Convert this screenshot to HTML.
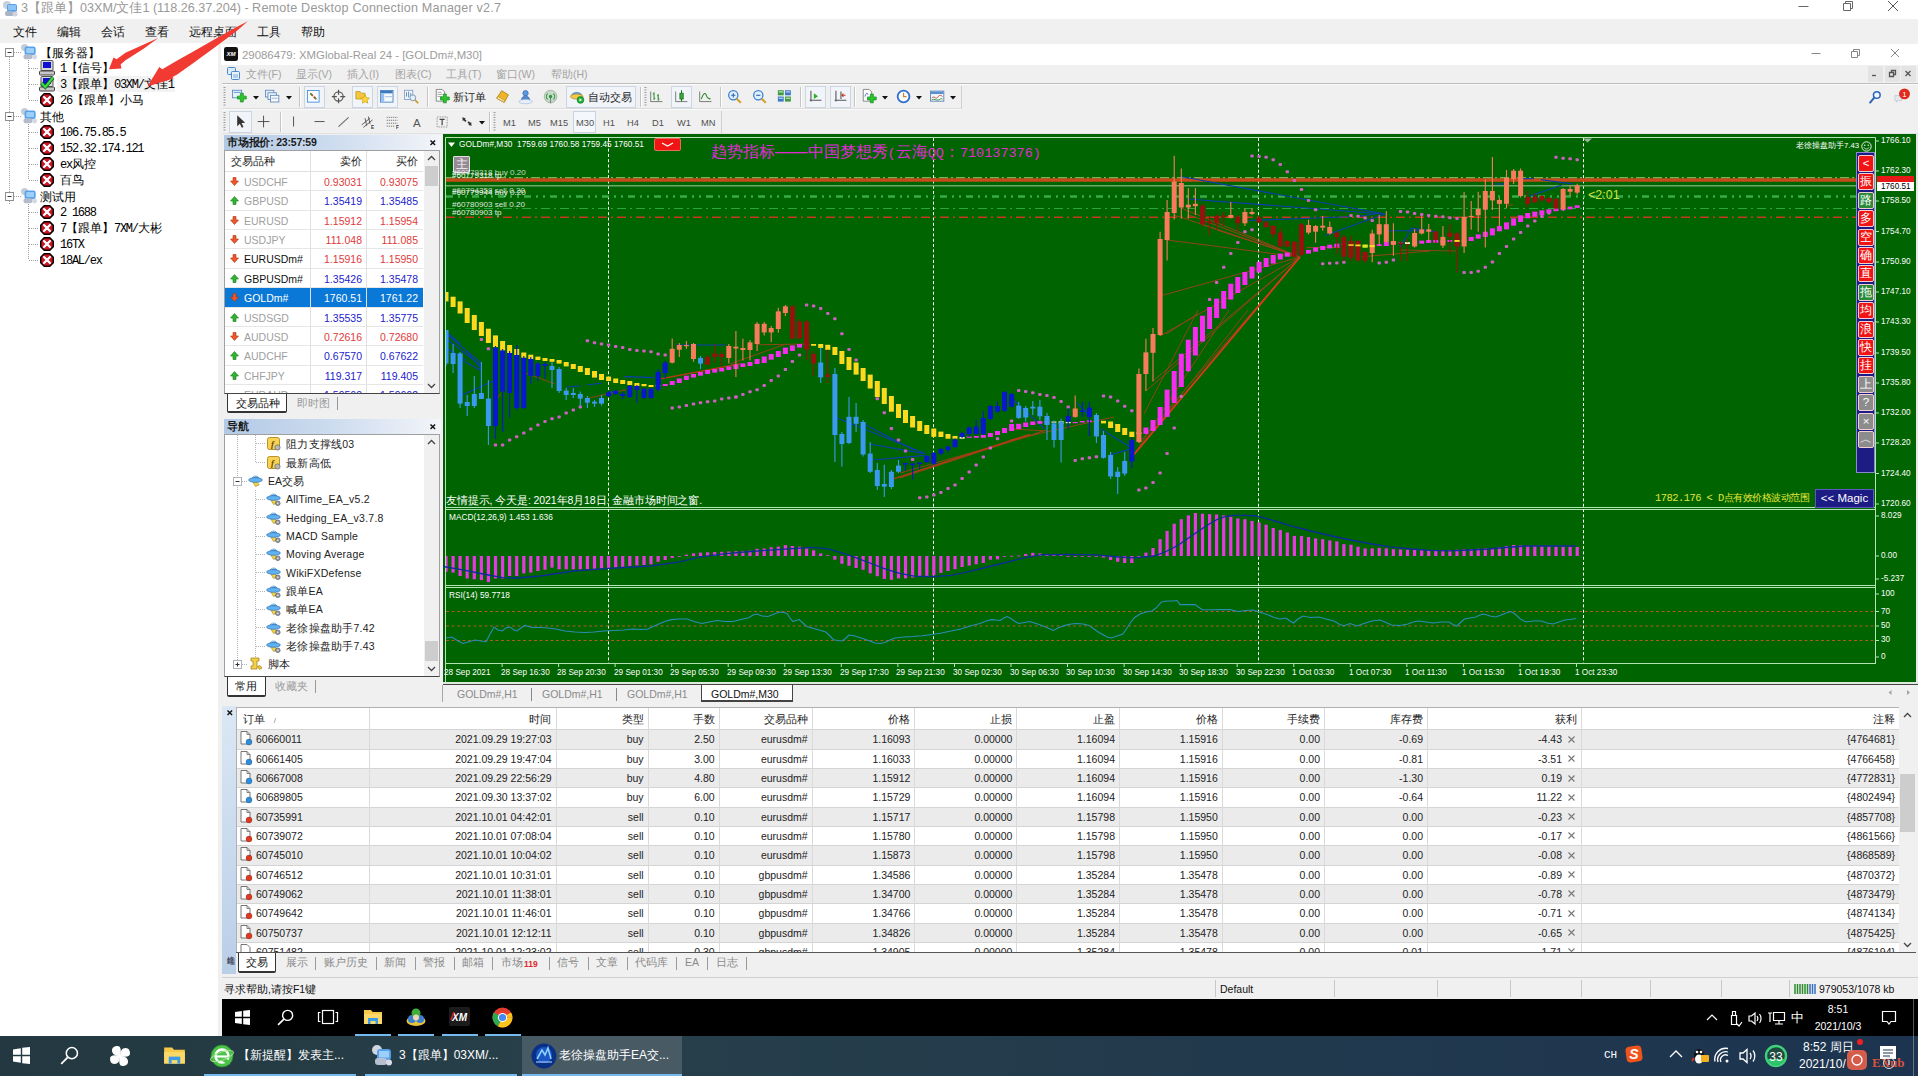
<!DOCTYPE html>
<html><head><meta charset="utf-8"><title>RDCMan - MT4</title><style>
*{box-sizing:border-box;margin:0;padding:0}
html,body{width:1918px;height:1076px;overflow:hidden;background:#fff}
body{font-family:"Liberation Sans",sans-serif;position:relative}
div{position:absolute}
svg{position:absolute;overflow:visible}
.m{font-family:"Liberation Mono",monospace}
</style></head>
<body>
<div style="left:0px;top:0px;width:1918px;height:19px;background:#ffffff;"></div>
<svg style="left:1px;top:0px" width="18" height="18" viewBox="0 0 18 18"><circle cx="6" cy="5" r="4" fill="#c8d0dc"/><rect x="6" y="4" width="10" height="8" rx="2" fill="#5aa0e8"/><rect x="7" y="5" width="8" height="5" fill="#8cc4f8"/><rect x="4" y="11" width="9" height="5" rx="2" fill="#a8b4c8"/><circle cx="14" cy="14" r="2.5" fill="#d0d4e0"/></svg>
<div style="left:21px;top:0px;font-size:12.6px;color:#999;white-space:nowrap;line-height:17px;height:17px;">3【跟单】03XM/文佳1 (118.26.37.204) - <span style="letter-spacing:0.2px">Remote Desktop Connection Manager v2.7</span></div>
<svg style="left:1790px;top:0" width="128" height="19"><path d="M8.5 6.5h10" stroke="#666" stroke-width="1" fill="none"/><path d="M53.5 3.5h7v7h-7z M55.5 3.5v-2h7v7h-2" stroke="#666" stroke-width="1" fill="none"/><path d="M98 1l10 10M108 1l-10 10" stroke="#555" stroke-width="1" fill="none"/></svg>
<div style="left:0px;top:19px;width:1918px;height:25px;background:#f0f0f0;"></div>
<div style="left:13px;top:24px;font-size:12px;color:#111;white-space:nowrap;line-height:16px;height:16px;">文件</div>
<div style="left:57px;top:24px;font-size:12px;color:#111;white-space:nowrap;line-height:16px;height:16px;">编辑</div>
<div style="left:101px;top:24px;font-size:12px;color:#111;white-space:nowrap;line-height:16px;height:16px;">会话</div>
<div style="left:145px;top:24px;font-size:12px;color:#111;white-space:nowrap;line-height:16px;height:16px;">查看</div>
<div style="left:189px;top:24px;font-size:12px;color:#111;white-space:nowrap;line-height:16px;height:16px;">远程桌面</div>
<div style="left:257px;top:24px;font-size:12px;color:#111;white-space:nowrap;line-height:16px;height:16px;">工具</div>
<div style="left:301px;top:24px;font-size:12px;color:#111;white-space:nowrap;line-height:16px;height:16px;">帮助</div>
<div style="left:0px;top:43px;width:218px;height:993px;background:#ffffff;"></div>
<div style="left:218px;top:43px;width:4px;height:993px;background:#f0f0f0;"></div>
<div style="left:221px;top:44px;width:1697px;height:21px;background:#ffffff;"></div>
<svg style="left:224px;top:47px" width="14" height="14" viewBox="0 0 15 15"><rect width="15" height="15" rx="2.5" fill="#111"/><text x="7.5" y="10" font-size="6.5" font-weight="bold" font-style="italic" text-anchor="middle" fill="#fff" font-family="Liberation Sans">XM</text></svg>
<div style="left:242px;top:47px;font-size:11.4px;color:#9c9c9c;white-space:nowrap;line-height:16px;height:16px;">29086479: XMGlobal-Real 24 - [GOLDm#,M30]</div>
<svg style="left:1800px;top:43px" width="118" height="22"><path d="M11.5 10.5h9" stroke="#888" fill="none"/><path d="M51.5 8.5h6v6h-6z M53.5 8.5v-2h6v6h-2" stroke="#888" fill="none"/><path d="M91 6l8 8M99 6l-8 8" stroke="#888" fill="none"/></svg>
<div style="left:222px;top:65px;width:1696px;height:19px;background:#f0f0f0;"></div>
<svg style="left:226px;top:66px" width="15" height="15" viewBox="0 0 15 15"><rect x="1.5" y="1.5" width="8" height="7" rx="1" fill="#dcebf8" stroke="#4a88c8"/><rect x="5.5" y="5.5" width="8" height="8" rx="1" fill="#eaf3fb" stroke="#4a88c8"/><path d="M7 9h5M7 11h5" stroke="#7aa6d8"/></svg>
<div style="left:246px;top:67px;font-size:10.5px;color:#a4a4a4;white-space:nowrap;line-height:14px;height:14px;">文件(F)</div>
<div style="left:296px;top:67px;font-size:10.5px;color:#a4a4a4;white-space:nowrap;line-height:14px;height:14px;">显示(V)</div>
<div style="left:347px;top:67px;font-size:10.5px;color:#a4a4a4;white-space:nowrap;line-height:14px;height:14px;">插入(I)</div>
<div style="left:395px;top:67px;font-size:10.5px;color:#a4a4a4;white-space:nowrap;line-height:14px;height:14px;">图表(C)</div>
<div style="left:446px;top:67px;font-size:10.5px;color:#a4a4a4;white-space:nowrap;line-height:14px;height:14px;">工具(T)</div>
<div style="left:496px;top:67px;font-size:10.5px;color:#a4a4a4;white-space:nowrap;line-height:14px;height:14px;">窗口(W)</div>
<div style="left:551px;top:67px;font-size:10.5px;color:#a4a4a4;white-space:nowrap;line-height:14px;height:14px;">帮助(H)</div>
<svg style="left:1868px;top:66px" width="16" height="16"><rect width="15" height="16" fill="#e4e4e4"/><path d="M4 9.5h4" stroke="#555" stroke-width="1.3" fill="none"/></svg>
<svg style="left:1885px;top:66px" width="16" height="16"><rect width="15" height="16" fill="#e4e4e4"/><path d="M4.5 6.5h4v4h-4zM6.5 6.5v-2h4v4h-2" stroke="#555" stroke-width="1.3" fill="none"/></svg>
<svg style="left:1901px;top:66px" width="16" height="16"><rect width="15" height="16" fill="#e4e4e4"/><path d="M4.5 5l5 5M9.5 5l-5 5" stroke="#555" stroke-width="1.3" fill="none"/></svg>
<div style="left:222px;top:83px;width:1696px;height:1px;background:#bdbdbd;"></div>
<div style="left:222px;top:84px;width:1696px;height:1px;background:#fbfbfb;"></div>
<div style="left:222px;top:85px;width:1696px;height:48px;background:#f0f0f0;"></div>
<div style="left:222px;top:108px;width:740px;height:1px;background:#dcdcdc;"></div>
<div style="left:222px;top:109px;width:740px;height:1px;background:#fafafa;"></div>
<div style="left:961px;top:86px;width:1px;height:23px;background:#d0d0d0;"></div>
<div style="left:721px;top:111px;width:1px;height:22px;background:#d0d0d0;"></div>
<div style="left:222px;top:133px;width:1696px;height:1px;background:#e2e2e2;"></div>
<svg style="left:223px;top:87px" width="3" height="20"><path d="M1.5 0v20" stroke="#9a9a9a" stroke-width="2" stroke-dasharray="1,1.5"/></svg>
<svg style="left:232.4px;top:89.4px" width="15.1" height="15.1" viewBox="0 0 18 18"><rect x="0.5" y="1.5" width="11" height="9" fill="#e8f2fb" stroke="#4d86c6"/><path d="M2 4h8" stroke="#4d86c6"/><path d="M6.5 8.5h3.5v-3.5h3.5v3.5h3.5v3.5h-3.5v3.5h-3.5v-3.5h-3.5z" fill="#2cc62c" stroke="#11861a" stroke-width="0.8"/></svg>
<svg style="left:253px;top:96px" width="7" height="4"><path d="M0 0h6l-3 3.5z" fill="#111"/></svg>
<svg style="left:265.4px;top:89.4px" width="15.1" height="15.1" viewBox="0 0 18 18"><rect x="0.5" y="1.5" width="10" height="8" fill="#e8f2fb" stroke="#5a86b8"/><rect x="3.5" y="4.5" width="10" height="8" fill="#f0f6fc" stroke="#5a86b8"/><rect x="6.5" y="7.5" width="10" height="8" fill="#f6fafd" stroke="#5a86b8"/><path d="M8 11h7" stroke="#88a8cc"/></svg>
<svg style="left:286px;top:96px" width="7" height="4"><path d="M0 0h6l-3 3.5z" fill="#111"/></svg>
<div style="left:299px;top:87px;width:1px;height:20px;background:#c4c4c4;"></div>
<div style="left:300px;top:87px;width:1px;height:20px;background:#ffffff;"></div>
<div style="left:304px;top:86px;width:21px;height:22px;background:#f1f5fa;border:1px solid #ccd6e2;"></div>
<svg style="left:307.3px;top:90.3px" width="13.4" height="13.4" viewBox="0 0 16 16"><rect x="0.5" y="0.5" width="14" height="14" fill="#f7fbff" stroke="#3f8ad8"/><path d="M4 4l3 3M8 8l3 3" stroke="#e03a1a" stroke-width="2"/><path d="M5 7l-1.5-3.5L7 5z" fill="#27a827"/><path d="M10 8l1.5 3.5L8 10z" fill="#27a827"/></svg>
<svg style="left:331.4px;top:89.4px" width="15.1" height="15.1" viewBox="0 0 18 18"><circle cx="9" cy="9" r="5.5" fill="none" stroke="#555" stroke-width="1.4"/><path d="M9 1v6M9 11v6M1 9h6M11 9h6" stroke="#555" stroke-width="1.4"/></svg>
<div style="left:352px;top:86px;width:21px;height:22px;background:#f1f5fa;border:1px solid #ccd6e2;"></div>
<svg style="left:355.4px;top:89.4px" width="15.1" height="15.1" viewBox="0 0 18 18"><path d="M1 3h5l1.5 2H12v7H1z" fill="#f3c63e" stroke="#b88d14" stroke-width="0.8"/><path d="M12 7l1.6 3.3 3.6.5-2.6 2.5.6 3.6-3.2-1.7-3.2 1.7.6-3.6-2.6-2.5 3.6-.5z" fill="#ffd83a" stroke="#c89b12" stroke-width="0.8"/></svg>
<div style="left:377px;top:86px;width:21px;height:22px;background:#f1f5fa;border:1px solid #ccd6e2;"></div>
<svg style="left:380.4px;top:90.3px" width="14.3" height="13.4" viewBox="0 0 17 16"><rect x="0.5" y="0.5" width="15" height="14" fill="#f4f9fe" stroke="#3e78be"/><rect x="1" y="1" width="14" height="3" fill="#3e78be"/><rect x="1" y="4" width="4" height="10" fill="#9cc0ea"/><path d="M6 8h9" stroke="#9ab4d4"/></svg>
<svg style="left:404.4px;top:89.4px" width="15.1" height="15.1" viewBox="0 0 18 18"><rect x="0.5" y="1.5" width="10" height="11" fill="#eef5fb" stroke="#7c9cc4"/><path d="M3 4v5M5.5 3v7M8 5v3" stroke="#5078a8"/><circle cx="10.5" cy="10.5" r="3.5" fill="#dff0fa" stroke="#6c8cb4"/><path d="M13 13l4 4" stroke="#c89a24" stroke-width="2"/></svg>
<div style="left:427px;top:87px;width:1px;height:20px;background:#c4c4c4;"></div>
<div style="left:428px;top:87px;width:1px;height:20px;background:#ffffff;"></div>
<svg style="left:435.4px;top:89.4px" width="15.1" height="15.1" viewBox="0 0 18 18"><path d="M1.5 0.5h7l3 3v11h-10z" fill="#fdfdfd" stroke="#777"/><path d="M3 4h5M3 6.5h6M3 9h6" stroke="#999"/><path d="M6.5 9.5h3.5v-3.5h3.5v3.5h3.5v3.5h-3.5v3.5h-3.5v-3.5h-3.5z" fill="#2cc62c" stroke="#11861a" stroke-width="0.8"/></svg>
<div style="left:453px;top:90px;font-size:10.5px;color:#222;white-space:nowrap;line-height:14px;height:14px;">新订单</div>
<svg style="left:495.4px;top:89.4px" width="15.1" height="15.1" viewBox="0 0 18 18"><path d="M2 11l6-9 8 5-5 9z" fill="#f0b428" stroke="#a87808" stroke-width="0.9"/><path d="M2 11l9 5 1-2-8-5z" fill="#fbe9a8" stroke="#a87808" stroke-width="0.7"/></svg>
<svg style="left:518.4px;top:89.4px" width="15.1" height="15.1" viewBox="0 0 18 18"><circle cx="9" cy="5" r="3.2" fill="#5a9ae0" stroke="#2f62a8" stroke-width="0.8"/><path d="M4 14c0-4 2-5.5 5-5.5s5 1.500 5 5.500z" fill="#4e88cf" stroke="#2f62a8" stroke-width="0.8"/><ellipse cx="9" cy="15" rx="8" ry="2.6" fill="#e6eef8" stroke="#a8bcd8" stroke-width="0.8"/></svg>
<svg style="left:543.4px;top:89.4px" width="15.1" height="15.1" viewBox="0 0 18 18"><circle cx="9" cy="9" r="7.5" fill="#c9d9c9" stroke="#8fa48f" stroke-width="0.8"/><circle cx="9" cy="9" r="2" fill="#2a9a3a"/><path d="M5.500 5.500a5 5 0 0 0 0 7M12.500 5.500a5 5 0 0 1 0 7" stroke="#2a9a3a" stroke-width="1.3" fill="none"/><path d="M9 9v8" stroke="#577"/></svg>
<div style="left:566px;top:86px;width:70px;height:22px;background:#f1f5fa;border:1px solid #ccd6e2;"></div>
<svg style="left:570.4px;top:89.4px" width="15.1" height="15.1" viewBox="0 0 18 18"><path d="M2 8c0-5 12-5 12 0z" fill="#66aee8" stroke="#2b66b0" stroke-width="0.8"/><ellipse cx="8" cy="9" rx="7.5" ry="3" fill="#f2c84a" stroke="#a88418" stroke-width="0.8"/><circle cx="12.5" cy="13" r="4" fill="#21b035" stroke="#0d7a1c" stroke-width="0.8"/><path d="M11.300 11l3 2-3 2z" fill="#fff"/></svg>
<div style="left:588px;top:90px;font-size:10.5px;color:#222;white-space:nowrap;line-height:14px;height:14px;">自动交易</div>
<div style="left:640px;top:87px;width:1px;height:20px;background:#c4c4c4;"></div>
<div style="left:641px;top:87px;width:1px;height:20px;background:#ffffff;"></div>
<svg style="left:644px;top:87px" width="3" height="20"><path d="M1.5 0v20" stroke="#9a9a9a" stroke-width="2" stroke-dasharray="1,1.5"/></svg>
<svg style="left:649.4px;top:89.4px" width="15.1" height="15.1" viewBox="0 0 18 18"><path d="M2 3v12h14" stroke="#666" fill="none"/><path d="M6 4v9M4.5 6h1.500M6 11h1.500M11 6v8M9.500 8h1.500M11 12h1.500" stroke="#2c8c2c" stroke-width="1.2" fill="none"/></svg>
<div style="left:671px;top:86px;width:21px;height:22px;background:#f1f5fa;border:1px solid #ccd6e2;"></div>
<svg style="left:674.4px;top:89.4px" width="15.1" height="15.1" viewBox="0 0 18 18"><path d="M2 3v12h14" stroke="#666" fill="none"/><rect x="7" y="5" width="4" height="7" fill="#3aa83a" stroke="#176a17" stroke-width="0.8"/><path d="M9 1.500v3.500M9 12v2.500" stroke="#176a17" stroke-width="1.2"/></svg>
<svg style="left:698.4px;top:89.4px" width="15.1" height="15.1" viewBox="0 0 18 18"><path d="M2 3v12h14" stroke="#666" fill="none"/><path d="M4 12c3-8 5-8 6-4s3 3 5 4" stroke="#2c8c2c" stroke-width="1.300" fill="none"/></svg>
<div style="left:720px;top:87px;width:1px;height:20px;background:#c4c4c4;"></div>
<div style="left:721px;top:87px;width:1px;height:20px;background:#ffffff;"></div>
<svg style="left:727.4px;top:89.4px" width="15.1" height="15.1" viewBox="0 0 18 18"><circle cx="7.500" cy="7.500" r="5.500" fill="#dff0ff" stroke="#3d7ecb" stroke-width="1.500"/><path d="M5 7.500h5M7.500 5v5" stroke="#2d62a8" stroke-width="1.300"/><path d="M11.500 11.500l5 5" stroke="#d3a02a" stroke-width="2.500"/></svg>
<svg style="left:752.4px;top:89.4px" width="15.1" height="15.1" viewBox="0 0 18 18"><circle cx="7.500" cy="7.500" r="5.500" fill="#dff0ff" stroke="#3d7ecb" stroke-width="1.500"/><path d="M5 7.500h5" stroke="#2d62a8" stroke-width="1.300"/><path d="M11.500 11.500l5 5" stroke="#d3a02a" stroke-width="2.500"/></svg>
<svg style="left:777.4px;top:89.4px" width="15.1" height="15.1" viewBox="0 0 18 18"><rect x="1" y="1.500" width="7" height="6" fill="#3c9a3c"/><rect x="9.500" y="1.500" width="7" height="6" fill="#3c78c8"/><rect x="1" y="9" width="7" height="6" fill="#3c78c8"/><rect x="9.500" y="9" width="7" height="6" fill="#3c9a3c"/><path d="M2 3.500h5M10.500 3.500h5M2 11h5M10.500 11h5" stroke="#fff" stroke-width="1"/></svg>
<div style="left:800px;top:87px;width:1px;height:20px;background:#c4c4c4;"></div>
<div style="left:801px;top:87px;width:1px;height:20px;background:#ffffff;"></div>
<div style="left:805px;top:86px;width:21px;height:22px;background:#f1f5fa;border:1px solid #ccd6e2;"></div>
<svg style="left:808.4px;top:89.4px" width="15.1" height="15.1" viewBox="0 0 18 18"><path d="M3.500 2v13M2 13.500h14" stroke="#555" stroke-width="1.300" fill="none"/><path d="M7 5l5 3.500-5 3.500z" fill="#2cb02c"/></svg>
<div style="left:830px;top:86px;width:21px;height:22px;background:#f1f5fa;border:1px solid #ccd6e2;"></div>
<svg style="left:833.4px;top:89.4px" width="15.1" height="15.1" viewBox="0 0 18 18"><path d="M3.500 2v13M2 13.500h14M9.500 3v9" stroke="#555" stroke-width="1.300" fill="none"/><path d="M15 7.500h-4M12.500 5.500l-2 2 2 2" stroke="#c03a2a" stroke-width="1.200" fill="none"/></svg>
<div style="left:854px;top:87px;width:1px;height:20px;background:#c4c4c4;"></div>
<div style="left:855px;top:87px;width:1px;height:20px;background:#ffffff;"></div>
<svg style="left:862.4px;top:89.4px" width="15.1" height="15.1" viewBox="0 0 18 18"><path d="M1.500 0.500h7l3 3v11h-10z" fill="#fdfdfd" stroke="#777"/><path d="M3.500 9c1.500-5 3-5 3.500-2" stroke="#3a6ab0" fill="none"/><path d="M6.500 9.500h3.500v-3.500h3.500v3.500h3.500v3.500h-3.500v3.500h-3.500v-3.500h-3.500z" fill="#2cc62c" stroke="#11861a" stroke-width="0.8"/></svg>
<svg style="left:882px;top:96px" width="7" height="4"><path d="M0 0h6l-3 3.5z" fill="#111"/></svg>
<svg style="left:896.4px;top:89.4px" width="15.1" height="15.1" viewBox="0 0 18 18"><circle cx="9" cy="9" r="7" fill="#fdfdfd" stroke="#2f6fd0" stroke-width="2.200"/><path d="M9 4.500v4.500h3.500" stroke="#c88a1a" stroke-width="1.400" fill="none"/></svg>
<svg style="left:916px;top:96px" width="7" height="4"><path d="M0 0h6l-3 3.5z" fill="#111"/></svg>
<svg style="left:930.4px;top:89.4px" width="15.1" height="15.1" viewBox="0 0 18 18"><rect x="0.500" y="2.500" width="16" height="12" fill="#f2f7fc" stroke="#4d7fb8"/><rect x="1" y="3" width="15" height="3" fill="#5a8ed0"/><path d="M2 11c3-4 5 2 7-1s4-3 6-1" stroke="#c0392b" fill="none"/><path d="M2 13c3-2 5 1 8 0s3-2 5-1" stroke="#2c8c2c" fill="none"/></svg>
<svg style="left:950px;top:96px" width="7" height="4"><path d="M0 0h6l-3 3.5z" fill="#111"/></svg>
<svg style="left:1868.3px;top:90.3px" width="13.4" height="13.4" viewBox="0 0 16 16"><circle cx="10.500" cy="6" r="4" fill="#eef6ff" stroke="#2c64b8" stroke-width="1.800"/><path d="M7.500 9l-5 6" stroke="#2c64b8" stroke-width="2.400" stroke-linecap="round"/></svg>
<svg style="left:1893.6px;top:88.4px" width="16.8" height="15.1" viewBox="0 0 20 18"><path d="M1 9h8v6H5l-2 2v-2H1z" fill="#e4e8ee" stroke="#b8c0cc" stroke-width="0.800"/><circle cx="12.500" cy="7" r="6.500" fill="#e02a1c"/><text x="12.500" y="10.500" font-size="9.500" text-anchor="middle" fill="#fff" font-family="Liberation Sans">1</text></svg>
<svg style="left:223px;top:112px" width="3" height="20"><path d="M1.5 0v20" stroke="#9a9a9a" stroke-width="2" stroke-dasharray="1,1.5"/></svg>
<div style="left:229px;top:111px;width:23px;height:22px;background:#f1f5fa;border:1px solid #ccd6e2;"></div>
<svg style="left:233.4px;top:114.4px" width="15.1" height="15.1" viewBox="0 0 18 18"><path d="M5 1.500v13l3.200-3 2.300 5 2-1-2.300-4.800 4.300-.200z" fill="#333"/></svg>
<svg style="left:256.4px;top:114.4px" width="15.1" height="15.1" viewBox="0 0 18 18"><path d="M9 2v14M2 9h14" stroke="#444" stroke-width="1.100"/></svg>
<div style="left:280px;top:112px;width:1px;height:20px;background:#c4c4c4;"></div>
<div style="left:281px;top:112px;width:1px;height:20px;background:#ffffff;"></div>
<svg style="left:286.4px;top:114.4px" width="15.1" height="15.1" viewBox="0 0 18 18"><path d="M9 3v12" stroke="#555" stroke-width="1.200"/></svg>
<svg style="left:312.4px;top:114.4px" width="15.1" height="15.1" viewBox="0 0 18 18"><path d="M3 9h12" stroke="#555" stroke-width="1.200"/></svg>
<svg style="left:336.4px;top:114.4px" width="15.1" height="15.1" viewBox="0 0 18 18"><path d="M3 15l12-11" stroke="#666" stroke-width="1.200"/></svg>
<svg style="left:360.4px;top:114.4px" width="15.1" height="15.1" viewBox="0 0 18 18"><path d="M2 13l10-8M4 16l11-9M6 5l2 9M10 3l2 9" stroke="#555" stroke-width="1.100"/><text x="13" y="17.500" font-size="5.500" fill="#333" font-family="Liberation Sans" font-weight="bold">E</text></svg>
<svg style="left:385.4px;top:114.4px" width="15.1" height="15.1" viewBox="0 0 18 18"><path d="M2 4h13M2 7.500h13M2 11h13M2 14.500h9" stroke="#666" stroke-width="1" stroke-dasharray="1.500,1"/><text x="13" y="17.500" font-size="5.500" fill="#333" font-family="Liberation Sans" font-weight="bold">F</text></svg>
<div style="left:413px;top:116px;font-size:11.5px;color:#555;white-space:nowrap;line-height:14px;height:14px;">A</div>
<svg style="left:435.4px;top:114.4px" width="15.1" height="15.1" viewBox="0 0 18 18"><rect x="2.500" y="3.500" width="12" height="12" fill="none" stroke="#777" stroke-dasharray="1.500,1.500"/><path d="M5.500 6.500h6M8.500 6.500v7" stroke="#444" stroke-width="1.400"/></svg>
<svg style="left:459.4px;top:114.4px" width="15.1" height="15.1" viewBox="0 0 18 18"><path d="M4 4l4 1-1 1 2 2-1.500 1.500-2-2-1 1z" fill="#333"/><path d="M15 14l-4-1 1-1-2-2 1.500-1.500 2 2 1-1z" fill="#333"/></svg>
<svg style="left:479px;top:121px" width="7" height="4"><path d="M0 0h6l-3 3.5z" fill="#111"/></svg>
<div style="left:489px;top:112px;width:1px;height:20px;background:#c4c4c4;"></div>
<div style="left:490px;top:112px;width:1px;height:20px;background:#ffffff;"></div>
<svg style="left:493px;top:112px" width="3" height="20"><path d="M1.5 0v20" stroke="#9a9a9a" stroke-width="2" stroke-dasharray="1,1.5"/></svg>
<div style="left:503px;top:117px;font-size:9.3px;color:#505050;white-space:nowrap;line-height:12px;height:12px;">M1</div>
<div style="left:528px;top:117px;font-size:9.3px;color:#505050;white-space:nowrap;line-height:12px;height:12px;">M5</div>
<div style="left:550px;top:117px;font-size:9.3px;color:#505050;white-space:nowrap;line-height:12px;height:12px;">M15</div>
<div style="left:573px;top:111px;width:23px;height:22px;background:#f4f7fb;border:1px solid #c9d3df;"></div>
<div style="left:576px;top:117px;font-size:9.3px;color:#505050;white-space:nowrap;line-height:12px;height:12px;">M30</div>
<div style="left:603px;top:117px;font-size:9.3px;color:#505050;white-space:nowrap;line-height:12px;height:12px;">H1</div>
<div style="left:627px;top:117px;font-size:9.3px;color:#505050;white-space:nowrap;line-height:12px;height:12px;">H4</div>
<div style="left:652px;top:117px;font-size:9.3px;color:#505050;white-space:nowrap;line-height:12px;height:12px;">D1</div>
<div style="left:677px;top:117px;font-size:9.3px;color:#505050;white-space:nowrap;line-height:12px;height:12px;">W1</div>
<div style="left:701px;top:117px;font-size:9.3px;color:#505050;white-space:nowrap;line-height:12px;height:12px;">MN</div>
<div style="left:442px;top:134px;width:1476px;height:548px;background:#006400;"></div>
<div style="left:442px;top:134px;width:3px;height:548px;background:#0a580a;"></div>
<div style="left:442px;top:682px;width:1476px;height:2px;background:#dfeadf;"></div>
<div style="left:1916px;top:134px;width:2px;height:550px;background:#e8e8e8;"></div>
<svg style="left:0;top:0" width="1918" height="1076" viewBox="0 0 1918 1076"><defs><clipPath id="cm"><rect x="446" y="139" width="1429" height="368"/></clipPath><clipPath id="cs"><rect x="446" y="510" width="1429" height="153"/></clipPath></defs><g stroke="#b4e4b4" stroke-width="1" fill="none"><path d="M445.5 682V137.5H1875.5V664"/><path d="M445 507.500H1876M445 509.500H1876M445 585.500H1876M445 587.500H1876M445 663.500H1876"/></g><g stroke="#ffffff" stroke-width="1" stroke-dasharray="3,2.300"><path d="M608.5 138V663"/><path d="M933.5 138V663"/><path d="M1258.5 138V663"/><path d="M1583.5 138V663"/></g><g clip-path="url(#cm)"><path d="M446 180H1875" stroke="#c84a18" stroke-width="3.600"/><path d="M446 177.700H1875" stroke="#9cc070" stroke-width="1" stroke-dasharray="9,3,2,3"/><path d="M446 185.700H1875" stroke="#6aa86a" stroke-width="1.400"/><path d="M446 196.500H1875" stroke="#38ac4a" stroke-width="2.300" stroke-dasharray="7,5,2,5,2,5"/><path d="M446 208.500H1875" stroke="#2aa840" stroke-width="1.200" stroke-dasharray="9,4,2,4"/><path d="M446 217.200H1875" stroke="#c8381a" stroke-width="1.500" stroke-dasharray="9,4,2,4"/><g stroke="#a8401c" stroke-width="1" fill="none" opacity="0.85"><path d="M525.5 373L555 384"/><path d="M585 399L626 389.7"/><path d="M661 378.5L740 363.6"/><path d="M730 364L786 344"/><path d="M758 344.8L804 344"/><path d="M893.6 478.7L1030 434"/><path d="M900 478L1046 430"/><path d="M900 473L1038 433.8"/><path d="M1010 440L1114 417"/><path d="M1010 429L1045 430.8"/><path d="M1306.6 247.5L1340 247.5"/><path d="M1362 256.7L1430 251"/><path d="M1400 250L1456 251"/><path d="M1506 205.6L1513 204.7"/><path d="M496 400.8L501 393"/><path d="M1139 443L1300 257"/><path d="M1146 391L1300 257"/><path d="M1153 381L1300 257"/><path d="M1160 336L1300 257"/><path d="M1160 296L1300 257"/><path d="M1167 240L1300 257"/><path d="M1174 215L1300 257"/><path d="M1181 208L1300 257"/><path d="M1189 215L1300 257"/><path d="M1203 225L1300 257"/><path d="M1217 230L1300 257"/><path d="M1133.6 455L1248 310"/><path d="M1133.6 455L1229 310"/><path d="M1144 414L1198 310"/><path d="M1166 334L1198 313.7"/></g><path d="M1133.600 455L1300 257" stroke="#d83a18" stroke-width="1.800"/><path d="M661 379L740 364M893.600 479L1030 434.500" stroke="#b83a14" stroke-width="1.200"/><g stroke="#0c3cb4" stroke-width="1.100" fill="none"><path d="M446.5 332L460.4 344"/><path d="M446.5 334L480 361.8"/><path d="M448 340L480 365"/><path d="M466 350.6L480 367"/><path d="M462 360L480 370"/><path d="M480 361L480 371"/><path d="M462 395L495.8 380"/><path d="M446 348L466 360"/><path d="M607 393.4L616.6 390.6"/><path d="M566 387L581 386"/><path d="M587 385L602 383"/><path d="M624 376.6L654 377.6"/><path d="M676 345L726 345"/><path d="M837 418L925 453.6"/><path d="M860 422L914 450"/><path d="M869.4 444L925 453.6"/><path d="M873 460L925 455.4"/><path d="M1010 397L1045 429"/><path d="M1077 403L1088 414"/><path d="M1101 429L1131 447.5"/><path d="M1110 455L1129 449.4"/><path d="M1182 176.8L1384.6 214"/><path d="M1187.6 199L1384.6 214"/><path d="M1384.6 214L1325 235.4"/><path d="M1356.8 216.8L1381 213"/><path d="M1249 220.5L1349 216.8"/><path d="M1386.5 230.7L1420 230.7"/><path d="M1400 248.4L1411 228"/><path d="M1411 228L1435 231.6"/><path d="M1494.8 184L1504 184"/><path d="M1522.7 178.7L1533.8 178.7"/><path d="M1530 196L1561.7 185"/><path d="M1541 179.6L1572.9 184"/></g><g fill="#cf5fc4"><rect x="479.7" y="338.0" width="3.400" height="3" rx="1"/><rect x="486.7" y="347.3" width="3.400" height="3" rx="1"/><rect x="493.8" y="443.5" width="3.400" height="3" rx="1"/><rect x="500.9" y="443.5" width="3.400" height="3" rx="1"/><rect x="507.9" y="438.5" width="3.400" height="3" rx="1"/><rect x="515.0" y="435.2" width="3.400" height="3" rx="1"/><rect x="522.1" y="431.5" width="3.400" height="3" rx="1"/><rect x="529.1" y="427.5" width="3.400" height="3" rx="1"/><rect x="536.2" y="423.5" width="3.400" height="3" rx="1"/><rect x="543.3" y="420.1" width="3.400" height="3" rx="1"/><rect x="550.3" y="417.2" width="3.400" height="3" rx="1"/><rect x="557.4" y="415.5" width="3.400" height="3" rx="1"/><rect x="564.5" y="411.5" width="3.400" height="3" rx="1"/><rect x="571.6" y="408.5" width="3.400" height="3" rx="1"/><rect x="578.6" y="405.5" width="3.400" height="3" rx="1"/><rect x="585.7" y="339.3" width="3.400" height="3" rx="1"/><rect x="592.8" y="341.3" width="3.400" height="3" rx="1"/><rect x="599.8" y="342.5" width="3.400" height="3" rx="1"/><rect x="606.9" y="343.5" width="3.400" height="3" rx="1"/><rect x="614.0" y="344.9" width="3.400" height="3" rx="1"/><rect x="621.0" y="346.0" width="3.400" height="3" rx="1"/><rect x="628.1" y="348.0" width="3.400" height="3" rx="1"/><rect x="635.2" y="349.1" width="3.400" height="3" rx="1"/><rect x="642.3" y="349.5" width="3.400" height="3" rx="1"/><rect x="649.3" y="350.2" width="3.400" height="3" rx="1"/><rect x="656.4" y="352.5" width="3.400" height="3" rx="1"/><rect x="663.5" y="353.5" width="3.400" height="3" rx="1"/><rect x="670.5" y="406.5" width="3.400" height="3" rx="1"/><rect x="677.6" y="405.5" width="3.400" height="3" rx="1"/><rect x="684.7" y="404.0" width="3.400" height="3" rx="1"/><rect x="691.8" y="402.5" width="3.400" height="3" rx="1"/><rect x="698.8" y="401.2" width="3.400" height="3" rx="1"/><rect x="705.9" y="400.2" width="3.400" height="3" rx="1"/><rect x="713.0" y="399.5" width="3.400" height="3" rx="1"/><rect x="720.0" y="397.5" width="3.400" height="3" rx="1"/><rect x="727.1" y="396.5" width="3.400" height="3" rx="1"/><rect x="734.2" y="395.5" width="3.400" height="3" rx="1"/><rect x="734.2" y="395.5" width="3.400" height="3" rx="1"/><rect x="741.2" y="393.0" width="3.400" height="3" rx="1"/><rect x="748.3" y="390.2" width="3.400" height="3" rx="1"/><rect x="755.4" y="388.3" width="3.400" height="3" rx="1"/><rect x="762.5" y="383.9" width="3.400" height="3" rx="1"/><rect x="769.5" y="379.0" width="3.400" height="3" rx="1"/><rect x="776.6" y="374.4" width="3.400" height="3" rx="1"/><rect x="783.7" y="368.1" width="3.400" height="3" rx="1"/><rect x="790.7" y="360.1" width="3.400" height="3" rx="1"/><rect x="797.8" y="353.5" width="3.400" height="3" rx="1"/><rect x="804.9" y="303.5" width="3.400" height="3" rx="1"/><rect x="811.9" y="304.5" width="3.400" height="3" rx="1"/><rect x="819.0" y="307.1" width="3.400" height="3" rx="1"/><rect x="826.1" y="312.1" width="3.400" height="3" rx="1"/><rect x="833.1" y="317.3" width="3.400" height="3" rx="1"/><rect x="840.2" y="332.2" width="3.400" height="3" rx="1"/><rect x="847.3" y="348.0" width="3.400" height="3" rx="1"/><rect x="854.4" y="358.5" width="3.400" height="3" rx="1"/><rect x="861.4" y="370.5" width="3.400" height="3" rx="1"/><rect x="868.5" y="383.5" width="3.400" height="3" rx="1"/><rect x="875.6" y="397.2" width="3.400" height="3" rx="1"/><rect x="882.6" y="411.2" width="3.400" height="3" rx="1"/><rect x="889.7" y="427.0" width="3.400" height="3" rx="1"/><rect x="896.8" y="438.5" width="3.400" height="3" rx="1"/><rect x="903.8" y="449.5" width="3.400" height="3" rx="1"/><rect x="910.9" y="458.0" width="3.400" height="3" rx="1"/><rect x="918.0" y="496.2" width="3.400" height="3" rx="1"/><rect x="925.1" y="495.5" width="3.400" height="3" rx="1"/><rect x="932.1" y="493.5" width="3.400" height="3" rx="1"/><rect x="939.2" y="491.0" width="3.400" height="3" rx="1"/><rect x="946.3" y="487.0" width="3.400" height="3" rx="1"/><rect x="953.3" y="483.5" width="3.400" height="3" rx="1"/><rect x="960.4" y="477.1" width="3.400" height="3" rx="1"/><rect x="967.5" y="470.5" width="3.400" height="3" rx="1"/><rect x="974.5" y="463.5" width="3.400" height="3" rx="1"/><rect x="981.6" y="455.5" width="3.400" height="3" rx="1"/><rect x="988.7" y="446.5" width="3.400" height="3" rx="1"/><rect x="995.8" y="437.2" width="3.400" height="3" rx="1"/><rect x="1002.8" y="428.5" width="3.400" height="3" rx="1"/><rect x="1009.9" y="419.5" width="3.400" height="3" rx="1"/><rect x="1017.0" y="389.0" width="3.400" height="3" rx="1"/><rect x="1024.0" y="389.9" width="3.400" height="3" rx="1"/><rect x="1031.1" y="391.2" width="3.400" height="3" rx="1"/><rect x="1038.2" y="393.1" width="3.400" height="3" rx="1"/><rect x="1045.2" y="394.0" width="3.400" height="3" rx="1"/><rect x="1052.3" y="395.9" width="3.400" height="3" rx="1"/><rect x="1059.4" y="400.1" width="3.400" height="3" rx="1"/><rect x="1066.5" y="405.5" width="3.400" height="3" rx="1"/><rect x="1073.5" y="459.1" width="3.400" height="3" rx="1"/><rect x="1080.6" y="457.2" width="3.400" height="3" rx="1"/><rect x="1087.7" y="456.3" width="3.400" height="3" rx="1"/><rect x="1094.7" y="455.3" width="3.400" height="3" rx="1"/><rect x="1101.8" y="394.4" width="3.400" height="3" rx="1"/><rect x="1108.9" y="395.5" width="3.400" height="3" rx="1"/><rect x="1116.0" y="399.5" width="3.400" height="3" rx="1"/><rect x="1123.0" y="404.8" width="3.400" height="3" rx="1"/><rect x="1130.1" y="409.2" width="3.400" height="3" rx="1"/><rect x="1137.2" y="488.5" width="3.400" height="3" rx="1"/><rect x="1144.2" y="486.5" width="3.400" height="3" rx="1"/><rect x="1151.3" y="481.0" width="3.400" height="3" rx="1"/><rect x="1158.4" y="471.5" width="3.400" height="3" rx="1"/><rect x="1165.4" y="452.0" width="3.400" height="3" rx="1"/><rect x="1172.5" y="426.5" width="3.400" height="3" rx="1"/><rect x="1179.6" y="394.9" width="3.400" height="3" rx="1"/><rect x="1186.6" y="368.5" width="3.400" height="3" rx="1"/><rect x="1193.7" y="343.5" width="3.400" height="3" rx="1"/><rect x="1200.8" y="320.5" width="3.400" height="3" rx="1"/><rect x="1207.9" y="298.0" width="3.400" height="3" rx="1"/><rect x="1214.9" y="280.9" width="3.400" height="3" rx="1"/><rect x="1222.0" y="265.8" width="3.400" height="3" rx="1"/><rect x="1229.1" y="251.9" width="3.400" height="3" rx="1"/><rect x="1236.1" y="240.9" width="3.400" height="3" rx="1"/><rect x="1243.2" y="230.2" width="3.400" height="3" rx="1"/><rect x="1250.3" y="228.3" width="3.400" height="3" rx="1"/><rect x="1250.3" y="154.5" width="3.400" height="3" rx="1"/><rect x="1257.4" y="154.9" width="3.400" height="3" rx="1"/><rect x="1264.4" y="155.8" width="3.400" height="3" rx="1"/><rect x="1271.5" y="158.2" width="3.400" height="3" rx="1"/><rect x="1278.6" y="162.9" width="3.400" height="3" rx="1"/><rect x="1285.6" y="170.3" width="3.400" height="3" rx="1"/><rect x="1292.7" y="179.0" width="3.400" height="3" rx="1"/><rect x="1299.8" y="188.0" width="3.400" height="3" rx="1"/><rect x="1306.8" y="198.9" width="3.400" height="3" rx="1"/><rect x="1313.9" y="208.2" width="3.400" height="3" rx="1"/><rect x="1321.0" y="262.3" width="3.400" height="3" rx="1"/><rect x="1328.0" y="261.8" width="3.400" height="3" rx="1"/><rect x="1335.1" y="261.4" width="3.400" height="3" rx="1"/><rect x="1342.2" y="260.8" width="3.400" height="3" rx="1"/><rect x="1349.3" y="214.0" width="3.400" height="3" rx="1"/><rect x="1356.3" y="214.7" width="3.400" height="3" rx="1"/><rect x="1363.4" y="216.5" width="3.400" height="3" rx="1"/><rect x="1370.5" y="219.0" width="3.400" height="3" rx="1"/><rect x="1377.5" y="261.4" width="3.400" height="3" rx="1"/><rect x="1384.6" y="260.8" width="3.400" height="3" rx="1"/><rect x="1391.7" y="258.5" width="3.400" height="3" rx="1"/><rect x="1398.8" y="210.1" width="3.400" height="3" rx="1"/><rect x="1405.8" y="210.5" width="3.400" height="3" rx="1"/><rect x="1412.9" y="212.1" width="3.400" height="3" rx="1"/><rect x="1420.0" y="213.1" width="3.400" height="3" rx="1"/><rect x="1427.0" y="214.0" width="3.400" height="3" rx="1"/><rect x="1434.1" y="214.7" width="3.400" height="3" rx="1"/><rect x="1441.2" y="215.3" width="3.400" height="3" rx="1"/><rect x="1448.2" y="216.2" width="3.400" height="3" rx="1"/><rect x="1455.3" y="217.1" width="3.400" height="3" rx="1"/><rect x="1462.4" y="271.0" width="3.400" height="3" rx="1"/><rect x="1469.5" y="271.0" width="3.400" height="3" rx="1"/><rect x="1476.5" y="269.7" width="3.400" height="3" rx="1"/><rect x="1483.6" y="265.8" width="3.400" height="3" rx="1"/><rect x="1490.7" y="260.5" width="3.400" height="3" rx="1"/><rect x="1497.7" y="252.1" width="3.400" height="3" rx="1"/><rect x="1504.8" y="245.0" width="3.400" height="3" rx="1"/><rect x="1511.9" y="237.5" width="3.400" height="3" rx="1"/><rect x="1518.9" y="231.1" width="3.400" height="3" rx="1"/><rect x="1526.0" y="224.5" width="3.400" height="3" rx="1"/><rect x="1533.1" y="219.4" width="3.400" height="3" rx="1"/><rect x="1540.2" y="215.0" width="3.400" height="3" rx="1"/><rect x="1547.2" y="211.5" width="3.400" height="3" rx="1"/><rect x="1554.3" y="155.8" width="3.400" height="3" rx="1"/><rect x="1561.4" y="156.7" width="3.400" height="3" rx="1"/><rect x="1568.4" y="157.3" width="3.400" height="3" rx="1"/><rect x="1575.5" y="158.2" width="3.400" height="3" rx="1"/></g><rect x="443.5" y="292.0" width="5" height="9.4" fill="#ffd91e"/><rect x="450.6" y="296.7" width="5" height="10.3" fill="#ffd91e"/><rect x="457.6" y="301.4" width="5" height="12.1" fill="#ffd91e"/><rect x="464.7" y="308.0" width="5" height="15.0" fill="#ffd91e"/><rect x="471.8" y="315.0" width="5" height="15.0" fill="#ffd91e"/><rect x="478.9" y="322.0" width="5" height="14.0" fill="#ffd91e"/><rect x="485.9" y="328.7" width="5" height="14.3" fill="#ffd91e"/><rect x="493.0" y="335.4" width="5" height="11.6" fill="#ffd91e"/><rect x="500.1" y="341.0" width="5" height="9.6" fill="#ffd91e"/><rect x="507.1" y="345.0" width="5" height="8.4" fill="#ffd91e"/><rect x="514.2" y="349.0" width="5" height="6.0" fill="#ffd91e"/><rect x="521.3" y="352.5" width="5" height="5.2" fill="#ffd91e"/><rect x="528.3" y="354.7" width="5" height="4.3" fill="#ffd91e"/><rect x="535.4" y="356.6" width="5" height="3.4" fill="#ffd91e"/><rect x="542.5" y="358.0" width="5" height="3.0" fill="#ffd91e"/><rect x="549.5" y="359.0" width="5" height="2.8" fill="#ffd91e"/><rect x="556.6" y="360.0" width="5" height="3.6" fill="#ffd91e"/><rect x="563.7" y="362.0" width="5" height="4.4" fill="#ffd91e"/><rect x="570.8" y="364.0" width="5" height="5.0" fill="#ffd91e"/><rect x="577.8" y="366.0" width="5" height="6.0" fill="#ffd91e"/><rect x="584.9" y="368.0" width="5" height="7.0" fill="#ffd91e"/><rect x="592.0" y="371.0" width="5" height="6.6" fill="#ffd91e"/><rect x="599.0" y="374.0" width="5" height="6.0" fill="#ffd91e"/><rect x="606.1" y="376.6" width="5" height="4.4" fill="#ffd91e"/><rect x="613.2" y="378.5" width="5" height="4.5" fill="#ffd91e"/><rect x="620.2" y="380.0" width="5" height="4.0" fill="#ffd91e"/><rect x="627.3" y="381.0" width="5" height="4.0" fill="#ffd91e"/><rect x="634.4" y="383.0" width="5" height="3.0" fill="#ffd91e"/><rect x="641.5" y="384.0" width="5" height="2.2" fill="#ffd91e"/><rect x="648.5" y="385.0" width="5" height="2.0" fill="#ffd91e"/><rect x="655.6" y="385.0" width="5" height="1.3" fill="#f6f0c0"/><rect x="662.7" y="384.0" width="5" height="2.0" fill="#f62cf0"/><rect x="669.7" y="381.0" width="5" height="4.0" fill="#f62cf0"/><rect x="676.8" y="378.5" width="5" height="4.5" fill="#f62cf0"/><rect x="683.9" y="375.7" width="5" height="4.3" fill="#f62cf0"/><rect x="691.0" y="374.0" width="5" height="3.6" fill="#f62cf0"/><rect x="698.0" y="372.0" width="5" height="3.7" fill="#f62cf0"/><rect x="705.1" y="370.0" width="5" height="4.0" fill="#f62cf0"/><rect x="712.2" y="369.0" width="5" height="3.6" fill="#f62cf0"/><rect x="719.2" y="368.0" width="5" height="3.5" fill="#f62cf0"/><rect x="726.3" y="366.4" width="5" height="3.6" fill="#f62cf0"/><rect x="733.4" y="364.3" width="5" height="4.7" fill="#f62cf0"/><rect x="740.4" y="363.4" width="5" height="3.6" fill="#f62cf0"/><rect x="747.5" y="362.0" width="5" height="4.0" fill="#f62cf0"/><rect x="754.6" y="359.0" width="5" height="5.0" fill="#f62cf0"/><rect x="761.7" y="356.5" width="5" height="6.5" fill="#f62cf0"/><rect x="768.7" y="354.0" width="5" height="5.7" fill="#f62cf0"/><rect x="775.8" y="351.0" width="5" height="6.0" fill="#f62cf0"/><rect x="782.9" y="347.6" width="5" height="6.4" fill="#f62cf0"/><rect x="789.9" y="345.4" width="5" height="5.6" fill="#f62cf0"/><rect x="797.0" y="344.0" width="5" height="3.6" fill="#f62cf0"/><rect x="804.1" y="343.0" width="5" height="3.0" fill="#f62cf0"/><rect x="811.1" y="344.0" width="5" height="1.8" fill="#ffd91e"/><rect x="818.2" y="344.0" width="5" height="4.0" fill="#ffd91e"/><rect x="825.3" y="344.8" width="5" height="5.1" fill="#ffd91e"/><rect x="832.4" y="347.0" width="5" height="8.0" fill="#ffd91e"/><rect x="839.4" y="351.0" width="5" height="13.0" fill="#ffd91e"/><rect x="846.5" y="357.0" width="5" height="13.0" fill="#ffd91e"/><rect x="853.6" y="362.5" width="5" height="12.1" fill="#ffd91e"/><rect x="860.6" y="368.0" width="5" height="13.0" fill="#ffd91e"/><rect x="867.7" y="374.6" width="5" height="13.9" fill="#ffd91e"/><rect x="874.8" y="381.0" width="5" height="16.0" fill="#ffd91e"/><rect x="881.8" y="388.0" width="5" height="16.0" fill="#ffd91e"/><rect x="888.9" y="396.0" width="5" height="15.7" fill="#ffd91e"/><rect x="896.0" y="404.0" width="5" height="14.0" fill="#ffd91e"/><rect x="903.0" y="410.0" width="5" height="13.0" fill="#ffd91e"/><rect x="910.1" y="416.0" width="5" height="11.5" fill="#ffd91e"/><rect x="917.2" y="421.0" width="5" height="10.0" fill="#ffd91e"/><rect x="924.3" y="425.0" width="5" height="9.0" fill="#ffd91e"/><rect x="931.3" y="428.5" width="5" height="8.3" fill="#ffd91e"/><rect x="938.4" y="431.6" width="5" height="5.4" fill="#ffd91e"/><rect x="945.5" y="434.0" width="5" height="4.7" fill="#ffd91e"/><rect x="952.5" y="436.0" width="5" height="2.7" fill="#ffd91e"/><rect x="959.6" y="437.0" width="5" height="1.7" fill="#f6f0c0"/><rect x="966.7" y="436.5" width="5" height="1.3" fill="#f62cf0"/><rect x="973.8" y="436.0" width="5" height="1.8" fill="#f62cf0"/><rect x="980.8" y="435.0" width="5" height="2.8" fill="#f62cf0"/><rect x="987.9" y="433.0" width="5" height="4.0" fill="#f62cf0"/><rect x="995.0" y="431.0" width="5" height="4.0" fill="#f62cf0"/><rect x="1002.0" y="428.0" width="5" height="5.0" fill="#f62cf0"/><rect x="1009.1" y="424.0" width="5" height="7.0" fill="#f62cf0"/><rect x="1016.2" y="423.8" width="5" height="5.2" fill="#f62cf0"/><rect x="1023.2" y="422.5" width="5" height="4.5" fill="#f62cf0"/><rect x="1030.3" y="421.5" width="5" height="3.5" fill="#f62cf0"/><rect x="1037.4" y="421.0" width="5" height="2.8" fill="#f62cf0"/><rect x="1044.5" y="420.6" width="5" height="2.8" fill="#f62cf0"/><rect x="1051.5" y="421.5" width="5" height="1.2" fill="#f6f0c0"/><rect x="1058.6" y="421.0" width="5" height="2.8" fill="#ffd91e"/><rect x="1065.7" y="422.0" width="5" height="1.2" fill="#f6f0c0"/><rect x="1072.7" y="422.0" width="5" height="1.2" fill="#f62cf0"/><rect x="1079.8" y="421.0" width="5" height="1.5" fill="#f62cf0"/><rect x="1086.9" y="420.4" width="5" height="1.5" fill="#f62cf0"/><rect x="1093.9" y="420.6" width="5" height="1.2" fill="#f6f0c0"/><rect x="1101.0" y="420.8" width="5" height="2.6" fill="#ffd91e"/><rect x="1108.1" y="421.5" width="5" height="6.5" fill="#ffd91e"/><rect x="1115.2" y="424.0" width="5" height="8.0" fill="#ffd91e"/><rect x="1122.2" y="428.0" width="5" height="7.0" fill="#ffd91e"/><rect x="1129.3" y="431.7" width="5" height="5.3" fill="#ffd91e"/><rect x="1136.4" y="432.5" width="5" height="1.5" fill="#f6f0c0"/><rect x="1143.4" y="427.5" width="5" height="6.5" fill="#f62cf0"/><rect x="1150.5" y="420.0" width="5" height="11.0" fill="#f62cf0"/><rect x="1157.6" y="407.0" width="5" height="18.0" fill="#f62cf0"/><rect x="1164.6" y="389.6" width="5" height="27.3" fill="#f62cf0"/><rect x="1171.7" y="371.0" width="5" height="32.0" fill="#f62cf0"/><rect x="1178.8" y="353.7" width="5" height="33.3" fill="#f62cf0"/><rect x="1185.8" y="339.7" width="5" height="31.3" fill="#f62cf0"/><rect x="1192.9" y="327.0" width="5" height="28.5" fill="#f62cf0"/><rect x="1200.0" y="315.7" width="5" height="25.9" fill="#f62cf0"/><rect x="1207.1" y="307.0" width="5" height="22.0" fill="#f62cf0"/><rect x="1214.1" y="298.6" width="5" height="19.4" fill="#f62cf0"/><rect x="1221.2" y="291.0" width="5" height="17.8" fill="#f62cf0"/><rect x="1228.3" y="283.7" width="5" height="15.8" fill="#f62cf0"/><rect x="1235.3" y="277.0" width="5" height="16.0" fill="#f62cf0"/><rect x="1242.4" y="272.0" width="5" height="13.0" fill="#f62cf0"/><rect x="1249.5" y="266.6" width="5" height="11.9" fill="#f62cf0"/><rect x="1256.6" y="261.8" width="5" height="10.7" fill="#f62cf0"/><rect x="1263.6" y="258.0" width="5" height="9.0" fill="#f62cf0"/><rect x="1270.7" y="255.0" width="5" height="8.6" fill="#f62cf0"/><rect x="1277.8" y="253.6" width="5" height="5.9" fill="#f62cf0"/><rect x="1284.8" y="252.5" width="5" height="4.2" fill="#f62cf0"/><rect x="1291.9" y="252.0" width="5" height="3.0" fill="#f62cf0"/><rect x="1299.0" y="251.0" width="5" height="3.0" fill="#f62cf0"/><rect x="1306.0" y="249.9" width="5" height="3.7" fill="#f62cf0"/><rect x="1313.1" y="247.5" width="5" height="4.2" fill="#f62cf0"/><rect x="1320.2" y="246.0" width="5" height="4.0" fill="#f62cf0"/><rect x="1327.2" y="244.7" width="5" height="3.7" fill="#f62cf0"/><rect x="1334.3" y="243.7" width="5" height="3.8" fill="#f62cf0"/><rect x="1341.4" y="243.0" width="5" height="2.6" fill="#f62cf0"/><rect x="1348.5" y="244.3" width="5" height="1.5" fill="#ffd91e"/><rect x="1355.5" y="244.5" width="5" height="1.8" fill="#ffd91e"/><rect x="1362.6" y="244.7" width="5" height="2.8" fill="#d8e820"/><rect x="1369.7" y="245.0" width="5" height="2.2" fill="#ffd91e"/><rect x="1376.7" y="244.2" width="5" height="1.8" fill="#f62cf0"/><rect x="1383.8" y="241.9" width="5" height="4.1" fill="#f62cf0"/><rect x="1390.9" y="241.0" width="5" height="3.7" fill="#f62cf0"/><rect x="1398.0" y="242.6" width="5" height="1.4" fill="#f62cf0"/><rect x="1405.0" y="242.4" width="5" height="1.6" fill="#f6f0c0"/><rect x="1412.1" y="242.2" width="5" height="1.3" fill="#f6f0c0"/><rect x="1419.2" y="240.6" width="5" height="3.1" fill="#f62cf0"/><rect x="1426.2" y="240.0" width="5" height="3.0" fill="#f62cf0"/><rect x="1433.3" y="240.0" width="5" height="2.8" fill="#f62cf0"/><rect x="1440.4" y="240.0" width="5" height="2.8" fill="#f62cf0"/><rect x="1447.4" y="240.0" width="5" height="1.9" fill="#f62cf0"/><rect x="1454.5" y="240.0" width="5" height="1.9" fill="#ffd91e"/><rect x="1461.6" y="239.5" width="5" height="2.9" fill="#f62cf0"/><rect x="1468.7" y="236.9" width="5" height="4.1" fill="#f62cf0"/><rect x="1475.7" y="234.4" width="5" height="4.3" fill="#f62cf0"/><rect x="1482.8" y="231.7" width="5" height="5.2" fill="#f62cf0"/><rect x="1489.9" y="228.3" width="5" height="7.1" fill="#f62cf0"/><rect x="1496.9" y="226.0" width="5" height="5.3" fill="#f62cf0"/><rect x="1504.0" y="222.4" width="5" height="7.0" fill="#f62cf0"/><rect x="1511.1" y="218.3" width="5" height="7.4" fill="#f62cf0"/><rect x="1518.1" y="215.3" width="5" height="6.7" fill="#f62cf0"/><rect x="1525.2" y="213.0" width="5" height="5.3" fill="#f62cf0"/><rect x="1532.3" y="211.6" width="5" height="5.2" fill="#f62cf0"/><rect x="1539.4" y="210.3" width="5" height="5.0" fill="#f62cf0"/><rect x="1546.4" y="209.3" width="5" height="3.7" fill="#f62cf0"/><rect x="1553.5" y="208.4" width="5" height="2.8" fill="#f62cf0"/><rect x="1560.6" y="207.9" width="5" height="2.4" fill="#f62cf0"/><rect x="1567.6" y="206.6" width="5" height="2.7" fill="#f62cf0"/><rect x="1574.7" y="205.3" width="5" height="2.6" fill="#f62cf0"/><path d="M446.0 330.0V366.0" stroke="#3a9af0" stroke-width="1.100"/><rect x="443.5" y="330.0" width="5" height="33.6" fill="#3a9af0"/><path d="M453.1 344.0V373.0" stroke="#3a9af0" stroke-width="1.100"/><rect x="450.6" y="353.0" width="5" height="11.0" fill="#3a9af0"/><path d="M460.1 352.0V408.0" stroke="#3a9af0" stroke-width="1.100"/><rect x="457.6" y="353.4" width="5" height="50.2" fill="#3a9af0"/><path d="M467.2 395.0V416.0" stroke="#3a9af0" stroke-width="1.100"/><rect x="464.7" y="402.0" width="5" height="4.0" fill="#3a9af0"/><path d="M474.3 376.0V408.0" stroke="#3a9af0" stroke-width="1.100"/><rect x="471.8" y="394.0" width="5" height="12.0" fill="#3a9af0"/><path d="M481.4 362.0V399.0" stroke="#3a9af0" stroke-width="1.100"/><rect x="478.9" y="393.0" width="5" height="6.0" fill="#3a9af0"/><path d="M488.4 380.0V445.0" stroke="#3a9af0" stroke-width="1.100"/><rect x="485.9" y="398.6" width="5" height="27.4" fill="#3a9af0"/><path d="M495.5 346.0V439.0" stroke="#0818cc" stroke-width="1.100"/><rect x="493.0" y="348.0" width="5" height="78.0" fill="#0818cc"/><path d="M502.6 349.0V432.0" stroke="#0818cc" stroke-width="1.100"/><rect x="500.1" y="350.6" width="5" height="40.9" fill="#0818cc"/><path d="M509.6 351.0V417.5" stroke="#0818cc" stroke-width="1.100"/><rect x="507.1" y="353.0" width="5" height="40.0" fill="#0818cc"/><path d="M516.7 345.0V410.0" stroke="#0818cc" stroke-width="1.100"/><rect x="514.2" y="355.0" width="5" height="53.0" fill="#0818cc"/><path d="M523.8 356.0V409.0" stroke="#0818cc" stroke-width="1.100"/><rect x="521.3" y="358.0" width="5" height="50.0" fill="#0818cc"/><path d="M530.8 357.0V384.0" stroke="#0818cc" stroke-width="1.100"/><rect x="528.3" y="359.0" width="5" height="17.0" fill="#0818cc"/><path d="M537.9 362.0V381.0" stroke="#0818cc" stroke-width="1.100"/><rect x="535.4" y="363.6" width="5" height="12.4" fill="#0818cc"/><path d="M545.0 362.0V378.5" stroke="#0818cc" stroke-width="1.100"/><rect x="542.5" y="364.0" width="5" height="2.0" fill="#0818cc"/><path d="M552.0 362.0V388.0" stroke="#3a9af0" stroke-width="1.100"/><rect x="549.5" y="366.0" width="5" height="4.0" fill="#3a9af0"/><path d="M559.1 367.0V393.0" stroke="#3a9af0" stroke-width="1.100"/><rect x="556.6" y="369.0" width="5" height="22.0" fill="#3a9af0"/><path d="M566.2 388.0V400.0" stroke="#3a9af0" stroke-width="1.100"/><rect x="563.7" y="390.6" width="5" height="4.4" fill="#3a9af0"/><path d="M573.3 388.0V398.0" stroke="#3a9af0" stroke-width="1.100"/><rect x="570.8" y="393.0" width="5" height="2.0" fill="#3a9af0"/><path d="M580.3 391.5V406.0" stroke="#3a9af0" stroke-width="1.100"/><rect x="577.8" y="394.0" width="5" height="4.6" fill="#3a9af0"/><path d="M587.4 396.0V408.0" stroke="#3a9af0" stroke-width="1.100"/><rect x="584.9" y="398.0" width="5" height="4.7" fill="#3a9af0"/><path d="M594.5 400.0V407.0" stroke="#3a9af0" stroke-width="1.100"/><rect x="592.0" y="401.7" width="5" height="1.9" fill="#3a9af0"/><path d="M601.5 395.0V405.5" stroke="#3a9af0" stroke-width="1.100"/><rect x="599.0" y="398.0" width="5" height="5.6" fill="#3a9af0"/><path d="M608.6 391.0V397.0" stroke="#0818cc" stroke-width="1.100"/><rect x="606.1" y="392.5" width="5" height="3.5" fill="#0818cc"/><path d="M615.7 390.0V395.0" stroke="#0818cc" stroke-width="1.100"/><rect x="613.2" y="391.0" width="5" height="3.0" fill="#0818cc"/><path d="M622.8 392.0V399.0" stroke="#0818cc" stroke-width="1.100"/><rect x="620.2" y="393.8" width="5" height="2.2" fill="#0818cc"/><path d="M629.8 385.0V398.0" stroke="#0818cc" stroke-width="1.100"/><rect x="627.3" y="386.0" width="5" height="11.0" fill="#0818cc"/><path d="M636.9 385.0V402.7" stroke="#0818cc" stroke-width="1.100"/><rect x="634.4" y="386.0" width="5" height="3.7" fill="#0818cc"/><path d="M644.0 388.0V399.0" stroke="#0818cc" stroke-width="1.100"/><rect x="641.5" y="388.7" width="5" height="9.3" fill="#0818cc"/><path d="M651.0 388.0V399.0" stroke="#0818cc" stroke-width="1.100"/><rect x="648.5" y="388.7" width="5" height="9.3" fill="#0818cc"/><path d="M658.1 369.0V391.5" stroke="#0818cc" stroke-width="1.100"/><rect x="655.6" y="372.0" width="5" height="17.7" fill="#0818cc"/><path d="M665.2 361.0V378.5" stroke="#0818cc" stroke-width="1.100"/><rect x="662.7" y="362.7" width="5" height="10.3" fill="#0818cc"/><path d="M672.2 338.5V363.6" stroke="#f87c5c" stroke-width="1.100"/><rect x="669.7" y="348.8" width="5" height="13.9" fill="#f87c5c"/><path d="M679.3 343.0V357.0" stroke="#f87c5c" stroke-width="1.100"/><rect x="676.8" y="345.0" width="5" height="4.7" fill="#f87c5c"/><path d="M686.4 341.0V349.0" stroke="#f87c5c" stroke-width="1.100"/><rect x="683.9" y="345.0" width="5" height="1.2" fill="#f87c5c"/><path d="M693.5 343.0V361.8" stroke="#f87c5c" stroke-width="1.100"/><rect x="691.0" y="344.0" width="5" height="15.0" fill="#f87c5c"/><path d="M700.5 356.0V369.0" stroke="#3a9af0" stroke-width="1.100"/><rect x="698.0" y="358.0" width="5" height="5.6" fill="#3a9af0"/><path d="M707.6 355.0V365.5" stroke="#96120e" stroke-width="1.100"/><rect x="705.1" y="357.0" width="5" height="7.6" fill="#96120e"/><path d="M714.7 344.0V362.7" stroke="#96120e" stroke-width="1.100"/><rect x="712.2" y="353.4" width="5" height="3.6" fill="#96120e"/><path d="M721.7 351.5V367.0" stroke="#96120e" stroke-width="1.100"/><rect x="719.2" y="354.0" width="5" height="3.0" fill="#96120e"/><path d="M728.8 344.0V363.6" stroke="#f87c5c" stroke-width="1.100"/><rect x="726.3" y="346.0" width="5" height="12.0" fill="#f87c5c"/><path d="M735.9 331.0V377.0" stroke="#f87c5c" stroke-width="1.100"/><rect x="733.4" y="346.7" width="5" height="1.8" fill="#f87c5c"/><path d="M742.9 338.7V360.6" stroke="#f87c5c" stroke-width="1.100"/><rect x="740.4" y="348.0" width="5" height="2.0" fill="#f87c5c"/><path d="M750.0 340.0V360.6" stroke="#f87c5c" stroke-width="1.100"/><rect x="747.5" y="342.4" width="5" height="7.6" fill="#f87c5c"/><path d="M757.1 322.0V351.0" stroke="#f87c5c" stroke-width="1.100"/><rect x="754.6" y="323.8" width="5" height="20.2" fill="#f87c5c"/><path d="M764.2 322.0V335.5" stroke="#f87c5c" stroke-width="1.100"/><rect x="761.7" y="323.8" width="5" height="8.6" fill="#f87c5c"/><path d="M771.2 326.0V342.0" stroke="#f87c5c" stroke-width="1.100"/><rect x="768.7" y="328.0" width="5" height="4.4" fill="#f87c5c"/><path d="M778.3 307.7V332.8" stroke="#f87c5c" stroke-width="1.100"/><rect x="775.8" y="311.4" width="5" height="17.6" fill="#f87c5c"/><path d="M785.4 305.0V316.0" stroke="#f87c5c" stroke-width="1.100"/><rect x="782.9" y="306.4" width="5" height="6.6" fill="#f87c5c"/><path d="M792.4 305.0V339.5" stroke="#96120e" stroke-width="1.100"/><rect x="789.9" y="306.4" width="5" height="32.3" fill="#96120e"/><path d="M799.5 319.0V339.5" stroke="#96120e" stroke-width="1.100"/><rect x="797.0" y="321.6" width="5" height="16.7" fill="#96120e"/><path d="M806.6 320.0V359.7" stroke="#96120e" stroke-width="1.100"/><rect x="804.1" y="321.6" width="5" height="27.9" fill="#96120e"/><path d="M813.6 351.0V376.0" stroke="#96120e" stroke-width="1.100"/><rect x="811.1" y="354.0" width="5" height="9.4" fill="#96120e"/><path d="M820.7 347.6V383.0" stroke="#3a9af0" stroke-width="1.100"/><rect x="818.2" y="362.5" width="5" height="14.9" fill="#3a9af0"/><path d="M827.8 349.5V383.0" stroke="#96120e" stroke-width="1.100"/><rect x="825.3" y="374.6" width="5" height="2.4" fill="#96120e"/><path d="M834.9 368.0V462.0" stroke="#3a9af0" stroke-width="1.100"/><rect x="832.4" y="374.0" width="5" height="61.0" fill="#3a9af0"/><path d="M841.9 432.0V466.6" stroke="#3a9af0" stroke-width="1.100"/><rect x="839.4" y="434.0" width="5" height="10.0" fill="#3a9af0"/><path d="M849.0 397.0V444.0" stroke="#3a9af0" stroke-width="1.100"/><rect x="846.5" y="416.8" width="5" height="26.2" fill="#3a9af0"/><path d="M856.1 403.0V432.0" stroke="#3a9af0" stroke-width="1.100"/><rect x="853.6" y="416.8" width="5" height="7.0" fill="#3a9af0"/><path d="M863.1 420.0V456.5" stroke="#3a9af0" stroke-width="1.100"/><rect x="860.6" y="422.0" width="5" height="32.5" fill="#3a9af0"/><path d="M870.2 442.0V473.0" stroke="#3a9af0" stroke-width="1.100"/><rect x="867.7" y="453.6" width="5" height="18.2" fill="#3a9af0"/><path d="M877.3 463.0V490.0" stroke="#3a9af0" stroke-width="1.100"/><rect x="874.8" y="470.0" width="5" height="16.0" fill="#3a9af0"/><path d="M884.3 464.7V497.0" stroke="#3a9af0" stroke-width="1.100"/><rect x="881.8" y="484.0" width="5" height="2.6" fill="#3a9af0"/><path d="M891.4 470.0V489.0" stroke="#3a9af0" stroke-width="1.100"/><rect x="888.9" y="471.8" width="5" height="15.2" fill="#3a9af0"/><path d="M898.5 460.0V473.0" stroke="#3a9af0" stroke-width="1.100"/><rect x="896.0" y="465.6" width="5" height="6.2" fill="#3a9af0"/><path d="M905.5 463.0V471.0" stroke="#0818cc" stroke-width="1.100"/><rect x="903.0" y="463.0" width="5" height="1.5" fill="#0818cc"/><path d="M912.6 463.5V479.6" stroke="#0818cc" stroke-width="1.100"/><rect x="910.1" y="463.5" width="5" height="1.5" fill="#0818cc"/><path d="M919.7 462.5V469.0" stroke="#0818cc" stroke-width="1.100"/><rect x="917.2" y="462.5" width="5" height="1.5" fill="#0818cc"/><path d="M926.8 455.0V463.0" stroke="#0818cc" stroke-width="1.100"/><rect x="924.3" y="456.0" width="5" height="6.0" fill="#0818cc"/><path d="M933.8 452.0V465.0" stroke="#0818cc" stroke-width="1.100"/><rect x="931.3" y="453.0" width="5" height="10.8" fill="#0818cc"/><path d="M940.9 448.0V455.0" stroke="#0818cc" stroke-width="1.100"/><rect x="938.4" y="449.0" width="5" height="4.6" fill="#0818cc"/><path d="M948.0 445.5V452.6" stroke="#0818cc" stroke-width="1.100"/><rect x="945.5" y="446.5" width="5" height="3.5" fill="#0818cc"/><path d="M955.0 438.5V448.0" stroke="#0818cc" stroke-width="1.100"/><rect x="952.5" y="439.6" width="5" height="7.4" fill="#0818cc"/><path d="M962.1 432.0V438.0" stroke="#0818cc" stroke-width="1.100"/><rect x="959.6" y="433.0" width="5" height="3.8" fill="#0818cc"/><path d="M969.2 426.5V437.0" stroke="#0818cc" stroke-width="1.100"/><rect x="966.7" y="427.5" width="5" height="6.5" fill="#0818cc"/><path d="M976.2 420.0V435.0" stroke="#0818cc" stroke-width="1.100"/><rect x="973.8" y="426.6" width="5" height="7.4" fill="#0818cc"/><path d="M983.3 411.0V435.0" stroke="#0818cc" stroke-width="1.100"/><rect x="980.8" y="418.0" width="5" height="16.0" fill="#0818cc"/><path d="M990.4 405.0V420.0" stroke="#0818cc" stroke-width="1.100"/><rect x="987.9" y="406.0" width="5" height="13.0" fill="#0818cc"/><path d="M997.5 401.5V412.7" stroke="#0818cc" stroke-width="1.100"/><rect x="995.0" y="406.0" width="5" height="5.7" fill="#0818cc"/><path d="M1004.5 391.0V412.0" stroke="#0818cc" stroke-width="1.100"/><rect x="1002.0" y="391.9" width="5" height="18.9" fill="#0818cc"/><path d="M1011.6 393.0V407.5" stroke="#0818cc" stroke-width="1.100"/><rect x="1009.1" y="394.0" width="5" height="12.7" fill="#0818cc"/><path d="M1018.7 402.0V419.0" stroke="#3a9af0" stroke-width="1.100"/><rect x="1016.2" y="405.6" width="5" height="12.3" fill="#3a9af0"/><path d="M1025.7 406.0V421.5" stroke="#3a9af0" stroke-width="1.100"/><rect x="1023.2" y="408.0" width="5" height="9.5" fill="#3a9af0"/><path d="M1032.8 401.0V415.0" stroke="#3a9af0" stroke-width="1.100"/><rect x="1030.3" y="406.7" width="5" height="1.8" fill="#3a9af0"/><path d="M1039.9 400.0V420.6" stroke="#3a9af0" stroke-width="1.100"/><rect x="1037.4" y="406.7" width="5" height="9.6" fill="#3a9af0"/><path d="M1047.0 413.0V440.0" stroke="#3a9af0" stroke-width="1.100"/><rect x="1044.5" y="416.0" width="5" height="9.0" fill="#3a9af0"/><path d="M1054.0 420.6V447.5" stroke="#3a9af0" stroke-width="1.100"/><rect x="1051.5" y="423.4" width="5" height="16.6" fill="#3a9af0"/><path d="M1061.1 418.7V462.4" stroke="#3a9af0" stroke-width="1.100"/><rect x="1058.6" y="421.5" width="5" height="18.5" fill="#3a9af0"/><path d="M1068.2 408.5V429.0" stroke="#0818cc" stroke-width="1.100"/><rect x="1065.7" y="416.0" width="5" height="5.5" fill="#0818cc"/><path d="M1075.2 395.5V417.8" stroke="#f87c5c" stroke-width="1.100"/><rect x="1072.7" y="408.5" width="5" height="8.4" fill="#f87c5c"/><path d="M1082.3 402.0V416.9" stroke="#0818cc" stroke-width="1.100"/><rect x="1079.8" y="410.5" width="5" height="1.5" fill="#0818cc"/><path d="M1089.4 402.0V436.0" stroke="#0818cc" stroke-width="1.100"/><rect x="1086.9" y="407.6" width="5" height="9.3" fill="#0818cc"/><path d="M1096.4 413.0V443.0" stroke="#3a9af0" stroke-width="1.100"/><rect x="1093.9" y="415.0" width="5" height="21.4" fill="#3a9af0"/><path d="M1103.5 431.0V458.7" stroke="#3a9af0" stroke-width="1.100"/><rect x="1101.0" y="435.0" width="5" height="22.8" fill="#3a9af0"/><path d="M1110.6 452.0V479.0" stroke="#3a9af0" stroke-width="1.100"/><rect x="1108.1" y="455.0" width="5" height="21.4" fill="#3a9af0"/><path d="M1117.7 467.0V494.0" stroke="#3a9af0" stroke-width="1.100"/><rect x="1115.2" y="471.7" width="5" height="5.3" fill="#3a9af0"/><path d="M1124.7 452.0V476.0" stroke="#3a9af0" stroke-width="1.100"/><rect x="1122.2" y="461.0" width="5" height="12.6" fill="#3a9af0"/><path d="M1131.8 438.0V468.0" stroke="#0818cc" stroke-width="1.100"/><rect x="1129.3" y="440.0" width="5" height="21.5" fill="#0818cc"/><path d="M1138.9 368.5V443.0" stroke="#f87c5c" stroke-width="1.100"/><rect x="1136.4" y="374.0" width="5" height="68.0" fill="#f87c5c"/><path d="M1145.9 338.8V391.0" stroke="#f87c5c" stroke-width="1.100"/><rect x="1143.4" y="352.4" width="5" height="21.6" fill="#f87c5c"/><path d="M1153.0 328.0V381.6" stroke="#f87c5c" stroke-width="1.100"/><rect x="1150.5" y="334.0" width="5" height="18.8" fill="#f87c5c"/><path d="M1160.1 231.7V336.0" stroke="#f87c5c" stroke-width="1.100"/><rect x="1157.6" y="239.0" width="5" height="96.0" fill="#f87c5c"/><path d="M1167.1 200.0V260.5" stroke="#f87c5c" stroke-width="1.100"/><rect x="1164.6" y="212.0" width="5" height="28.0" fill="#f87c5c"/><path d="M1174.2 155.8V219.6" stroke="#f87c5c" stroke-width="1.100"/><rect x="1171.7" y="181.5" width="5" height="31.5" fill="#f87c5c"/><path d="M1181.3 168.5V218.6" stroke="#f87c5c" stroke-width="1.100"/><rect x="1178.8" y="183.0" width="5" height="24.5" fill="#f87c5c"/><path d="M1188.3 188.0V218.6" stroke="#f87c5c" stroke-width="1.100"/><rect x="1185.8" y="204.7" width="5" height="2.8" fill="#f87c5c"/><path d="M1195.4 188.0V215.0" stroke="#f87c5c" stroke-width="1.100"/><rect x="1192.9" y="203.8" width="5" height="2.4" fill="#f87c5c"/><path d="M1202.5 204.0V226.0" stroke="#96120e" stroke-width="1.100"/><rect x="1200.0" y="205.6" width="5" height="18.6" fill="#96120e"/><path d="M1209.6 215.0V235.4" stroke="#96120e" stroke-width="1.100"/><rect x="1207.1" y="221.4" width="5" height="1.9" fill="#96120e"/><path d="M1216.6 214.0V229.8" stroke="#96120e" stroke-width="1.100"/><rect x="1214.1" y="215.9" width="5" height="7.4" fill="#96120e"/><path d="M1223.7 212.0V226.0" stroke="#96120e" stroke-width="1.100"/><rect x="1221.2" y="215.5" width="5" height="1.5" fill="#96120e"/><path d="M1230.8 202.0V218.6" stroke="#f87c5c" stroke-width="1.100"/><rect x="1228.3" y="215.0" width="5" height="2.7" fill="#f87c5c"/><path d="M1237.8 215.0V231.7" stroke="#96120e" stroke-width="1.100"/><rect x="1235.3" y="216.8" width="5" height="6.5" fill="#96120e"/><path d="M1244.9 208.4V226.0" stroke="#f87c5c" stroke-width="1.100"/><rect x="1242.4" y="212.0" width="5" height="11.3" fill="#f87c5c"/><path d="M1252.0 208.4V215.0" stroke="#f87c5c" stroke-width="1.100"/><rect x="1249.5" y="212.0" width="5" height="2.0" fill="#f87c5c"/><path d="M1259.1 216.0V223.5" stroke="#96120e" stroke-width="1.100"/><rect x="1256.6" y="217.7" width="5" height="4.7" fill="#96120e"/><path d="M1266.1 221.0V228.0" stroke="#96120e" stroke-width="1.100"/><rect x="1263.6" y="222.4" width="5" height="4.6" fill="#96120e"/><path d="M1273.2 225.0V238.0" stroke="#96120e" stroke-width="1.100"/><rect x="1270.7" y="226.0" width="5" height="8.4" fill="#96120e"/><path d="M1280.3 228.0V247.5" stroke="#96120e" stroke-width="1.100"/><rect x="1277.8" y="232.6" width="5" height="13.9" fill="#96120e"/><path d="M1287.3 240.0V247.5" stroke="#96120e" stroke-width="1.100"/><rect x="1284.8" y="241.0" width="5" height="5.5" fill="#96120e"/><path d="M1294.4 241.0V257.5" stroke="#96120e" stroke-width="1.100"/><rect x="1291.9" y="241.9" width="5" height="14.8" fill="#96120e"/><path d="M1301.5 223.0V256.0" stroke="#96120e" stroke-width="1.100"/><rect x="1299.0" y="224.2" width="5" height="30.7" fill="#96120e"/><path d="M1308.5 219.6V234.4" stroke="#f87c5c" stroke-width="1.100"/><rect x="1306.0" y="225.0" width="5" height="7.6" fill="#f87c5c"/><path d="M1315.6 225.0V242.8" stroke="#f87c5c" stroke-width="1.100"/><rect x="1313.1" y="226.0" width="5" height="5.7" fill="#f87c5c"/><path d="M1322.7 215.9V230.7" stroke="#f87c5c" stroke-width="1.100"/><rect x="1320.2" y="225.7" width="5" height="1.9" fill="#f87c5c"/><path d="M1329.8 221.5V234.4" stroke="#f87c5c" stroke-width="1.100"/><rect x="1327.2" y="227.0" width="5" height="6.5" fill="#f87c5c"/><path d="M1336.8 231.5V254.0" stroke="#96120e" stroke-width="1.100"/><rect x="1334.3" y="232.6" width="5" height="4.4" fill="#96120e"/><path d="M1343.9 235.0V261.0" stroke="#96120e" stroke-width="1.100"/><rect x="1341.4" y="237.0" width="5" height="19.7" fill="#96120e"/><path d="M1351.0 236.0V261.0" stroke="#96120e" stroke-width="1.100"/><rect x="1348.5" y="241.0" width="5" height="16.7" fill="#96120e"/><path d="M1358.0 240.0V261.5" stroke="#96120e" stroke-width="1.100"/><rect x="1355.5" y="241.0" width="5" height="19.5" fill="#96120e"/><path d="M1365.1 251.0V263.0" stroke="#96120e" stroke-width="1.100"/><rect x="1362.6" y="252.0" width="5" height="8.5" fill="#96120e"/><path d="M1372.2 229.8V262.3" stroke="#f87c5c" stroke-width="1.100"/><rect x="1369.7" y="233.5" width="5" height="19.5" fill="#f87c5c"/><path d="M1379.2 214.9V244.7" stroke="#f87c5c" stroke-width="1.100"/><rect x="1376.7" y="224.2" width="5" height="10.2" fill="#f87c5c"/><path d="M1386.3 211.0V242.8" stroke="#f87c5c" stroke-width="1.100"/><rect x="1383.8" y="224.2" width="5" height="17.7" fill="#f87c5c"/><path d="M1393.4 223.3V255.8" stroke="#f87c5c" stroke-width="1.100"/><rect x="1390.9" y="241.0" width="5" height="3.7" fill="#f87c5c"/><path d="M1400.5 241.0V261.4" stroke="#96120e" stroke-width="1.100"/><rect x="1398.0" y="243.0" width="5" height="1.2" fill="#96120e"/><path d="M1407.5 239.0V261.0" stroke="#96120e" stroke-width="1.100"/><rect x="1405.0" y="243.0" width="5" height="1.5" fill="#96120e"/><path d="M1414.6 229.0V247.5" stroke="#f87c5c" stroke-width="1.100"/><rect x="1412.1" y="233.0" width="5" height="13.5" fill="#f87c5c"/><path d="M1421.7 215.9V234.4" stroke="#f87c5c" stroke-width="1.100"/><rect x="1419.2" y="229.4" width="5" height="4.1" fill="#f87c5c"/><path d="M1428.7 224.0V241.0" stroke="#f87c5c" stroke-width="1.100"/><rect x="1426.2" y="229.4" width="5" height="2.3" fill="#f87c5c"/><path d="M1435.8 230.5V243.0" stroke="#96120e" stroke-width="1.100"/><rect x="1433.3" y="231.7" width="5" height="8.3" fill="#96120e"/><path d="M1442.9 226.0V248.0" stroke="#f87c5c" stroke-width="1.100"/><rect x="1440.4" y="236.9" width="5" height="8.7" fill="#f87c5c"/><path d="M1449.9 224.0V254.0" stroke="#96120e" stroke-width="1.100"/><rect x="1447.4" y="232.6" width="5" height="4.3" fill="#96120e"/><path d="M1457.0 232.0V272.5" stroke="#96120e" stroke-width="1.100"/><rect x="1454.5" y="233.5" width="5" height="13.0" fill="#96120e"/><path d="M1464.1 192.0V253.0" stroke="#f87c5c" stroke-width="1.100"/><rect x="1461.6" y="216.8" width="5" height="29.7" fill="#f87c5c"/><path d="M1471.2 201.0V229.8" stroke="#f87c5c" stroke-width="1.100"/><rect x="1468.7" y="215.9" width="5" height="1.3" fill="#f87c5c"/><path d="M1478.2 191.7V231.7" stroke="#f87c5c" stroke-width="1.100"/><rect x="1475.7" y="209.0" width="5" height="6.3" fill="#f87c5c"/><path d="M1485.3 179.6V247.5" stroke="#f87c5c" stroke-width="1.100"/><rect x="1482.8" y="191.0" width="5" height="18.7" fill="#f87c5c"/><path d="M1492.4 156.9V210.0" stroke="#f87c5c" stroke-width="1.100"/><rect x="1489.9" y="191.0" width="5" height="9.4" fill="#f87c5c"/><path d="M1499.4 198.0V226.0" stroke="#f87c5c" stroke-width="1.100"/><rect x="1496.9" y="200.0" width="5" height="3.8" fill="#f87c5c"/><path d="M1506.5 170.0V208.4" stroke="#f87c5c" stroke-width="1.100"/><rect x="1504.0" y="178.0" width="5" height="25.8" fill="#f87c5c"/><path d="M1513.6 169.0V184.0" stroke="#f87c5c" stroke-width="1.100"/><rect x="1511.1" y="170.7" width="5" height="8.3" fill="#f87c5c"/><path d="M1520.6 168.5V197.5" stroke="#f87c5c" stroke-width="1.100"/><rect x="1518.1" y="170.7" width="5" height="25.3" fill="#f87c5c"/><path d="M1527.7 190.8V207.5" stroke="#96120e" stroke-width="1.100"/><rect x="1525.2" y="197.0" width="5" height="6.8" fill="#96120e"/><path d="M1534.8 193.5V203.0" stroke="#96120e" stroke-width="1.100"/><rect x="1532.3" y="196.7" width="5" height="5.6" fill="#96120e"/><path d="M1541.9 195.0V201.5" stroke="#96120e" stroke-width="1.100"/><rect x="1539.4" y="196.0" width="5" height="4.4" fill="#96120e"/><path d="M1548.9 197.0V203.5" stroke="#96120e" stroke-width="1.100"/><rect x="1546.4" y="198.0" width="5" height="4.3" fill="#96120e"/><path d="M1556.0 198.0V209.5" stroke="#96120e" stroke-width="1.100"/><rect x="1553.5" y="199.0" width="5" height="9.4" fill="#96120e"/><path d="M1563.1 188.0V211.0" stroke="#f87c5c" stroke-width="1.100"/><rect x="1560.6" y="189.0" width="5" height="20.0" fill="#f87c5c"/><path d="M1570.1 185.0V196.0" stroke="#f87c5c" stroke-width="1.100"/><rect x="1567.6" y="189.0" width="5" height="2.7" fill="#f87c5c"/><path d="M1577.2 183.7V194.5" stroke="#f87c5c" stroke-width="1.100"/><rect x="1574.7" y="185.5" width="5" height="7.1" fill="#f87c5c"/><rect x="1348.5" y="244.3" width="5" height="1.5" fill="#ffd91e"/><rect x="1355.5" y="244.5" width="5" height="1.8" fill="#ffd91e"/><rect x="1362.6" y="244.7" width="5" height="2.8" fill="#d8e820"/><rect x="1369.7" y="245.0" width="5" height="2.2" fill="#ffd91e"/><rect x="1405.0" y="242.4" width="5" height="1.6" fill="#f6f0c0"/><rect x="1454.5" y="240.0" width="5" height="1.9" fill="#ffd91e"/></g><g fill="#e838e0" clip-path="url(#cs)"><rect x="444.4" y="556.0" width="3.200" height="15.8"/><rect x="451.5" y="556.0" width="3.200" height="16.6"/><rect x="458.5" y="556.0" width="3.200" height="20.0"/><rect x="465.6" y="556.0" width="3.200" height="22.5"/><rect x="472.7" y="556.0" width="3.200" height="23.3"/><rect x="479.8" y="556.0" width="3.200" height="24.1"/><rect x="486.8" y="556.0" width="3.200" height="26.1"/><rect x="493.9" y="556.0" width="3.200" height="22.5"/><rect x="501.0" y="556.0" width="3.200" height="22.5"/><rect x="508.0" y="556.0" width="3.200" height="20.0"/><rect x="515.1" y="556.0" width="3.200" height="20.0"/><rect x="522.2" y="556.0" width="3.200" height="17.4"/><rect x="529.2" y="556.0" width="3.200" height="16.6"/><rect x="536.3" y="556.0" width="3.200" height="15.0"/><rect x="543.4" y="556.0" width="3.200" height="13.8"/><rect x="550.4" y="556.0" width="3.200" height="11.6"/><rect x="557.5" y="556.0" width="3.200" height="13.3"/><rect x="564.6" y="556.0" width="3.200" height="13.3"/><rect x="571.7" y="556.0" width="3.200" height="13.3"/><rect x="578.7" y="556.0" width="3.200" height="13.3"/><rect x="585.8" y="556.0" width="3.200" height="13.3"/><rect x="592.9" y="556.0" width="3.200" height="12.8"/><rect x="599.9" y="556.0" width="3.200" height="12.4"/><rect x="607.0" y="556.0" width="3.200" height="12.4"/><rect x="614.1" y="556.0" width="3.200" height="11.6"/><rect x="621.1" y="556.0" width="3.200" height="10.8"/><rect x="628.2" y="556.0" width="3.200" height="10.0"/><rect x="635.3" y="556.0" width="3.200" height="9.4"/><rect x="642.4" y="556.0" width="3.200" height="9.0"/><rect x="649.4" y="556.0" width="3.200" height="8.3"/><rect x="656.5" y="556.0" width="3.200" height="5.8"/><rect x="663.6" y="556.0" width="3.200" height="4.0"/><rect x="670.6" y="556.0" width="3.200" height="2.0"/><rect x="677.7" y="556.0" width="3.200" height="0.8"/><rect x="684.8" y="554.7" width="3.200" height="1.3"/><rect x="691.9" y="553.4" width="3.200" height="2.6"/><rect x="698.9" y="552.6" width="3.200" height="3.4"/><rect x="706.0" y="552.3" width="3.200" height="3.7"/><rect x="713.1" y="552.0" width="3.200" height="4.0"/><rect x="720.1" y="551.8" width="3.200" height="4.2"/><rect x="727.2" y="551.5" width="3.200" height="4.5"/><rect x="734.3" y="551.2" width="3.200" height="4.8"/><rect x="741.3" y="550.9" width="3.200" height="5.1"/><rect x="748.4" y="550.6" width="3.200" height="5.4"/><rect x="755.5" y="548.8" width="3.200" height="7.2"/><rect x="762.6" y="548.5" width="3.200" height="7.5"/><rect x="769.6" y="547.3" width="3.200" height="8.7"/><rect x="776.7" y="546.6" width="3.200" height="9.4"/><rect x="783.8" y="545.1" width="3.200" height="10.9"/><rect x="790.8" y="546.0" width="3.200" height="10.0"/><rect x="797.9" y="546.6" width="3.200" height="9.4"/><rect x="805.0" y="548.4" width="3.200" height="7.6"/><rect x="812.0" y="550.3" width="3.200" height="5.7"/><rect x="819.1" y="553.4" width="3.200" height="2.6"/><rect x="826.2" y="555.2" width="3.200" height="0.8"/><rect x="833.2" y="556.0" width="3.200" height="3.7"/><rect x="840.3" y="556.0" width="3.200" height="7.8"/><rect x="847.4" y="556.0" width="3.200" height="9.8"/><rect x="854.5" y="556.0" width="3.200" height="12.0"/><rect x="861.5" y="556.0" width="3.200" height="13.8"/><rect x="868.6" y="556.0" width="3.200" height="17.4"/><rect x="875.7" y="556.0" width="3.200" height="20.2"/><rect x="882.7" y="556.0" width="3.200" height="22.9"/><rect x="889.8" y="556.0" width="3.200" height="23.8"/><rect x="896.9" y="556.0" width="3.200" height="22.4"/><rect x="903.9" y="556.0" width="3.200" height="22.4"/><rect x="911.0" y="556.0" width="3.200" height="21.6"/><rect x="918.1" y="556.0" width="3.200" height="20.2"/><rect x="925.2" y="556.0" width="3.200" height="20.2"/><rect x="932.2" y="556.0" width="3.200" height="19.3"/><rect x="939.3" y="556.0" width="3.200" height="16.9"/><rect x="946.4" y="556.0" width="3.200" height="15.0"/><rect x="953.4" y="556.0" width="3.200" height="13.2"/><rect x="960.5" y="556.0" width="3.200" height="11.0"/><rect x="967.6" y="556.0" width="3.200" height="9.6"/><rect x="974.6" y="556.0" width="3.200" height="8.3"/><rect x="981.7" y="556.0" width="3.200" height="7.0"/><rect x="988.8" y="556.0" width="3.200" height="3.7"/><rect x="995.9" y="556.0" width="3.200" height="3.4"/><rect x="1002.9" y="556.0" width="3.200" height="0.8"/><rect x="1010.0" y="555.8" width="3.200" height="0.8"/><rect x="1017.1" y="555.5" width="3.200" height="0.8"/><rect x="1024.1" y="553.9" width="3.200" height="2.1"/><rect x="1031.2" y="552.8" width="3.200" height="3.2"/><rect x="1038.3" y="553.4" width="3.200" height="2.6"/><rect x="1045.4" y="554.8" width="3.200" height="1.2"/><rect x="1052.4" y="554.9" width="3.200" height="1.1"/><rect x="1059.5" y="555.0" width="3.200" height="1.0"/><rect x="1066.6" y="556.0" width="3.200" height="0.8"/><rect x="1073.6" y="556.0" width="3.200" height="0.8"/><rect x="1080.7" y="556.0" width="3.200" height="0.8"/><rect x="1087.8" y="556.0" width="3.200" height="0.8"/><rect x="1094.8" y="556.0" width="3.200" height="0.8"/><rect x="1101.9" y="556.0" width="3.200" height="1.6"/><rect x="1109.0" y="556.0" width="3.200" height="4.0"/><rect x="1116.1" y="556.0" width="3.200" height="5.8"/><rect x="1123.1" y="556.0" width="3.200" height="7.0"/><rect x="1130.2" y="556.0" width="3.200" height="7.0"/><rect x="1137.3" y="556.0" width="3.200" height="2.0"/><rect x="1144.3" y="552.6" width="3.200" height="3.4"/><rect x="1151.4" y="548.0" width="3.200" height="8.0"/><rect x="1158.5" y="539.2" width="3.200" height="16.8"/><rect x="1165.5" y="530.9" width="3.200" height="25.1"/><rect x="1172.6" y="523.7" width="3.200" height="32.3"/><rect x="1179.7" y="519.2" width="3.200" height="36.8"/><rect x="1186.8" y="515.4" width="3.200" height="40.6"/><rect x="1193.8" y="513.0" width="3.200" height="43.0"/><rect x="1200.9" y="513.7" width="3.200" height="42.3"/><rect x="1208.0" y="514.2" width="3.200" height="41.8"/><rect x="1215.0" y="514.5" width="3.200" height="41.5"/><rect x="1222.1" y="515.4" width="3.200" height="40.6"/><rect x="1229.2" y="516.7" width="3.200" height="39.3"/><rect x="1236.2" y="518.4" width="3.200" height="37.6"/><rect x="1243.3" y="519.2" width="3.200" height="36.8"/><rect x="1250.4" y="520.9" width="3.200" height="35.1"/><rect x="1257.5" y="522.5" width="3.200" height="33.5"/><rect x="1264.5" y="524.7" width="3.200" height="31.3"/><rect x="1271.6" y="528.0" width="3.200" height="28.0"/><rect x="1278.7" y="530.0" width="3.200" height="26.0"/><rect x="1285.7" y="532.5" width="3.200" height="23.5"/><rect x="1292.8" y="535.9" width="3.200" height="20.1"/><rect x="1299.9" y="535.9" width="3.200" height="20.1"/><rect x="1306.9" y="537.0" width="3.200" height="19.0"/><rect x="1314.0" y="538.4" width="3.200" height="17.6"/><rect x="1321.1" y="539.2" width="3.200" height="16.8"/><rect x="1328.2" y="540.4" width="3.200" height="15.6"/><rect x="1335.2" y="541.4" width="3.200" height="14.6"/><rect x="1342.3" y="544.2" width="3.200" height="11.8"/><rect x="1349.4" y="544.7" width="3.200" height="11.3"/><rect x="1356.4" y="546.7" width="3.200" height="9.3"/><rect x="1363.5" y="548.4" width="3.200" height="7.6"/><rect x="1370.6" y="548.4" width="3.200" height="7.6"/><rect x="1377.6" y="547.9" width="3.200" height="8.1"/><rect x="1384.7" y="548.4" width="3.200" height="7.6"/><rect x="1391.8" y="549.2" width="3.200" height="6.8"/><rect x="1398.9" y="549.5" width="3.200" height="6.5"/><rect x="1405.9" y="549.7" width="3.200" height="6.3"/><rect x="1413.0" y="550.0" width="3.200" height="6.0"/><rect x="1420.1" y="550.0" width="3.200" height="6.0"/><rect x="1427.1" y="550.0" width="3.200" height="6.0"/><rect x="1434.2" y="550.0" width="3.200" height="6.0"/><rect x="1441.3" y="550.0" width="3.200" height="6.0"/><rect x="1448.3" y="550.0" width="3.200" height="6.0"/><rect x="1455.4" y="549.7" width="3.200" height="6.3"/><rect x="1462.5" y="549.3" width="3.200" height="6.7"/><rect x="1469.6" y="549.0" width="3.200" height="7.0"/><rect x="1476.6" y="548.7" width="3.200" height="7.3"/><rect x="1483.7" y="548.3" width="3.200" height="7.7"/><rect x="1490.8" y="548.0" width="3.200" height="8.0"/><rect x="1497.8" y="547.0" width="3.200" height="9.0"/><rect x="1504.9" y="546.0" width="3.200" height="10.0"/><rect x="1512.0" y="545.0" width="3.200" height="11.0"/><rect x="1519.0" y="545.3" width="3.200" height="10.7"/><rect x="1526.1" y="545.7" width="3.200" height="10.3"/><rect x="1533.2" y="546.0" width="3.200" height="10.0"/><rect x="1540.3" y="546.2" width="3.200" height="9.8"/><rect x="1547.3" y="546.3" width="3.200" height="9.7"/><rect x="1554.4" y="546.5" width="3.200" height="9.5"/><rect x="1561.5" y="546.7" width="3.200" height="9.3"/><rect x="1568.5" y="546.8" width="3.200" height="9.2"/><rect x="1575.6" y="547.0" width="3.200" height="9.0"/></g><path d="M440.0 566.0L460.0 569.3L488.4 575.0L502.6 577.6L516.8 578.0L540.0 576.0L573.6 571.0L608.6 568.4L651.0 566.0L679.6 561.8L700.4 556.8L728.8 553.4L750.0 551.5L777.4 549.7L812.0 547.3L828.5 548.8L850.4 555.7L868.6 562.5L885.0 568.9L899.6 573.4L914.2 576.2L932.5 576.7L950.7 575.3L969.0 571.6L987.2 567.0L1005.5 562.5L1023.7 557.9L1042.0 554.6L1069.3 554.3L1096.0 554.8L1119.0 557.0L1134.0 557.9L1154.0 556.0L1165.0 552.0L1173.0 548.0L1180.0 544.0L1190.0 537.0L1199.0 530.8L1210.0 523.5L1218.0 519.0L1226.0 516.5L1234.0 515.4L1245.0 515.3L1257.0 516.0L1275.0 521.0L1295.0 527.0L1315.0 532.0L1334.0 536.5L1353.0 540.5L1372.0 544.0L1390.0 546.8L1411.0 549.0L1430.0 550.3L1449.0 550.8L1470.0 550.0L1488.0 549.0L1505.0 547.5L1526.0 546.0L1550.0 546.0L1576.0 546.0" stroke="#0c2c98" stroke-width="1.300" fill="none"/><g stroke="#a85c1e" stroke-width="1" stroke-dasharray="3,2.500"><path d="M446 611.500H1875M446 626H1875M446 640.500H1875"/></g><path d="M446.0 638.0L452.0 637.0L458.0 641.0L463.0 643.5L470.0 641.5L475.0 640.0L481.0 641.0L486.0 642.0L489.0 636.0L494.0 627.0L498.0 630.0L502.0 631.0L506.0 628.0L510.0 627.0L514.0 630.0L517.0 631.0L521.0 628.0L525.0 625.4L532.0 627.5L540.0 627.5L548.0 628.0L556.0 629.0L565.0 631.0L575.0 632.0L585.0 632.5L594.0 632.0L604.0 631.0L614.0 630.5L624.0 630.0L633.0 629.0L641.0 629.5L648.0 629.0L654.0 626.0L660.0 623.5L666.0 621.0L671.5 619.6L679.0 619.0L687.0 619.0L694.0 621.5L702.0 623.5L709.0 622.0L717.0 620.5L725.0 621.5L733.0 621.5L741.0 619.5L748.6 617.7L753.0 615.0L757.0 614.0L762.0 616.0L768.0 616.5L773.0 614.5L779.5 612.0L784.0 612.5L787.0 613.5L790.0 618.0L793.0 621.5L796.0 620.5L799.0 619.5L803.0 623.0L806.5 626.5L812.0 628.0L819.0 630.0L825.8 632.0L830.0 636.0L833.5 639.7L838.0 640.5L842.0 641.0L846.0 638.0L849.0 635.0L853.0 635.5L858.0 637.0L864.0 639.0L870.0 641.0L875.0 643.0L880.0 643.5L885.0 642.5L890.0 640.0L895.0 638.0L904.0 637.0L913.0 636.5L922.0 635.8L932.0 634.5L941.5 633.0L951.0 631.0L960.8 629.0L970.0 626.0L980.0 623.5L986.0 621.0L991.7 619.6L996.0 620.0L1000.0 620.5L1004.0 618.0L1007.0 616.5L1011.0 618.5L1015.0 621.5L1018.7 623.5L1024.0 622.5L1030.0 621.5L1036.0 623.5L1041.8 625.4L1048.0 628.0L1053.4 630.4L1059.0 627.5L1065.0 625.4L1071.0 624.0L1076.6 623.5L1083.0 624.0L1089.0 625.4L1094.0 629.0L1099.0 632.5L1103.6 635.0L1107.0 637.0L1111.3 638.0L1117.0 636.0L1122.9 634.0L1127.0 628.0L1131.0 622.0L1134.4 617.7L1140.0 614.0L1146.0 612.0L1152.0 611.0L1156.0 608.0L1161.5 602.0L1167.0 601.0L1173.0 601.0L1177.0 600.5L1180.0 604.6L1188.0 604.6L1195.0 604.6L1199.0 607.5L1203.0 610.0L1212.0 609.8L1221.0 609.6L1230.0 609.6L1238.0 611.5L1246.0 610.5L1253.0 610.0L1261.0 612.5L1268.5 615.0L1274.0 617.5L1280.0 619.0L1286.0 618.0L1290.0 621.0L1293.5 623.0L1298.0 619.0L1303.0 616.0L1310.0 617.5L1318.5 617.0L1326.0 619.0L1334.0 621.0L1339.0 624.0L1343.5 626.0L1350.0 623.5L1357.0 626.0L1364.0 623.5L1372.0 621.0L1380.0 620.0L1386.0 622.5L1391.5 625.0L1400.0 625.5L1408.0 624.0L1413.0 622.0L1418.5 621.0L1426.0 622.0L1433.0 623.0L1441.0 622.0L1449.0 622.0L1453.0 624.5L1457.0 626.0L1461.0 622.0L1464.6 619.0L1470.0 618.0L1476.0 617.0L1480.0 615.0L1484.0 614.0L1490.0 616.0L1495.4 617.0L1500.0 615.5L1505.0 613.5L1510.8 611.5L1515.0 614.0L1520.4 619.0L1526.0 622.0L1533.0 621.0L1541.5 621.0L1547.0 623.0L1553.0 624.0L1559.0 622.0L1564.6 620.0L1570.0 619.5L1576.0 618.5" stroke="#2a8cb8" stroke-width="1.100" fill="none"/><g stroke="#b4e4b4" stroke-width="1"><path d="M1876 141h3"/><path d="M1876 171h3"/><path d="M1876 201h3"/><path d="M1876 231.5h3"/><path d="M1876 262h3"/><path d="M1876 292h3"/><path d="M1876 322h3"/><path d="M1876 353h3"/><path d="M1876 383h3"/><path d="M1876 413h3"/><path d="M1876 443h3"/><path d="M1876 473.5h3"/><path d="M1876 504h3"/><path d="M1876 516h3"/><path d="M1876 556h3"/><path d="M1876 579h3"/><path d="M1876 594h3"/><path d="M1876 611.5h3"/><path d="M1876 626h3"/><path d="M1876 640.5h3"/><path d="M1876 657h3"/><path d="M445.5 664v3"/><path d="M502.1 664v3"/><path d="M558.6 664v3"/><path d="M615.1 664v3"/><path d="M671.7 664v3"/><path d="M728.2 664v3"/><path d="M784.8 664v3"/><path d="M841.3 664v3"/><path d="M897.9 664v3"/><path d="M954.5 664v3"/><path d="M1011.0 664v3"/><path d="M1067.5 664v3"/><path d="M1124.1 664v3"/><path d="M1180.7 664v3"/><path d="M1237.2 664v3"/><path d="M1293.8 664v3"/><path d="M1350.3 664v3"/><path d="M1406.8 664v3"/><path d="M1463.4 664v3"/><path d="M1520.0 664v3"/><path d="M1576.5 664v3"/></g><path d="M1583 138.500h9l-4.500 4z" fill="#9ab89a"/></svg>
<div style="left:1881px;top:135px;font-size:8.2px;color:#ffffff;white-space:nowrap;line-height:12px;height:12px;">1766.10</div>
<div style="left:1881px;top:165px;font-size:8.2px;color:#ffffff;white-space:nowrap;line-height:12px;height:12px;">1762.30</div>
<div style="left:1881px;top:195px;font-size:8.2px;color:#ffffff;white-space:nowrap;line-height:12px;height:12px;">1758.50</div>
<div style="left:1881px;top:226px;font-size:8.2px;color:#ffffff;white-space:nowrap;line-height:12px;height:12px;">1754.70</div>
<div style="left:1881px;top:256px;font-size:8.2px;color:#ffffff;white-space:nowrap;line-height:12px;height:12px;">1750.90</div>
<div style="left:1881px;top:286px;font-size:8.2px;color:#ffffff;white-space:nowrap;line-height:12px;height:12px;">1747.10</div>
<div style="left:1881px;top:316px;font-size:8.2px;color:#ffffff;white-space:nowrap;line-height:12px;height:12px;">1743.30</div>
<div style="left:1881px;top:347px;font-size:8.2px;color:#ffffff;white-space:nowrap;line-height:12px;height:12px;">1739.50</div>
<div style="left:1881px;top:377px;font-size:8.2px;color:#ffffff;white-space:nowrap;line-height:12px;height:12px;">1735.80</div>
<div style="left:1881px;top:407px;font-size:8.2px;color:#ffffff;white-space:nowrap;line-height:12px;height:12px;">1732.00</div>
<div style="left:1881px;top:437px;font-size:8.2px;color:#ffffff;white-space:nowrap;line-height:12px;height:12px;">1728.20</div>
<div style="left:1881px;top:468px;font-size:8.2px;color:#ffffff;white-space:nowrap;line-height:12px;height:12px;">1724.40</div>
<div style="left:1881px;top:498px;font-size:8.2px;color:#ffffff;white-space:nowrap;line-height:12px;height:12px;">1720.60</div>
<div style="left:1881px;top:510px;font-size:8.2px;color:#ffffff;white-space:nowrap;line-height:12px;height:12px;">8.029</div>
<div style="left:1881px;top:550px;font-size:8.2px;color:#ffffff;white-space:nowrap;line-height:12px;height:12px;">0.00</div>
<div style="left:1881px;top:573px;font-size:8.2px;color:#ffffff;white-space:nowrap;line-height:12px;height:12px;">-5.237</div>
<div style="left:1881px;top:588px;font-size:8.2px;color:#ffffff;white-space:nowrap;line-height:12px;height:12px;">100</div>
<div style="left:1881px;top:606px;font-size:8.2px;color:#ffffff;white-space:nowrap;line-height:12px;height:12px;">70</div>
<div style="left:1881px;top:620px;font-size:8.2px;color:#ffffff;white-space:nowrap;line-height:12px;height:12px;">50</div>
<div style="left:1881px;top:634px;font-size:8.2px;color:#ffffff;white-space:nowrap;line-height:12px;height:12px;">30</div>
<div style="left:1881px;top:651px;font-size:8.2px;color:#ffffff;white-space:nowrap;line-height:12px;height:12px;">0</div>
<div style="left:1877px;top:176px;width:37px;height:6px;background:#e81818;"></div>
<div style="left:1877px;top:182px;width:37px;height:9px;background:#ffffff;"></div>
<div style="left:1881px;top:181px;font-size:8.2px;color:#000;white-space:nowrap;line-height:11px;height:11px;">1760.51</div>
<div style="left:444px;top:666.5px;font-size:8.2px;color:#ffffff;white-space:nowrap;line-height:12px;height:12px;">28 Sep 2021</div>
<div style="left:501px;top:666.5px;font-size:8.2px;color:#ffffff;white-space:nowrap;line-height:12px;height:12px;">28 Sep 16:30</div>
<div style="left:557px;top:666.5px;font-size:8.2px;color:#ffffff;white-space:nowrap;line-height:12px;height:12px;">28 Sep 20:30</div>
<div style="left:614px;top:666.5px;font-size:8.2px;color:#ffffff;white-space:nowrap;line-height:12px;height:12px;">29 Sep 01:30</div>
<div style="left:670px;top:666.5px;font-size:8.2px;color:#ffffff;white-space:nowrap;line-height:12px;height:12px;">29 Sep 05:30</div>
<div style="left:727px;top:666.5px;font-size:8.2px;color:#ffffff;white-space:nowrap;line-height:12px;height:12px;">29 Sep 09:30</div>
<div style="left:783px;top:666.5px;font-size:8.2px;color:#ffffff;white-space:nowrap;line-height:12px;height:12px;">29 Sep 13:30</div>
<div style="left:840px;top:666.5px;font-size:8.2px;color:#ffffff;white-space:nowrap;line-height:12px;height:12px;">29 Sep 17:30</div>
<div style="left:896px;top:666.5px;font-size:8.2px;color:#ffffff;white-space:nowrap;line-height:12px;height:12px;">29 Sep 21:30</div>
<div style="left:953px;top:666.5px;font-size:8.2px;color:#ffffff;white-space:nowrap;line-height:12px;height:12px;">30 Sep 02:30</div>
<div style="left:1010px;top:666.5px;font-size:8.2px;color:#ffffff;white-space:nowrap;line-height:12px;height:12px;">30 Sep 06:30</div>
<div style="left:1066px;top:666.5px;font-size:8.2px;color:#ffffff;white-space:nowrap;line-height:12px;height:12px;">30 Sep 10:30</div>
<div style="left:1123px;top:666.5px;font-size:8.2px;color:#ffffff;white-space:nowrap;line-height:12px;height:12px;">30 Sep 14:30</div>
<div style="left:1179px;top:666.5px;font-size:8.2px;color:#ffffff;white-space:nowrap;line-height:12px;height:12px;">30 Sep 18:30</div>
<div style="left:1236px;top:666.5px;font-size:8.2px;color:#ffffff;white-space:nowrap;line-height:12px;height:12px;">30 Sep 22:30</div>
<div style="left:1292px;top:666.5px;font-size:8.2px;color:#ffffff;white-space:nowrap;line-height:12px;height:12px;">1 Oct 03:30</div>
<div style="left:1349px;top:666.5px;font-size:8.2px;color:#ffffff;white-space:nowrap;line-height:12px;height:12px;">1 Oct 07:30</div>
<div style="left:1405px;top:666.5px;font-size:8.2px;color:#ffffff;white-space:nowrap;line-height:12px;height:12px;">1 Oct 11:30</div>
<div style="left:1462px;top:666.5px;font-size:8.2px;color:#ffffff;white-space:nowrap;line-height:12px;height:12px;">1 Oct 15:30</div>
<div style="left:1518px;top:666.5px;font-size:8.2px;color:#ffffff;white-space:nowrap;line-height:12px;height:12px;">1 Oct 19:30</div>
<div style="left:1575px;top:666.5px;font-size:8.2px;color:#ffffff;white-space:nowrap;line-height:12px;height:12px;">1 Oct 23:30</div>
<svg style="left:448px;top:142px" width="8" height="6"><path d="M0 0.500h7l-3.500 4.500z" fill="#fff"/></svg>
<div style="left:459px;top:138px;font-size:8.3px;color:#ffffff;white-space:nowrap;line-height:12px;height:12px;">GOLDm#,M30&nbsp; 1759.69 1760.58 1759.45 1760.51</div>
<svg style="left:654px;top:138px" width="27" height="13"><rect x="0.500" y="0.500" width="26" height="12" rx="1.500" fill="#f01414" stroke="#ff7a6a" stroke-width="0.800"/><path d="M8 5l5.500 3 5.500-3" stroke="#fff" stroke-width="1.200" fill="none"/></svg>
<div style="left:711px;top:141px;font-size:16.3px;color:#e328d8;white-space:nowrap;line-height:20px;height:20px;">趋势指标——中国梦想秀<span class="m" style="font-size:13.500px">(</span>云海<span class="m" style="font-size:13.500px">QQ</span>：<span class="m" style="font-size:13.500px">710137376)</span></div>
<div style="left:453px;top:156px;width:17px;height:17px;background:#958a95;border:1px solid #e4e0e4;border-radius:1px;"></div>
<div style="left:453px;top:157px;font-size:11.5px;color:#f4f4f4;white-space:nowrap;line-height:15px;height:15px;width:17px;text-align:center;">主</div>
<div style="left:452px;top:166.5px;font-size:8.1px;color:#ffffff;white-space:nowrap;line-height:11px;height:11px;opacity:0.75;">#60779318 buy 0.20</div>
<div style="left:452px;top:169.5px;font-size:8.1px;color:#ffffff;white-space:nowrap;line-height:11px;height:11px;opacity:0.95;">#60779318 tp</div>
<div style="left:452px;top:185px;font-size:8.1px;color:#ffffff;white-space:nowrap;line-height:11px;height:11px;opacity:0.75;">#60794358 sell 0.20</div>
<div style="left:452px;top:187px;font-size:8.1px;color:#ffffff;white-space:nowrap;line-height:11px;height:11px;opacity:0.9;">#60779944 buy 0.20</div>
<div style="left:452px;top:198.5px;font-size:8.1px;color:#ffffff;white-space:nowrap;line-height:11px;height:11px;opacity:0.85;">#60780903 sell 0.20</div>
<div style="left:452px;top:207px;font-size:8.1px;color:#ffffff;white-space:nowrap;line-height:11px;height:11px;opacity:0.9;">#60780903 tp</div>
<div style="left:446px;top:494px;font-size:10.5px;color:#ffffff;white-space:nowrap;line-height:13px;height:13px;letter-spacing:-0.100px;">友情提示, 今天是: 2021年8月18日. 金融市场时间之窗.</div>
<div style="left:1588px;top:187px;font-size:12.5px;color:#d6e23a;white-space:nowrap;line-height:16px;height:16px;">&lt;2:01</div>
<div style="left:1796px;top:140px;font-size:7.8px;color:#ffffff;white-space:nowrap;line-height:12px;height:12px;">老徐操盘助手7.43</div>
<svg style="left:1861px;top:141px" width="11" height="11"><circle cx="5.500" cy="5.500" r="4.700" fill="none" stroke="#fff" stroke-width="0.900"/><circle cx="3.800" cy="4.300" r="0.700" fill="#fff"/><circle cx="7.200" cy="4.300" r="0.700" fill="#fff"/><path d="M3 6.500c1.200 2 3.800 2 5 0" stroke="#fff" stroke-width="0.800" fill="none"/></svg>
<div style="left:1856px;top:152px;width:19px;height:321px;background:#1c1c84;border:1px solid #8a8ad0;"></div>
<div style="left:1858px;top:155px;width:16px;height:17px;background:#f01414;border:1px solid #f0d0d0;border-radius:2px;"></div>
<div style="left:1858px;top:156px;font-size:11.5px;color:#fff;white-space:nowrap;line-height:15px;height:15px;width:16px;text-align:center;">&lt;</div>
<div style="left:1858px;top:173px;width:16px;height:17px;background:#f01414;border:1px solid #f0d0d0;border-radius:2px;"></div>
<div style="left:1858px;top:174px;font-size:11.5px;color:#fff;white-space:nowrap;line-height:15px;height:15px;width:16px;text-align:center;">振</div>
<div style="left:1858px;top:192px;width:16px;height:17px;background:#2a8a3a;border:1px solid #f0d0d0;border-radius:2px;"></div>
<div style="left:1858px;top:193px;font-size:11.5px;color:#fff;white-space:nowrap;line-height:15px;height:15px;width:16px;text-align:center;">路</div>
<div style="left:1858px;top:210px;width:16px;height:17px;background:#f01414;border:1px solid #f0d0d0;border-radius:2px;"></div>
<div style="left:1858px;top:211px;font-size:11.5px;color:#fff;white-space:nowrap;line-height:15px;height:15px;width:16px;text-align:center;">多</div>
<div style="left:1858px;top:229px;width:16px;height:17px;background:#f01414;border:1px solid #f0d0d0;border-radius:2px;"></div>
<div style="left:1858px;top:230px;font-size:11.5px;color:#fff;white-space:nowrap;line-height:15px;height:15px;width:16px;text-align:center;">空</div>
<div style="left:1858px;top:247px;width:16px;height:17px;background:#f01414;border:1px solid #f0d0d0;border-radius:2px;"></div>
<div style="left:1858px;top:248px;font-size:11.5px;color:#fff;white-space:nowrap;line-height:15px;height:15px;width:16px;text-align:center;">确</div>
<div style="left:1858px;top:265px;width:16px;height:17px;background:#f01414;border:1px solid #f0d0d0;border-radius:2px;"></div>
<div style="left:1858px;top:266px;font-size:11.5px;color:#fff;white-space:nowrap;line-height:15px;height:15px;width:16px;text-align:center;">直</div>
<div style="left:1858px;top:284px;width:16px;height:17px;background:#2a8a3a;border:1px solid #f0d0d0;border-radius:2px;"></div>
<div style="left:1858px;top:285px;font-size:11.5px;color:#fff;white-space:nowrap;line-height:15px;height:15px;width:16px;text-align:center;">拖</div>
<div style="left:1858px;top:302px;width:16px;height:17px;background:#f01414;border:1px solid #f0d0d0;border-radius:2px;"></div>
<div style="left:1858px;top:303px;font-size:11.5px;color:#fff;white-space:nowrap;line-height:15px;height:15px;width:16px;text-align:center;">均</div>
<div style="left:1858px;top:321px;width:16px;height:17px;background:#f01414;border:1px solid #f0d0d0;border-radius:2px;"></div>
<div style="left:1858px;top:322px;font-size:11.5px;color:#fff;white-space:nowrap;line-height:15px;height:15px;width:16px;text-align:center;">浪</div>
<div style="left:1858px;top:339px;width:16px;height:17px;background:#f01414;border:1px solid #f0d0d0;border-radius:2px;"></div>
<div style="left:1858px;top:340px;font-size:11.5px;color:#fff;white-space:nowrap;line-height:15px;height:15px;width:16px;text-align:center;">快</div>
<div style="left:1858px;top:357px;width:16px;height:17px;background:#f01414;border:1px solid #f0d0d0;border-radius:2px;"></div>
<div style="left:1858px;top:358px;font-size:11.5px;color:#fff;white-space:nowrap;line-height:15px;height:15px;width:16px;text-align:center;">挂</div>
<div style="left:1858px;top:376px;width:16px;height:17px;background:#8c8c8c;border:1px solid #f0d0d0;border-radius:2px;"></div>
<div style="left:1858px;top:377px;font-size:11.5px;color:#fff;white-space:nowrap;line-height:15px;height:15px;width:16px;text-align:center;">上</div>
<div style="left:1858px;top:394px;width:16px;height:17px;background:#8c8c8c;border:1px solid #f0d0d0;border-radius:2px;"></div>
<div style="left:1858px;top:395px;font-size:11.5px;color:#fff;white-space:nowrap;line-height:15px;height:15px;width:16px;text-align:center;">?</div>
<div style="left:1858px;top:413px;width:16px;height:17px;background:#8c8c8c;border:1px solid #f0d0d0;border-radius:2px;"></div>
<div style="left:1858px;top:414px;font-size:11.5px;color:#fff;white-space:nowrap;line-height:15px;height:15px;width:16px;text-align:center;">×</div>
<div style="left:1858px;top:431px;width:16px;height:17px;background:#8c8c8c;border:1px solid #f0d0d0;border-radius:2px;"></div>
<div style="left:1858px;top:432px;font-size:11.5px;color:#fff;white-space:nowrap;line-height:15px;height:15px;width:16px;text-align:center;">︿</div>
<div style="left:1815px;top:489px;width:59px;height:19px;background:#1c1c84;border:1px solid #5a5ab8;"></div>
<div style="left:1815px;top:491px;font-size:11.5px;color:#fff;white-space:nowrap;line-height:15px;height:15px;width:59px;text-align:center;">&lt;&lt; Magic</div>
<div style="left:1655px;top:491px;font-size:10.4px;color:#e6e63a;white-space:nowrap;line-height:14px;height:14px;font-family:'Liberation Mono',monospace;letter-spacing:-0.500px;">1782.176 &lt; D点有效价格波动范围</div>
<div style="left:449px;top:511px;font-size:8.3px;color:#ffffff;white-space:nowrap;line-height:12px;height:12px;">MACD(12,26,9) 1.453 1.636</div>
<div style="left:449px;top:589px;font-size:8.3px;color:#ffffff;white-space:nowrap;line-height:12px;height:12px;">RSI(14) 59.7718</div>
<div style="left:222px;top:134px;width:221px;height:572px;background:#f0f0f0;"></div>
<div style="left:224px;top:135px;width:217px;height:15px;background:linear-gradient(90deg,#b2c9e5 0%,#cddcef 50%,#f3f5f9 100%);"></div>
<div style="left:227px;top:135px;font-size:10.5px;color:#1a1a1a;white-space:nowrap;line-height:15px;height:15px;font-weight:bold;letter-spacing:-0.200px;">市场报价: 23:57:59</div>
<svg style="left:430px;top:139.5px" width="6" height="6"><path d="M0.500 0.500l4.600 4.600M5.100 0.500l-4.600 4.600" stroke="#111" stroke-width="1.400"/></svg>
<div style="left:224px;top:150px;width:216px;height:244px;background:#ffffff;border:1px solid #a0a0a0;border-bottom:1px solid #444;"></div>
<div style="left:231px;top:154px;font-size:10.5px;color:#222;white-space:nowrap;line-height:14px;height:14px;">交易品种</div>
<div style="left:311px;top:154px;font-size:10.5px;color:#222;white-space:nowrap;line-height:14px;height:14px;width:51px;text-align:right;">卖价</div>
<div style="left:367px;top:154px;font-size:10.5px;color:#222;white-space:nowrap;line-height:14px;height:14px;width:51px;text-align:right;">买价</div>
<div style="left:225px;top:151px;width:198px;height:242px;overflow:hidden">
<div style="left:0;top:19.8px;width:198px;height:1px;background:#e0e0e0"></div>
<div style="left:0;top:39.2px;width:198px;height:1px;background:#e6e6e6"></div>
<div style="left:0;top:58.6px;width:198px;height:1px;background:#e6e6e6"></div>
<div style="left:0;top:78.0px;width:198px;height:1px;background:#e6e6e6"></div>
<div style="left:0;top:97.4px;width:198px;height:1px;background:#e6e6e6"></div>
<div style="left:0;top:116.8px;width:198px;height:1px;background:#e6e6e6"></div>
<div style="left:0;top:136.2px;width:198px;height:1px;background:#e6e6e6"></div>
<div style="left:0;top:137.2px;width:198px;height:19.4px;background:#0a78d6"></div>
<div style="left:0;top:155.6px;width:198px;height:1px;background:#e6e6e6"></div>
<div style="left:0;top:175.0px;width:198px;height:1px;background:#e6e6e6"></div>
<div style="left:0;top:194.4px;width:198px;height:1px;background:#e6e6e6"></div>
<div style="left:0;top:213.8px;width:198px;height:1px;background:#e6e6e6"></div>
<div style="left:0;top:233.2px;width:198px;height:1px;background:#e6e6e6"></div>
<div style="left:0;top:252.6px;width:198px;height:1px;background:#e6e6e6"></div>
<div style="left:85px;top:0;width:1px;height:242px;background:#e0e0e0"></div><div style="left:141px;top:0;width:1px;height:242px;background:#e0e0e0"></div>
</div>
<svg style="left:230px;top:177px" width="9" height="9"><path d="M4.500 8.500L8.500 4H6V0.500H3V4H0.500z" fill="#f0562a" stroke="#a83210" stroke-width="0.600"/></svg>
<div style="left:244px;top:175px;font-size:10.5px;color:#a0a0a0;white-space:nowrap;line-height:14px;height:14px;">USDCHF</div>
<div style="left:311px;top:175px;font-size:10.5px;color:#e03a3a;white-space:nowrap;line-height:14px;height:14px;width:51px;text-align:right;">0.93031</div>
<div style="left:367px;top:175px;font-size:10.5px;color:#e03a3a;white-space:nowrap;line-height:14px;height:14px;width:51px;text-align:right;">0.93075</div>
<svg style="left:230px;top:196px" width="9" height="9"><path d="M4.500 0.500L8.500 5H6v3.500H3V5H0.500z" fill="#2fb52f" stroke="#1a7a1a" stroke-width="0.600"/></svg>
<div style="left:244px;top:194px;font-size:10.5px;color:#a0a0a0;white-space:nowrap;line-height:14px;height:14px;">GBPUSD</div>
<div style="left:311px;top:194px;font-size:10.5px;color:#2222cc;white-space:nowrap;line-height:14px;height:14px;width:51px;text-align:right;">1.35419</div>
<div style="left:367px;top:194px;font-size:10.5px;color:#2222cc;white-space:nowrap;line-height:14px;height:14px;width:51px;text-align:right;">1.35485</div>
<svg style="left:230px;top:216px" width="9" height="9"><path d="M4.500 8.500L8.500 4H6V0.500H3V4H0.500z" fill="#f0562a" stroke="#a83210" stroke-width="0.600"/></svg>
<div style="left:244px;top:214px;font-size:10.5px;color:#a0a0a0;white-space:nowrap;line-height:14px;height:14px;">EURUSD</div>
<div style="left:311px;top:214px;font-size:10.5px;color:#e03a3a;white-space:nowrap;line-height:14px;height:14px;width:51px;text-align:right;">1.15912</div>
<div style="left:367px;top:214px;font-size:10.5px;color:#e03a3a;white-space:nowrap;line-height:14px;height:14px;width:51px;text-align:right;">1.15954</div>
<svg style="left:230px;top:235px" width="9" height="9"><path d="M4.500 8.500L8.500 4H6V0.500H3V4H0.500z" fill="#f0562a" stroke="#a83210" stroke-width="0.600"/></svg>
<div style="left:244px;top:233px;font-size:10.5px;color:#a0a0a0;white-space:nowrap;line-height:14px;height:14px;">USDJPY</div>
<div style="left:311px;top:233px;font-size:10.5px;color:#e03a3a;white-space:nowrap;line-height:14px;height:14px;width:51px;text-align:right;">111.048</div>
<div style="left:367px;top:233px;font-size:10.5px;color:#e03a3a;white-space:nowrap;line-height:14px;height:14px;width:51px;text-align:right;">111.085</div>
<svg style="left:230px;top:254px" width="9" height="9"><path d="M4.500 8.500L8.500 4H6V0.500H3V4H0.500z" fill="#f0562a" stroke="#a83210" stroke-width="0.600"/></svg>
<div style="left:244px;top:252px;font-size:10.5px;color:#111;white-space:nowrap;line-height:14px;height:14px;">EURUSDm#</div>
<div style="left:311px;top:252px;font-size:10.5px;color:#e03a3a;white-space:nowrap;line-height:14px;height:14px;width:51px;text-align:right;">1.15916</div>
<div style="left:367px;top:252px;font-size:10.5px;color:#e03a3a;white-space:nowrap;line-height:14px;height:14px;width:51px;text-align:right;">1.15950</div>
<svg style="left:230px;top:274px" width="9" height="9"><path d="M4.500 0.500L8.500 5H6v3.500H3V5H0.500z" fill="#2fb52f" stroke="#1a7a1a" stroke-width="0.600"/></svg>
<div style="left:244px;top:272px;font-size:10.5px;color:#111;white-space:nowrap;line-height:14px;height:14px;">GBPUSDm#</div>
<div style="left:311px;top:272px;font-size:10.5px;color:#2222cc;white-space:nowrap;line-height:14px;height:14px;width:51px;text-align:right;">1.35426</div>
<div style="left:367px;top:272px;font-size:10.5px;color:#2222cc;white-space:nowrap;line-height:14px;height:14px;width:51px;text-align:right;">1.35478</div>
<svg style="left:230px;top:293px" width="9" height="9"><path d="M4.500 8.500L8.500 4H6V0.500H3V4H0.500z" fill="#f0562a" stroke="#a83210" stroke-width="0.600"/></svg>
<div style="left:244px;top:291px;font-size:10.5px;color:#fff;white-space:nowrap;line-height:14px;height:14px;">GOLDm#</div>
<div style="left:311px;top:291px;font-size:10.5px;color:#fff;white-space:nowrap;line-height:14px;height:14px;width:51px;text-align:right;">1760.51</div>
<div style="left:367px;top:291px;font-size:10.5px;color:#fff;white-space:nowrap;line-height:14px;height:14px;width:51px;text-align:right;">1761.22</div>
<svg style="left:230px;top:313px" width="9" height="9"><path d="M4.500 0.500L8.500 5H6v3.500H3V5H0.500z" fill="#2fb52f" stroke="#1a7a1a" stroke-width="0.600"/></svg>
<div style="left:244px;top:311px;font-size:10.5px;color:#a0a0a0;white-space:nowrap;line-height:14px;height:14px;">USDSGD</div>
<div style="left:311px;top:311px;font-size:10.5px;color:#2222cc;white-space:nowrap;line-height:14px;height:14px;width:51px;text-align:right;">1.35535</div>
<div style="left:367px;top:311px;font-size:10.5px;color:#2222cc;white-space:nowrap;line-height:14px;height:14px;width:51px;text-align:right;">1.35775</div>
<svg style="left:230px;top:332px" width="9" height="9"><path d="M4.500 8.500L8.500 4H6V0.500H3V4H0.500z" fill="#f0562a" stroke="#a83210" stroke-width="0.600"/></svg>
<div style="left:244px;top:330px;font-size:10.5px;color:#a0a0a0;white-space:nowrap;line-height:14px;height:14px;">AUDUSD</div>
<div style="left:311px;top:330px;font-size:10.5px;color:#e03a3a;white-space:nowrap;line-height:14px;height:14px;width:51px;text-align:right;">0.72616</div>
<div style="left:367px;top:330px;font-size:10.5px;color:#e03a3a;white-space:nowrap;line-height:14px;height:14px;width:51px;text-align:right;">0.72680</div>
<svg style="left:230px;top:351px" width="9" height="9"><path d="M4.500 0.500L8.500 5H6v3.500H3V5H0.500z" fill="#2fb52f" stroke="#1a7a1a" stroke-width="0.600"/></svg>
<div style="left:244px;top:349px;font-size:10.5px;color:#a0a0a0;white-space:nowrap;line-height:14px;height:14px;">AUDCHF</div>
<div style="left:311px;top:349px;font-size:10.5px;color:#2222cc;white-space:nowrap;line-height:14px;height:14px;width:51px;text-align:right;">0.67570</div>
<div style="left:367px;top:349px;font-size:10.5px;color:#2222cc;white-space:nowrap;line-height:14px;height:14px;width:51px;text-align:right;">0.67622</div>
<svg style="left:230px;top:371px" width="9" height="9"><path d="M4.500 0.500L8.500 5H6v3.500H3V5H0.500z" fill="#2fb52f" stroke="#1a7a1a" stroke-width="0.600"/></svg>
<div style="left:244px;top:369px;font-size:10.5px;color:#a0a0a0;white-space:nowrap;line-height:14px;height:14px;">CHFJPY</div>
<div style="left:311px;top:369px;font-size:10.5px;color:#2222cc;white-space:nowrap;line-height:14px;height:14px;width:51px;text-align:right;">119.317</div>
<div style="left:367px;top:369px;font-size:10.5px;color:#2222cc;white-space:nowrap;line-height:14px;height:14px;width:51px;text-align:right;">119.405</div>
<div style="left:225px;top:388.2px;width:198px;height:4.8px;overflow:hidden">
<div style="left:19px;top:0;font-size:10.500px;line-height:14px;color:#a0a0a0;white-space:nowrap">EURAUD</div>
<div style="left:86px;top:0;width:51px;text-align:right;font-size:10.500px;line-height:14px;color:#2222cc">1.59560</div>
<div style="left:142px;top:0;width:51px;text-align:right;font-size:10.500px;line-height:14px;color:#2222cc">1.59662</div>
</div>
<div style="left:424px;top:151px;width:15px;height:242px;background:#f0f0f0;"></div>
<div style="left:425px;top:166px;width:13px;height:20px;background:#cdcdcd;"></div>
<svg style="left:424px;top:151px" width="15" height="242"><path d="M4.0 9l3.500-3.500 3.500 3.500M4.0 233l3.500 3.500 3.500-3.500" stroke="#444" stroke-width="1.300" fill="none"/></svg>
<div style="left:227px;top:394px;width:60px;height:19px;background:#ffffff;border:1px solid #333;border-top:none;border-bottom:2px solid #333;border-radius:0 0 2px 2px;"></div>
<div style="left:236px;top:396px;font-size:10.5px;color:#111;white-space:nowrap;line-height:14px;height:14px;">交易品种</div>
<div style="left:297px;top:396px;font-size:10.5px;color:#9a9a9a;white-space:nowrap;line-height:14px;height:14px;">即时图</div>
<div style="left:337px;top:397px;width:1px;height:13px;background:#999;"></div>
<div style="left:222px;top:418px;width:221px;height:284px;background:#f0f0f0;"></div>
<div style="left:224px;top:419px;width:217px;height:15px;background:linear-gradient(90deg,#b2c9e5 0%,#cddcef 50%,#f3f5f9 100%);"></div>
<div style="left:227px;top:419px;font-size:10.5px;color:#1a1a1a;white-space:nowrap;line-height:15px;height:15px;font-weight:bold;">导航</div>
<svg style="left:430px;top:423.5px" width="6" height="6"><path d="M0.500 0.500l4.600 4.600M5.100 0.500l-4.600 4.600" stroke="#111" stroke-width="1.400"/></svg>
<div style="left:224px;top:434px;width:216px;height:243px;background:#ffffff;border:1px solid #a0a0a0;border-bottom:1px solid #444;"></div>
<svg style="left:225px;top:435px" width="198" height="241"><g stroke="#b4b4b4" stroke-dasharray="1,1" fill="none"><path d="M12.500 0v230M30.500 0v28M30.500 55v175"/><path d="M31 8.500h10M31 27.500h10M17 46.500h6M31 64.500h10M31 82.500h10M31 101.500h10M31 119.500h10M31 137.500h10M31 156.500h10M31 174.500h10M31 192.500h10M31 211.500h10M17 229.500h6"/></g><g fill="#fff" stroke="#b0b0bc"><rect x="8.500" y="42.500" width="8" height="8"/><rect x="8.500" y="225.500" width="8" height="8"/></g><path d="M10.500 46.500h4M10.500 229.500h4M12.500 227.500v4" stroke="#333"/></svg>
<svg style="left:267px;top:437px" width="14" height="14" viewBox="0 0 14 14"><rect x="0.500" y="0.500" width="12" height="12" rx="2" fill="#f7d254" stroke="#b08a1a" stroke-width="0.900"/><text x="5.500" y="10" font-size="9" font-style="italic" font-weight="bold" text-anchor="middle" fill="#6a4a00" font-family="Liberation Serif">f</text><circle cx="10.500" cy="10.500" r="2.600" fill="#b8b8b8" stroke="#666" stroke-width="0.700"/></svg>
<div style="left:286px;top:437px;font-size:10.5px;color:#222;white-space:nowrap;line-height:14px;height:14px;letter-spacing:0.250px;">阻力支撑线03</div>
<svg style="left:267px;top:456px" width="14" height="14" viewBox="0 0 14 14"><rect x="0.500" y="0.500" width="12" height="12" rx="2" fill="#f7d254" stroke="#b08a1a" stroke-width="0.900"/><text x="5.500" y="10" font-size="9" font-style="italic" font-weight="bold" text-anchor="middle" fill="#6a4a00" font-family="Liberation Serif">f</text><circle cx="10.500" cy="10.500" r="2.600" fill="#b8b8b8" stroke="#666" stroke-width="0.700"/></svg>
<div style="left:286px;top:456px;font-size:10.5px;color:#222;white-space:nowrap;line-height:14px;height:14px;letter-spacing:0.250px;">最新高低</div>
<svg style="left:248px;top:474px" width="15" height="14" viewBox="0 0 15 14"><path d="M5 8.300l3.200-1 3 3.400-3.600 1.800z" fill="#f0d446" stroke="#a88c1c" stroke-width="0.700"/><path d="M3.800 5.800C3.800 0.800 11.200 0.800 11.200 5.800z" fill="#4a98de" stroke="#2a6cb4" stroke-width="0.600"/><ellipse cx="7.500" cy="6" rx="6.900" ry="2.300" fill="#62b2f0" stroke="#2a6cb4" stroke-width="0.600"/><path d="M5.200 3.200c1-1.200 3-1.400 4-.600" stroke="#cfe8fb" stroke-width="0.800" fill="none"/></svg>
<div style="left:268px;top:474px;font-size:10.5px;color:#222;white-space:nowrap;line-height:14px;height:14px;">EA交易</div>
<svg style="left:266px;top:492px" width="15" height="14" viewBox="0 0 15 14"><path d="M5 8.300l3.200-1 3 3.400-3.600 1.800z" fill="#f0d446" stroke="#a88c1c" stroke-width="0.700"/><path d="M3.800 5.800C3.800 0.800 11.200 0.800 11.200 5.800z" fill="#4a98de" stroke="#2a6cb4" stroke-width="0.600"/><ellipse cx="7.500" cy="6" rx="6.900" ry="2.300" fill="#62b2f0" stroke="#2a6cb4" stroke-width="0.600"/><path d="M5.200 3.200c1-1.200 3-1.400 4-.600" stroke="#cfe8fb" stroke-width="0.800" fill="none"/><circle cx="11.800" cy="11.300" r="2.300" fill="#9c9ca6" stroke="#5a5a64" stroke-width="0.700"/><circle cx="11.800" cy="11.300" r="0.800" fill="#e8e8ee"/></svg>
<div style="left:286px;top:492px;font-size:10.5px;color:#222;white-space:nowrap;line-height:14px;height:14px;letter-spacing:0.250px;">AllTime_EA_v5.2</div>
<svg style="left:266px;top:511px" width="15" height="14" viewBox="0 0 15 14"><path d="M5 8.300l3.200-1 3 3.400-3.600 1.800z" fill="#f0d446" stroke="#a88c1c" stroke-width="0.700"/><path d="M3.800 5.800C3.800 0.800 11.200 0.800 11.200 5.800z" fill="#4a98de" stroke="#2a6cb4" stroke-width="0.600"/><ellipse cx="7.500" cy="6" rx="6.900" ry="2.300" fill="#62b2f0" stroke="#2a6cb4" stroke-width="0.600"/><path d="M5.200 3.200c1-1.200 3-1.400 4-.600" stroke="#cfe8fb" stroke-width="0.800" fill="none"/><circle cx="11.800" cy="11.300" r="2.300" fill="#9c9ca6" stroke="#5a5a64" stroke-width="0.700"/><circle cx="11.800" cy="11.300" r="0.800" fill="#e8e8ee"/></svg>
<div style="left:286px;top:511px;font-size:10.5px;color:#222;white-space:nowrap;line-height:14px;height:14px;letter-spacing:0.250px;">Hedging_EA_v3.7.8</div>
<svg style="left:266px;top:529px" width="15" height="14" viewBox="0 0 15 14"><path d="M5 8.300l3.200-1 3 3.400-3.600 1.800z" fill="#f0d446" stroke="#a88c1c" stroke-width="0.700"/><path d="M3.800 5.800C3.800 0.800 11.200 0.800 11.200 5.800z" fill="#4a98de" stroke="#2a6cb4" stroke-width="0.600"/><ellipse cx="7.500" cy="6" rx="6.900" ry="2.300" fill="#62b2f0" stroke="#2a6cb4" stroke-width="0.600"/><path d="M5.200 3.200c1-1.200 3-1.400 4-.600" stroke="#cfe8fb" stroke-width="0.800" fill="none"/><circle cx="11.800" cy="11.300" r="2.300" fill="#9c9ca6" stroke="#5a5a64" stroke-width="0.700"/><circle cx="11.800" cy="11.300" r="0.800" fill="#e8e8ee"/></svg>
<div style="left:286px;top:529px;font-size:10.5px;color:#222;white-space:nowrap;line-height:14px;height:14px;letter-spacing:0.250px;">MACD Sample</div>
<svg style="left:266px;top:547px" width="15" height="14" viewBox="0 0 15 14"><path d="M5 8.300l3.200-1 3 3.400-3.600 1.800z" fill="#f0d446" stroke="#a88c1c" stroke-width="0.700"/><path d="M3.800 5.800C3.800 0.800 11.200 0.800 11.200 5.800z" fill="#4a98de" stroke="#2a6cb4" stroke-width="0.600"/><ellipse cx="7.500" cy="6" rx="6.900" ry="2.300" fill="#62b2f0" stroke="#2a6cb4" stroke-width="0.600"/><path d="M5.200 3.200c1-1.200 3-1.400 4-.600" stroke="#cfe8fb" stroke-width="0.800" fill="none"/><circle cx="11.800" cy="11.300" r="2.300" fill="#9c9ca6" stroke="#5a5a64" stroke-width="0.700"/><circle cx="11.800" cy="11.300" r="0.800" fill="#e8e8ee"/></svg>
<div style="left:286px;top:547px;font-size:10.5px;color:#222;white-space:nowrap;line-height:14px;height:14px;letter-spacing:0.250px;">Moving Average</div>
<svg style="left:266px;top:566px" width="15" height="14" viewBox="0 0 15 14"><path d="M5 8.300l3.200-1 3 3.400-3.600 1.800z" fill="#f0d446" stroke="#a88c1c" stroke-width="0.700"/><path d="M3.800 5.800C3.800 0.800 11.200 0.800 11.200 5.800z" fill="#4a98de" stroke="#2a6cb4" stroke-width="0.600"/><ellipse cx="7.500" cy="6" rx="6.900" ry="2.300" fill="#62b2f0" stroke="#2a6cb4" stroke-width="0.600"/><path d="M5.200 3.200c1-1.200 3-1.400 4-.600" stroke="#cfe8fb" stroke-width="0.800" fill="none"/><circle cx="11.800" cy="11.300" r="2.300" fill="#9c9ca6" stroke="#5a5a64" stroke-width="0.700"/><circle cx="11.800" cy="11.300" r="0.800" fill="#e8e8ee"/></svg>
<div style="left:286px;top:566px;font-size:10.5px;color:#222;white-space:nowrap;line-height:14px;height:14px;letter-spacing:0.250px;">WikiFXDefense</div>
<svg style="left:266px;top:584px" width="15" height="14" viewBox="0 0 15 14"><path d="M5 8.300l3.200-1 3 3.400-3.600 1.800z" fill="#f0d446" stroke="#a88c1c" stroke-width="0.700"/><path d="M3.800 5.800C3.800 0.800 11.200 0.800 11.200 5.800z" fill="#4a98de" stroke="#2a6cb4" stroke-width="0.600"/><ellipse cx="7.500" cy="6" rx="6.900" ry="2.300" fill="#62b2f0" stroke="#2a6cb4" stroke-width="0.600"/><path d="M5.200 3.200c1-1.200 3-1.400 4-.600" stroke="#cfe8fb" stroke-width="0.800" fill="none"/><circle cx="11.800" cy="11.300" r="2.300" fill="#9c9ca6" stroke="#5a5a64" stroke-width="0.700"/><circle cx="11.800" cy="11.300" r="0.800" fill="#e8e8ee"/></svg>
<div style="left:286px;top:584px;font-size:10.5px;color:#222;white-space:nowrap;line-height:14px;height:14px;letter-spacing:0.250px;">跟单EA</div>
<svg style="left:266px;top:602px" width="15" height="14" viewBox="0 0 15 14"><path d="M5 8.300l3.200-1 3 3.400-3.600 1.800z" fill="#f0d446" stroke="#a88c1c" stroke-width="0.700"/><path d="M3.800 5.800C3.800 0.800 11.200 0.800 11.200 5.800z" fill="#4a98de" stroke="#2a6cb4" stroke-width="0.600"/><ellipse cx="7.500" cy="6" rx="6.900" ry="2.300" fill="#62b2f0" stroke="#2a6cb4" stroke-width="0.600"/><path d="M5.200 3.200c1-1.200 3-1.400 4-.600" stroke="#cfe8fb" stroke-width="0.800" fill="none"/><circle cx="11.800" cy="11.300" r="2.300" fill="#9c9ca6" stroke="#5a5a64" stroke-width="0.700"/><circle cx="11.800" cy="11.300" r="0.800" fill="#e8e8ee"/></svg>
<div style="left:286px;top:602px;font-size:10.5px;color:#222;white-space:nowrap;line-height:14px;height:14px;letter-spacing:0.250px;">喊单EA</div>
<svg style="left:266px;top:621px" width="15" height="14" viewBox="0 0 15 14"><path d="M5 8.300l3.200-1 3 3.400-3.600 1.800z" fill="#f0d446" stroke="#a88c1c" stroke-width="0.700"/><path d="M3.800 5.800C3.800 0.800 11.200 0.800 11.200 5.800z" fill="#4a98de" stroke="#2a6cb4" stroke-width="0.600"/><ellipse cx="7.500" cy="6" rx="6.900" ry="2.300" fill="#62b2f0" stroke="#2a6cb4" stroke-width="0.600"/><path d="M5.200 3.200c1-1.200 3-1.400 4-.600" stroke="#cfe8fb" stroke-width="0.800" fill="none"/><circle cx="11.800" cy="11.300" r="2.300" fill="#9c9ca6" stroke="#5a5a64" stroke-width="0.700"/><circle cx="11.800" cy="11.300" r="0.800" fill="#e8e8ee"/></svg>
<div style="left:286px;top:621px;font-size:10.5px;color:#222;white-space:nowrap;line-height:14px;height:14px;letter-spacing:0.250px;">老徐操盘助手7.42</div>
<svg style="left:266px;top:639px" width="15" height="14" viewBox="0 0 15 14"><path d="M5 8.300l3.200-1 3 3.400-3.600 1.800z" fill="#f0d446" stroke="#a88c1c" stroke-width="0.700"/><path d="M3.800 5.800C3.800 0.800 11.200 0.800 11.200 5.800z" fill="#4a98de" stroke="#2a6cb4" stroke-width="0.600"/><ellipse cx="7.500" cy="6" rx="6.900" ry="2.300" fill="#62b2f0" stroke="#2a6cb4" stroke-width="0.600"/><path d="M5.200 3.200c1-1.200 3-1.400 4-.600" stroke="#cfe8fb" stroke-width="0.800" fill="none"/><circle cx="11.800" cy="11.300" r="2.300" fill="#9c9ca6" stroke="#5a5a64" stroke-width="0.700"/><circle cx="11.800" cy="11.300" r="0.800" fill="#e8e8ee"/></svg>
<div style="left:286px;top:639px;font-size:10.5px;color:#222;white-space:nowrap;line-height:14px;height:14px;letter-spacing:0.250px;">老徐操盘助手7.43</div>
<svg style="left:249px;top:657px" width="14" height="14"><path d="M2 1h8v3h-2v8h-6v-3h2v-5h-2z" fill="#f2d04a" stroke="#a8861a" stroke-width="0.800"/><path d="M8.500 9.500l2.500-1 2 2.500-2.500 1.500z" fill="#f2c23a" stroke="#a8821a" stroke-width="0.700"/></svg>
<div style="left:268px;top:657px;font-size:10.5px;color:#222;white-space:nowrap;line-height:14px;height:14px;">脚本</div>
<div style="left:424px;top:435px;width:15px;height:241px;background:#f0f0f0;"></div>
<div style="left:425px;top:641px;width:13px;height:20px;background:#cdcdcd;"></div>
<svg style="left:424px;top:435px" width="15" height="241"><path d="M4.0 9l3.500-3.500 3.500 3.500M4.0 232l3.500 3.500 3.500-3.500" stroke="#444" stroke-width="1.300" fill="none"/></svg>
<div style="left:227px;top:677px;width:39px;height:20px;background:#ffffff;border:1px solid #333;border-top:none;border-bottom:2px solid #333;border-radius:0 0 2px 2px;"></div>
<div style="left:235px;top:679px;font-size:10.5px;color:#111;white-space:nowrap;line-height:14px;height:14px;">常用</div>
<div style="left:275px;top:679px;font-size:10.5px;color:#9a9a9a;white-space:nowrap;line-height:14px;height:14px;">收藏夹</div>
<div style="left:315px;top:680px;width:1px;height:13px;background:#999;"></div>
<div style="left:443px;top:685px;width:1475px;height:20px;background:#f0f0f0;"></div>
<div style="left:443px;top:684px;width:1475px;height:1px;background:#444;"></div>
<div style="left:442px;top:685px;width:1px;height:17px;background:#a8a8a8;"></div>
<div style="left:457px;top:687px;font-size:10.5px;color:#8a8a8a;white-space:nowrap;line-height:14px;height:14px;">GOLDm#,H1</div>
<div style="left:542px;top:687px;font-size:10.5px;color:#8a8a8a;white-space:nowrap;line-height:14px;height:14px;">GOLDm#,H1</div>
<div style="left:627px;top:687px;font-size:10.5px;color:#8a8a8a;white-space:nowrap;line-height:14px;height:14px;">GOLDm#,H1</div>
<div style="left:531px;top:688px;width:1px;height:13px;background:#888;"></div>
<div style="left:616px;top:688px;width:1px;height:13px;background:#888;"></div>
<div style="left:701px;top:685px;width:92px;height:17px;background:#ffffff;border:1px solid #444;border-top:none;border-bottom:2px solid #444;"></div>
<div style="left:711px;top:687px;font-size:10.5px;color:#111;white-space:nowrap;line-height:14px;height:14px;">GOLDm#,M30</div>
<svg style="left:1886px;top:689px" width="28" height="8"><path d="M5.500 1v5l-3-2.500zM21 1v5l3-2.500z" fill="#a4a4a4"/></svg>
<div style="left:222px;top:704px;width:1696px;height:276px;background:#f0f0f0;"></div>
<div style="left:222px;top:706px;width:14px;height:268px;background:linear-gradient(180deg,#dbe7f4,#b9cfe8);"></div>
<svg style="left:227px;top:709.5px" width="6" height="6"><path d="M0.500 0.500l4.600 4.600M5.100 0.500l-4.600 4.600" stroke="#111" stroke-width="1.400"/></svg>
<div style="left:223px;top:950px;width:12px;height:24px;font-size:8px;line-height:9px;color:#334;writing-mode:vertical-rl;overflow:hidden">终端</div>
<div style="left:236px;top:707px;width:1663px;height:245px;background:#ffffff;border-top:1px solid #b0b0b0;border-left:1px solid #b0b0b0;"></div>
<div style="left:237px;top:708px;width:1662px;height:244px;overflow:hidden">
<div style="left:6px;top:4px;font-size:10.500px;line-height:14px;color:#222;white-space:nowrap">订单&nbsp;&nbsp;&nbsp;<span style="color:#888;font-size:8px">/</span></div>
<div style="left:132.3px;top:4px;width:182.2px;text-align:right;font-size:10.500px;line-height:14px;color:#222;white-space:nowrap">时间</div>
<div style="left:318.5px;top:4px;width:88.1px;text-align:right;font-size:10.500px;line-height:14px;color:#222;white-space:nowrap">类型</div>
<div style="left:410.6px;top:4px;width:67.0px;text-align:right;font-size:10.500px;line-height:14px;color:#222;white-space:nowrap">手数</div>
<div style="left:481.6px;top:4px;width:89.0px;text-align:right;font-size:10.500px;line-height:14px;color:#222;white-space:nowrap">交易品种</div>
<div style="left:574.6px;top:4px;width:98.8px;text-align:right;font-size:10.500px;line-height:14px;color:#222;white-space:nowrap">价格</div>
<div style="left:677.4px;top:4px;width:98.0px;text-align:right;font-size:10.500px;line-height:14px;color:#222;white-space:nowrap">止损</div>
<div style="left:779.4px;top:4px;width:98.6px;text-align:right;font-size:10.500px;line-height:14px;color:#222;white-space:nowrap">止盈</div>
<div style="left:882.0px;top:4px;width:98.8px;text-align:right;font-size:10.500px;line-height:14px;color:#222;white-space:nowrap">价格</div>
<div style="left:984.8px;top:4px;width:98.2px;text-align:right;font-size:10.500px;line-height:14px;color:#222;white-space:nowrap">手续费</div>
<div style="left:1087.0px;top:4px;width:99.0px;text-align:right;font-size:10.500px;line-height:14px;color:#222;white-space:nowrap">库存费</div>
<div style="left:1190.0px;top:4px;width:150.0px;text-align:right;font-size:10.500px;line-height:14px;color:#222;white-space:nowrap">获利</div>
<div style="left:1344.0px;top:4px;width:314.0px;text-align:right;font-size:10.500px;line-height:14px;color:#222;white-space:nowrap">注释</div>
<div style="left:0;top:21.3px;width:1663px;height:19.3px;background:#ebebeb;border-top:1px solid #d4d4d4"></div>
<div style="left:0;top:40.6px;width:1663px;height:19.3px;background:#ffffff;border-top:1px solid #d4d4d4"></div>
<div style="left:0;top:60.0px;width:1663px;height:19.3px;background:#ebebeb;border-top:1px solid #d4d4d4"></div>
<div style="left:0;top:79.3px;width:1663px;height:19.3px;background:#ffffff;border-top:1px solid #d4d4d4"></div>
<div style="left:0;top:98.6px;width:1663px;height:19.3px;background:#ebebeb;border-top:1px solid #d4d4d4"></div>
<div style="left:0;top:117.9px;width:1663px;height:19.3px;background:#ffffff;border-top:1px solid #d4d4d4"></div>
<div style="left:0;top:137.3px;width:1663px;height:19.3px;background:#ebebeb;border-top:1px solid #d4d4d4"></div>
<div style="left:0;top:156.6px;width:1663px;height:19.3px;background:#ffffff;border-top:1px solid #d4d4d4"></div>
<div style="left:0;top:175.9px;width:1663px;height:19.3px;background:#ebebeb;border-top:1px solid #d4d4d4"></div>
<div style="left:0;top:195.3px;width:1663px;height:19.3px;background:#ffffff;border-top:1px solid #d4d4d4"></div>
<div style="left:0;top:214.6px;width:1663px;height:19.3px;background:#ebebeb;border-top:1px solid #d4d4d4"></div>
<div style="left:0;top:233.9px;width:1663px;height:19.3px;background:#ffffff;border-top:1px solid #d4d4d4"></div>
<div style="left:132.3px;top:0;width:1px;height:244px;background:#dadada"></div>
<div style="left:318.5px;top:0;width:1px;height:244px;background:#dadada"></div>
<div style="left:410.6px;top:0;width:1px;height:244px;background:#dadada"></div>
<div style="left:481.6px;top:0;width:1px;height:244px;background:#dadada"></div>
<div style="left:574.6px;top:0;width:1px;height:244px;background:#dadada"></div>
<div style="left:677.4px;top:0;width:1px;height:244px;background:#dadada"></div>
<div style="left:779.4px;top:0;width:1px;height:244px;background:#dadada"></div>
<div style="left:882.0px;top:0;width:1px;height:244px;background:#dadada"></div>
<div style="left:984.8px;top:0;width:1px;height:244px;background:#dadada"></div>
<div style="left:1087.0px;top:0;width:1px;height:244px;background:#dadada"></div>
<div style="left:1190.0px;top:0;width:1px;height:244px;background:#dadada"></div>
<div style="left:1344.0px;top:0;width:1px;height:244px;background:#dadada"></div>
<div style="left:19px;top:24.3px;font-size:10.500px;line-height:14px;color:#222;white-space:nowrap">60660011</div>
<div style="left:132.3px;top:24.3px;width:182.2px;text-align:right;font-size:10.500px;line-height:14px;color:#222;white-space:nowrap">2021.09.29 19:27:03</div>
<div style="left:318.5px;top:24.3px;width:88.1px;text-align:right;font-size:10.500px;line-height:14px;color:#222;white-space:nowrap">buy</div>
<div style="left:410.6px;top:24.3px;width:67.0px;text-align:right;font-size:10.500px;line-height:14px;color:#222;white-space:nowrap">2.50</div>
<div style="left:481.6px;top:24.3px;width:89.0px;text-align:right;font-size:10.500px;line-height:14px;color:#222;white-space:nowrap">eurusdm#</div>
<div style="left:574.6px;top:24.3px;width:98.8px;text-align:right;font-size:10.500px;line-height:14px;color:#222;white-space:nowrap">1.16093</div>
<div style="left:677.4px;top:24.3px;width:98.0px;text-align:right;font-size:10.500px;line-height:14px;color:#222;white-space:nowrap">0.00000</div>
<div style="left:779.4px;top:24.3px;width:98.6px;text-align:right;font-size:10.500px;line-height:14px;color:#222;white-space:nowrap">1.16094</div>
<div style="left:882.0px;top:24.3px;width:98.8px;text-align:right;font-size:10.500px;line-height:14px;color:#222;white-space:nowrap">1.15916</div>
<div style="left:984.8px;top:24.3px;width:98.2px;text-align:right;font-size:10.500px;line-height:14px;color:#222;white-space:nowrap">0.00</div>
<div style="left:1087.0px;top:24.3px;width:99.0px;text-align:right;font-size:10.500px;line-height:14px;color:#222;white-space:nowrap">-0.69</div>
<div style="left:1190.0px;top:24.3px;width:135.0px;text-align:right;font-size:10.500px;line-height:14px;color:#222;white-space:nowrap">-4.43</div>
<div style="left:1344.0px;top:24.3px;width:314.0px;text-align:right;font-size:10.500px;line-height:14px;color:#222;white-space:nowrap">{4764681}</div>
<svg style="left:1331px;top:27.8px" width="7" height="7"><path d="M0.500 0.500l6 6M6.500 0.500l-6 6" stroke="#777" stroke-width="1.100"/></svg>
<div style="left:19px;top:43.6px;font-size:10.500px;line-height:14px;color:#222;white-space:nowrap">60661405</div>
<div style="left:132.3px;top:43.6px;width:182.2px;text-align:right;font-size:10.500px;line-height:14px;color:#222;white-space:nowrap">2021.09.29 19:47:04</div>
<div style="left:318.5px;top:43.6px;width:88.1px;text-align:right;font-size:10.500px;line-height:14px;color:#222;white-space:nowrap">buy</div>
<div style="left:410.6px;top:43.6px;width:67.0px;text-align:right;font-size:10.500px;line-height:14px;color:#222;white-space:nowrap">3.00</div>
<div style="left:481.6px;top:43.6px;width:89.0px;text-align:right;font-size:10.500px;line-height:14px;color:#222;white-space:nowrap">eurusdm#</div>
<div style="left:574.6px;top:43.6px;width:98.8px;text-align:right;font-size:10.500px;line-height:14px;color:#222;white-space:nowrap">1.16033</div>
<div style="left:677.4px;top:43.6px;width:98.0px;text-align:right;font-size:10.500px;line-height:14px;color:#222;white-space:nowrap">0.00000</div>
<div style="left:779.4px;top:43.6px;width:98.6px;text-align:right;font-size:10.500px;line-height:14px;color:#222;white-space:nowrap">1.16094</div>
<div style="left:882.0px;top:43.6px;width:98.8px;text-align:right;font-size:10.500px;line-height:14px;color:#222;white-space:nowrap">1.15916</div>
<div style="left:984.8px;top:43.6px;width:98.2px;text-align:right;font-size:10.500px;line-height:14px;color:#222;white-space:nowrap">0.00</div>
<div style="left:1087.0px;top:43.6px;width:99.0px;text-align:right;font-size:10.500px;line-height:14px;color:#222;white-space:nowrap">-0.81</div>
<div style="left:1190.0px;top:43.6px;width:135.0px;text-align:right;font-size:10.500px;line-height:14px;color:#222;white-space:nowrap">-3.51</div>
<div style="left:1344.0px;top:43.6px;width:314.0px;text-align:right;font-size:10.500px;line-height:14px;color:#222;white-space:nowrap">{4766458}</div>
<svg style="left:1331px;top:47.1px" width="7" height="7"><path d="M0.500 0.500l6 6M6.500 0.500l-6 6" stroke="#777" stroke-width="1.100"/></svg>
<div style="left:19px;top:63.0px;font-size:10.500px;line-height:14px;color:#222;white-space:nowrap">60667008</div>
<div style="left:132.3px;top:63.0px;width:182.2px;text-align:right;font-size:10.500px;line-height:14px;color:#222;white-space:nowrap">2021.09.29 22:56:29</div>
<div style="left:318.5px;top:63.0px;width:88.1px;text-align:right;font-size:10.500px;line-height:14px;color:#222;white-space:nowrap">buy</div>
<div style="left:410.6px;top:63.0px;width:67.0px;text-align:right;font-size:10.500px;line-height:14px;color:#222;white-space:nowrap">4.80</div>
<div style="left:481.6px;top:63.0px;width:89.0px;text-align:right;font-size:10.500px;line-height:14px;color:#222;white-space:nowrap">eurusdm#</div>
<div style="left:574.6px;top:63.0px;width:98.8px;text-align:right;font-size:10.500px;line-height:14px;color:#222;white-space:nowrap">1.15912</div>
<div style="left:677.4px;top:63.0px;width:98.0px;text-align:right;font-size:10.500px;line-height:14px;color:#222;white-space:nowrap">0.00000</div>
<div style="left:779.4px;top:63.0px;width:98.6px;text-align:right;font-size:10.500px;line-height:14px;color:#222;white-space:nowrap">1.16094</div>
<div style="left:882.0px;top:63.0px;width:98.8px;text-align:right;font-size:10.500px;line-height:14px;color:#222;white-space:nowrap">1.15916</div>
<div style="left:984.8px;top:63.0px;width:98.2px;text-align:right;font-size:10.500px;line-height:14px;color:#222;white-space:nowrap">0.00</div>
<div style="left:1087.0px;top:63.0px;width:99.0px;text-align:right;font-size:10.500px;line-height:14px;color:#222;white-space:nowrap">-1.30</div>
<div style="left:1190.0px;top:63.0px;width:135.0px;text-align:right;font-size:10.500px;line-height:14px;color:#222;white-space:nowrap">0.19</div>
<div style="left:1344.0px;top:63.0px;width:314.0px;text-align:right;font-size:10.500px;line-height:14px;color:#222;white-space:nowrap">{4772831}</div>
<svg style="left:1331px;top:66.5px" width="7" height="7"><path d="M0.500 0.500l6 6M6.500 0.500l-6 6" stroke="#777" stroke-width="1.100"/></svg>
<div style="left:19px;top:82.3px;font-size:10.500px;line-height:14px;color:#222;white-space:nowrap">60689805</div>
<div style="left:132.3px;top:82.3px;width:182.2px;text-align:right;font-size:10.500px;line-height:14px;color:#222;white-space:nowrap">2021.09.30 13:37:02</div>
<div style="left:318.5px;top:82.3px;width:88.1px;text-align:right;font-size:10.500px;line-height:14px;color:#222;white-space:nowrap">buy</div>
<div style="left:410.6px;top:82.3px;width:67.0px;text-align:right;font-size:10.500px;line-height:14px;color:#222;white-space:nowrap">6.00</div>
<div style="left:481.6px;top:82.3px;width:89.0px;text-align:right;font-size:10.500px;line-height:14px;color:#222;white-space:nowrap">eurusdm#</div>
<div style="left:574.6px;top:82.3px;width:98.8px;text-align:right;font-size:10.500px;line-height:14px;color:#222;white-space:nowrap">1.15729</div>
<div style="left:677.4px;top:82.3px;width:98.0px;text-align:right;font-size:10.500px;line-height:14px;color:#222;white-space:nowrap">0.00000</div>
<div style="left:779.4px;top:82.3px;width:98.6px;text-align:right;font-size:10.500px;line-height:14px;color:#222;white-space:nowrap">1.16094</div>
<div style="left:882.0px;top:82.3px;width:98.8px;text-align:right;font-size:10.500px;line-height:14px;color:#222;white-space:nowrap">1.15916</div>
<div style="left:984.8px;top:82.3px;width:98.2px;text-align:right;font-size:10.500px;line-height:14px;color:#222;white-space:nowrap">0.00</div>
<div style="left:1087.0px;top:82.3px;width:99.0px;text-align:right;font-size:10.500px;line-height:14px;color:#222;white-space:nowrap">-0.64</div>
<div style="left:1190.0px;top:82.3px;width:135.0px;text-align:right;font-size:10.500px;line-height:14px;color:#222;white-space:nowrap">11.22</div>
<div style="left:1344.0px;top:82.3px;width:314.0px;text-align:right;font-size:10.500px;line-height:14px;color:#222;white-space:nowrap">{4802494}</div>
<svg style="left:1331px;top:85.8px" width="7" height="7"><path d="M0.500 0.500l6 6M6.500 0.500l-6 6" stroke="#777" stroke-width="1.100"/></svg>
<div style="left:19px;top:101.6px;font-size:10.500px;line-height:14px;color:#222;white-space:nowrap">60735991</div>
<div style="left:132.3px;top:101.6px;width:182.2px;text-align:right;font-size:10.500px;line-height:14px;color:#222;white-space:nowrap">2021.10.01 04:42:01</div>
<div style="left:318.5px;top:101.6px;width:88.1px;text-align:right;font-size:10.500px;line-height:14px;color:#222;white-space:nowrap">sell</div>
<div style="left:410.6px;top:101.6px;width:67.0px;text-align:right;font-size:10.500px;line-height:14px;color:#222;white-space:nowrap">0.10</div>
<div style="left:481.6px;top:101.6px;width:89.0px;text-align:right;font-size:10.500px;line-height:14px;color:#222;white-space:nowrap">eurusdm#</div>
<div style="left:574.6px;top:101.6px;width:98.8px;text-align:right;font-size:10.500px;line-height:14px;color:#222;white-space:nowrap">1.15717</div>
<div style="left:677.4px;top:101.6px;width:98.0px;text-align:right;font-size:10.500px;line-height:14px;color:#222;white-space:nowrap">0.00000</div>
<div style="left:779.4px;top:101.6px;width:98.6px;text-align:right;font-size:10.500px;line-height:14px;color:#222;white-space:nowrap">1.15798</div>
<div style="left:882.0px;top:101.6px;width:98.8px;text-align:right;font-size:10.500px;line-height:14px;color:#222;white-space:nowrap">1.15950</div>
<div style="left:984.8px;top:101.6px;width:98.2px;text-align:right;font-size:10.500px;line-height:14px;color:#222;white-space:nowrap">0.00</div>
<div style="left:1087.0px;top:101.6px;width:99.0px;text-align:right;font-size:10.500px;line-height:14px;color:#222;white-space:nowrap">0.00</div>
<div style="left:1190.0px;top:101.6px;width:135.0px;text-align:right;font-size:10.500px;line-height:14px;color:#222;white-space:nowrap">-0.23</div>
<div style="left:1344.0px;top:101.6px;width:314.0px;text-align:right;font-size:10.500px;line-height:14px;color:#222;white-space:nowrap">{4857708}</div>
<svg style="left:1331px;top:105.1px" width="7" height="7"><path d="M0.500 0.500l6 6M6.500 0.500l-6 6" stroke="#777" stroke-width="1.100"/></svg>
<div style="left:19px;top:120.9px;font-size:10.500px;line-height:14px;color:#222;white-space:nowrap">60739072</div>
<div style="left:132.3px;top:120.9px;width:182.2px;text-align:right;font-size:10.500px;line-height:14px;color:#222;white-space:nowrap">2021.10.01 07:08:04</div>
<div style="left:318.5px;top:120.9px;width:88.1px;text-align:right;font-size:10.500px;line-height:14px;color:#222;white-space:nowrap">sell</div>
<div style="left:410.6px;top:120.9px;width:67.0px;text-align:right;font-size:10.500px;line-height:14px;color:#222;white-space:nowrap">0.10</div>
<div style="left:481.6px;top:120.9px;width:89.0px;text-align:right;font-size:10.500px;line-height:14px;color:#222;white-space:nowrap">eurusdm#</div>
<div style="left:574.6px;top:120.9px;width:98.8px;text-align:right;font-size:10.500px;line-height:14px;color:#222;white-space:nowrap">1.15780</div>
<div style="left:677.4px;top:120.9px;width:98.0px;text-align:right;font-size:10.500px;line-height:14px;color:#222;white-space:nowrap">0.00000</div>
<div style="left:779.4px;top:120.9px;width:98.6px;text-align:right;font-size:10.500px;line-height:14px;color:#222;white-space:nowrap">1.15798</div>
<div style="left:882.0px;top:120.9px;width:98.8px;text-align:right;font-size:10.500px;line-height:14px;color:#222;white-space:nowrap">1.15950</div>
<div style="left:984.8px;top:120.9px;width:98.2px;text-align:right;font-size:10.500px;line-height:14px;color:#222;white-space:nowrap">0.00</div>
<div style="left:1087.0px;top:120.9px;width:99.0px;text-align:right;font-size:10.500px;line-height:14px;color:#222;white-space:nowrap">0.00</div>
<div style="left:1190.0px;top:120.9px;width:135.0px;text-align:right;font-size:10.500px;line-height:14px;color:#222;white-space:nowrap">-0.17</div>
<div style="left:1344.0px;top:120.9px;width:314.0px;text-align:right;font-size:10.500px;line-height:14px;color:#222;white-space:nowrap">{4861566}</div>
<svg style="left:1331px;top:124.4px" width="7" height="7"><path d="M0.500 0.500l6 6M6.500 0.500l-6 6" stroke="#777" stroke-width="1.100"/></svg>
<div style="left:19px;top:140.3px;font-size:10.500px;line-height:14px;color:#222;white-space:nowrap">60745010</div>
<div style="left:132.3px;top:140.3px;width:182.2px;text-align:right;font-size:10.500px;line-height:14px;color:#222;white-space:nowrap">2021.10.01 10:04:02</div>
<div style="left:318.5px;top:140.3px;width:88.1px;text-align:right;font-size:10.500px;line-height:14px;color:#222;white-space:nowrap">sell</div>
<div style="left:410.6px;top:140.3px;width:67.0px;text-align:right;font-size:10.500px;line-height:14px;color:#222;white-space:nowrap">0.10</div>
<div style="left:481.6px;top:140.3px;width:89.0px;text-align:right;font-size:10.500px;line-height:14px;color:#222;white-space:nowrap">eurusdm#</div>
<div style="left:574.6px;top:140.3px;width:98.8px;text-align:right;font-size:10.500px;line-height:14px;color:#222;white-space:nowrap">1.15873</div>
<div style="left:677.4px;top:140.3px;width:98.0px;text-align:right;font-size:10.500px;line-height:14px;color:#222;white-space:nowrap">0.00000</div>
<div style="left:779.4px;top:140.3px;width:98.6px;text-align:right;font-size:10.500px;line-height:14px;color:#222;white-space:nowrap">1.15798</div>
<div style="left:882.0px;top:140.3px;width:98.8px;text-align:right;font-size:10.500px;line-height:14px;color:#222;white-space:nowrap">1.15950</div>
<div style="left:984.8px;top:140.3px;width:98.2px;text-align:right;font-size:10.500px;line-height:14px;color:#222;white-space:nowrap">0.00</div>
<div style="left:1087.0px;top:140.3px;width:99.0px;text-align:right;font-size:10.500px;line-height:14px;color:#222;white-space:nowrap">0.00</div>
<div style="left:1190.0px;top:140.3px;width:135.0px;text-align:right;font-size:10.500px;line-height:14px;color:#222;white-space:nowrap">-0.08</div>
<div style="left:1344.0px;top:140.3px;width:314.0px;text-align:right;font-size:10.500px;line-height:14px;color:#222;white-space:nowrap">{4868589}</div>
<svg style="left:1331px;top:143.8px" width="7" height="7"><path d="M0.500 0.500l6 6M6.500 0.500l-6 6" stroke="#777" stroke-width="1.100"/></svg>
<div style="left:19px;top:159.6px;font-size:10.500px;line-height:14px;color:#222;white-space:nowrap">60746512</div>
<div style="left:132.3px;top:159.6px;width:182.2px;text-align:right;font-size:10.500px;line-height:14px;color:#222;white-space:nowrap">2021.10.01 10:31:01</div>
<div style="left:318.5px;top:159.6px;width:88.1px;text-align:right;font-size:10.500px;line-height:14px;color:#222;white-space:nowrap">sell</div>
<div style="left:410.6px;top:159.6px;width:67.0px;text-align:right;font-size:10.500px;line-height:14px;color:#222;white-space:nowrap">0.10</div>
<div style="left:481.6px;top:159.6px;width:89.0px;text-align:right;font-size:10.500px;line-height:14px;color:#222;white-space:nowrap">gbpusdm#</div>
<div style="left:574.6px;top:159.6px;width:98.8px;text-align:right;font-size:10.500px;line-height:14px;color:#222;white-space:nowrap">1.34586</div>
<div style="left:677.4px;top:159.6px;width:98.0px;text-align:right;font-size:10.500px;line-height:14px;color:#222;white-space:nowrap">0.00000</div>
<div style="left:779.4px;top:159.6px;width:98.6px;text-align:right;font-size:10.500px;line-height:14px;color:#222;white-space:nowrap">1.35284</div>
<div style="left:882.0px;top:159.6px;width:98.8px;text-align:right;font-size:10.500px;line-height:14px;color:#222;white-space:nowrap">1.35478</div>
<div style="left:984.8px;top:159.6px;width:98.2px;text-align:right;font-size:10.500px;line-height:14px;color:#222;white-space:nowrap">0.00</div>
<div style="left:1087.0px;top:159.6px;width:99.0px;text-align:right;font-size:10.500px;line-height:14px;color:#222;white-space:nowrap">0.00</div>
<div style="left:1190.0px;top:159.6px;width:135.0px;text-align:right;font-size:10.500px;line-height:14px;color:#222;white-space:nowrap">-0.89</div>
<div style="left:1344.0px;top:159.6px;width:314.0px;text-align:right;font-size:10.500px;line-height:14px;color:#222;white-space:nowrap">{4870372}</div>
<svg style="left:1331px;top:163.1px" width="7" height="7"><path d="M0.500 0.500l6 6M6.500 0.500l-6 6" stroke="#777" stroke-width="1.100"/></svg>
<div style="left:19px;top:178.9px;font-size:10.500px;line-height:14px;color:#222;white-space:nowrap">60749062</div>
<div style="left:132.3px;top:178.9px;width:182.2px;text-align:right;font-size:10.500px;line-height:14px;color:#222;white-space:nowrap">2021.10.01 11:38:01</div>
<div style="left:318.5px;top:178.9px;width:88.1px;text-align:right;font-size:10.500px;line-height:14px;color:#222;white-space:nowrap">sell</div>
<div style="left:410.6px;top:178.9px;width:67.0px;text-align:right;font-size:10.500px;line-height:14px;color:#222;white-space:nowrap">0.10</div>
<div style="left:481.6px;top:178.9px;width:89.0px;text-align:right;font-size:10.500px;line-height:14px;color:#222;white-space:nowrap">gbpusdm#</div>
<div style="left:574.6px;top:178.9px;width:98.8px;text-align:right;font-size:10.500px;line-height:14px;color:#222;white-space:nowrap">1.34700</div>
<div style="left:677.4px;top:178.9px;width:98.0px;text-align:right;font-size:10.500px;line-height:14px;color:#222;white-space:nowrap">0.00000</div>
<div style="left:779.4px;top:178.9px;width:98.6px;text-align:right;font-size:10.500px;line-height:14px;color:#222;white-space:nowrap">1.35284</div>
<div style="left:882.0px;top:178.9px;width:98.8px;text-align:right;font-size:10.500px;line-height:14px;color:#222;white-space:nowrap">1.35478</div>
<div style="left:984.8px;top:178.9px;width:98.2px;text-align:right;font-size:10.500px;line-height:14px;color:#222;white-space:nowrap">0.00</div>
<div style="left:1087.0px;top:178.9px;width:99.0px;text-align:right;font-size:10.500px;line-height:14px;color:#222;white-space:nowrap">0.00</div>
<div style="left:1190.0px;top:178.9px;width:135.0px;text-align:right;font-size:10.500px;line-height:14px;color:#222;white-space:nowrap">-0.78</div>
<div style="left:1344.0px;top:178.9px;width:314.0px;text-align:right;font-size:10.500px;line-height:14px;color:#222;white-space:nowrap">{4873479}</div>
<svg style="left:1331px;top:182.4px" width="7" height="7"><path d="M0.500 0.500l6 6M6.500 0.500l-6 6" stroke="#777" stroke-width="1.100"/></svg>
<div style="left:19px;top:198.3px;font-size:10.500px;line-height:14px;color:#222;white-space:nowrap">60749642</div>
<div style="left:132.3px;top:198.3px;width:182.2px;text-align:right;font-size:10.500px;line-height:14px;color:#222;white-space:nowrap">2021.10.01 11:46:01</div>
<div style="left:318.5px;top:198.3px;width:88.1px;text-align:right;font-size:10.500px;line-height:14px;color:#222;white-space:nowrap">sell</div>
<div style="left:410.6px;top:198.3px;width:67.0px;text-align:right;font-size:10.500px;line-height:14px;color:#222;white-space:nowrap">0.10</div>
<div style="left:481.6px;top:198.3px;width:89.0px;text-align:right;font-size:10.500px;line-height:14px;color:#222;white-space:nowrap">gbpusdm#</div>
<div style="left:574.6px;top:198.3px;width:98.8px;text-align:right;font-size:10.500px;line-height:14px;color:#222;white-space:nowrap">1.34766</div>
<div style="left:677.4px;top:198.3px;width:98.0px;text-align:right;font-size:10.500px;line-height:14px;color:#222;white-space:nowrap">0.00000</div>
<div style="left:779.4px;top:198.3px;width:98.6px;text-align:right;font-size:10.500px;line-height:14px;color:#222;white-space:nowrap">1.35284</div>
<div style="left:882.0px;top:198.3px;width:98.8px;text-align:right;font-size:10.500px;line-height:14px;color:#222;white-space:nowrap">1.35478</div>
<div style="left:984.8px;top:198.3px;width:98.2px;text-align:right;font-size:10.500px;line-height:14px;color:#222;white-space:nowrap">0.00</div>
<div style="left:1087.0px;top:198.3px;width:99.0px;text-align:right;font-size:10.500px;line-height:14px;color:#222;white-space:nowrap">0.00</div>
<div style="left:1190.0px;top:198.3px;width:135.0px;text-align:right;font-size:10.500px;line-height:14px;color:#222;white-space:nowrap">-0.71</div>
<div style="left:1344.0px;top:198.3px;width:314.0px;text-align:right;font-size:10.500px;line-height:14px;color:#222;white-space:nowrap">{4874134}</div>
<svg style="left:1331px;top:201.8px" width="7" height="7"><path d="M0.500 0.500l6 6M6.500 0.500l-6 6" stroke="#777" stroke-width="1.100"/></svg>
<div style="left:19px;top:217.6px;font-size:10.500px;line-height:14px;color:#222;white-space:nowrap">60750737</div>
<div style="left:132.3px;top:217.6px;width:182.2px;text-align:right;font-size:10.500px;line-height:14px;color:#222;white-space:nowrap">2021.10.01 12:12:11</div>
<div style="left:318.5px;top:217.6px;width:88.1px;text-align:right;font-size:10.500px;line-height:14px;color:#222;white-space:nowrap">sell</div>
<div style="left:410.6px;top:217.6px;width:67.0px;text-align:right;font-size:10.500px;line-height:14px;color:#222;white-space:nowrap">0.10</div>
<div style="left:481.6px;top:217.6px;width:89.0px;text-align:right;font-size:10.500px;line-height:14px;color:#222;white-space:nowrap">gbpusdm#</div>
<div style="left:574.6px;top:217.6px;width:98.8px;text-align:right;font-size:10.500px;line-height:14px;color:#222;white-space:nowrap">1.34826</div>
<div style="left:677.4px;top:217.6px;width:98.0px;text-align:right;font-size:10.500px;line-height:14px;color:#222;white-space:nowrap">0.00000</div>
<div style="left:779.4px;top:217.6px;width:98.6px;text-align:right;font-size:10.500px;line-height:14px;color:#222;white-space:nowrap">1.35284</div>
<div style="left:882.0px;top:217.6px;width:98.8px;text-align:right;font-size:10.500px;line-height:14px;color:#222;white-space:nowrap">1.35478</div>
<div style="left:984.8px;top:217.6px;width:98.2px;text-align:right;font-size:10.500px;line-height:14px;color:#222;white-space:nowrap">0.00</div>
<div style="left:1087.0px;top:217.6px;width:99.0px;text-align:right;font-size:10.500px;line-height:14px;color:#222;white-space:nowrap">0.00</div>
<div style="left:1190.0px;top:217.6px;width:135.0px;text-align:right;font-size:10.500px;line-height:14px;color:#222;white-space:nowrap">-0.65</div>
<div style="left:1344.0px;top:217.6px;width:314.0px;text-align:right;font-size:10.500px;line-height:14px;color:#222;white-space:nowrap">{4875425}</div>
<svg style="left:1331px;top:221.1px" width="7" height="7"><path d="M0.500 0.500l6 6M6.500 0.500l-6 6" stroke="#777" stroke-width="1.100"/></svg>
<div style="left:19px;top:236.9px;font-size:10.500px;line-height:14px;color:#222;white-space:nowrap">60751482</div>
<div style="left:132.3px;top:236.9px;width:182.2px;text-align:right;font-size:10.500px;line-height:14px;color:#222;white-space:nowrap">2021.10.01 12:23:02</div>
<div style="left:318.5px;top:236.9px;width:88.1px;text-align:right;font-size:10.500px;line-height:14px;color:#222;white-space:nowrap">sell</div>
<div style="left:410.6px;top:236.9px;width:67.0px;text-align:right;font-size:10.500px;line-height:14px;color:#222;white-space:nowrap">0.30</div>
<div style="left:481.6px;top:236.9px;width:89.0px;text-align:right;font-size:10.500px;line-height:14px;color:#222;white-space:nowrap">gbpusdm#</div>
<div style="left:574.6px;top:236.9px;width:98.8px;text-align:right;font-size:10.500px;line-height:14px;color:#222;white-space:nowrap">1.34905</div>
<div style="left:677.4px;top:236.9px;width:98.0px;text-align:right;font-size:10.500px;line-height:14px;color:#222;white-space:nowrap">0.00000</div>
<div style="left:779.4px;top:236.9px;width:98.6px;text-align:right;font-size:10.500px;line-height:14px;color:#222;white-space:nowrap">1.35284</div>
<div style="left:882.0px;top:236.9px;width:98.8px;text-align:right;font-size:10.500px;line-height:14px;color:#222;white-space:nowrap">1.35478</div>
<div style="left:984.8px;top:236.9px;width:98.2px;text-align:right;font-size:10.500px;line-height:14px;color:#222;white-space:nowrap">0.00</div>
<div style="left:1087.0px;top:236.9px;width:99.0px;text-align:right;font-size:10.500px;line-height:14px;color:#222;white-space:nowrap">-0.01</div>
<div style="left:1190.0px;top:236.9px;width:135.0px;text-align:right;font-size:10.500px;line-height:14px;color:#222;white-space:nowrap">-1.71</div>
<div style="left:1344.0px;top:236.9px;width:314.0px;text-align:right;font-size:10.500px;line-height:14px;color:#222;white-space:nowrap">{4876194}</div>
<svg style="left:1331px;top:240.4px" width="7" height="7"><path d="M0.500 0.500l6 6M6.500 0.500l-6 6" stroke="#777" stroke-width="1.100"/></svg>
</div>
<svg style="left:240px;top:731px" width="13" height="15" viewBox="0 0 13 15"><path d="M1 0.500h6l3 3v9.500h-9z" fill="#fff" stroke="#666" stroke-width="0.900"/><path d="M7 0.500v3h3" fill="none" stroke="#666" stroke-width="0.800"/><circle cx="9" cy="11" r="3" fill="#2a8ee0" stroke="rgba(0,0,0,.35)" stroke-width="0.600"/></svg>
<svg style="left:240px;top:751px" width="13" height="15" viewBox="0 0 13 15"><path d="M1 0.500h6l3 3v9.500h-9z" fill="#fff" stroke="#666" stroke-width="0.900"/><path d="M7 0.500v3h3" fill="none" stroke="#666" stroke-width="0.800"/><circle cx="9" cy="11" r="3" fill="#2a8ee0" stroke="rgba(0,0,0,.35)" stroke-width="0.600"/></svg>
<svg style="left:240px;top:770px" width="13" height="15" viewBox="0 0 13 15"><path d="M1 0.500h6l3 3v9.500h-9z" fill="#fff" stroke="#666" stroke-width="0.900"/><path d="M7 0.500v3h3" fill="none" stroke="#666" stroke-width="0.800"/><circle cx="9" cy="11" r="3" fill="#2a8ee0" stroke="rgba(0,0,0,.35)" stroke-width="0.600"/></svg>
<svg style="left:240px;top:789px" width="13" height="15" viewBox="0 0 13 15"><path d="M1 0.500h6l3 3v9.500h-9z" fill="#fff" stroke="#666" stroke-width="0.900"/><path d="M7 0.500v3h3" fill="none" stroke="#666" stroke-width="0.800"/><circle cx="9" cy="11" r="3" fill="#2a8ee0" stroke="rgba(0,0,0,.35)" stroke-width="0.600"/></svg>
<svg style="left:240px;top:809px" width="13" height="15" viewBox="0 0 13 15"><path d="M1 0.500h6l3 3v9.500h-9z" fill="#fff" stroke="#666" stroke-width="0.900"/><path d="M7 0.500v3h3" fill="none" stroke="#666" stroke-width="0.800"/><circle cx="9" cy="11" r="3" fill="#e0391f" stroke="rgba(0,0,0,.35)" stroke-width="0.600"/></svg>
<svg style="left:240px;top:828px" width="13" height="15" viewBox="0 0 13 15"><path d="M1 0.500h6l3 3v9.500h-9z" fill="#fff" stroke="#666" stroke-width="0.900"/><path d="M7 0.500v3h3" fill="none" stroke="#666" stroke-width="0.800"/><circle cx="9" cy="11" r="3" fill="#e0391f" stroke="rgba(0,0,0,.35)" stroke-width="0.600"/></svg>
<svg style="left:240px;top:847px" width="13" height="15" viewBox="0 0 13 15"><path d="M1 0.500h6l3 3v9.500h-9z" fill="#fff" stroke="#666" stroke-width="0.900"/><path d="M7 0.500v3h3" fill="none" stroke="#666" stroke-width="0.800"/><circle cx="9" cy="11" r="3" fill="#e0391f" stroke="rgba(0,0,0,.35)" stroke-width="0.600"/></svg>
<svg style="left:240px;top:867px" width="13" height="15" viewBox="0 0 13 15"><path d="M1 0.500h6l3 3v9.500h-9z" fill="#fff" stroke="#666" stroke-width="0.900"/><path d="M7 0.500v3h3" fill="none" stroke="#666" stroke-width="0.800"/><circle cx="9" cy="11" r="3" fill="#e0391f" stroke="rgba(0,0,0,.35)" stroke-width="0.600"/></svg>
<svg style="left:240px;top:886px" width="13" height="15" viewBox="0 0 13 15"><path d="M1 0.500h6l3 3v9.500h-9z" fill="#fff" stroke="#666" stroke-width="0.900"/><path d="M7 0.500v3h3" fill="none" stroke="#666" stroke-width="0.800"/><circle cx="9" cy="11" r="3" fill="#e0391f" stroke="rgba(0,0,0,.35)" stroke-width="0.600"/></svg>
<svg style="left:240px;top:905px" width="13" height="15" viewBox="0 0 13 15"><path d="M1 0.500h6l3 3v9.500h-9z" fill="#fff" stroke="#666" stroke-width="0.900"/><path d="M7 0.500v3h3" fill="none" stroke="#666" stroke-width="0.800"/><circle cx="9" cy="11" r="3" fill="#e0391f" stroke="rgba(0,0,0,.35)" stroke-width="0.600"/></svg>
<svg style="left:240px;top:925px" width="13" height="15" viewBox="0 0 13 15"><path d="M1 0.500h6l3 3v9.500h-9z" fill="#fff" stroke="#666" stroke-width="0.900"/><path d="M7 0.500v3h3" fill="none" stroke="#666" stroke-width="0.800"/><circle cx="9" cy="11" r="3" fill="#e0391f" stroke="rgba(0,0,0,.35)" stroke-width="0.600"/></svg>
<div style="left:240px;top:943.9px;width:16px;height:8.1px;overflow:hidden">
<svg style="left:0;top:0" width="13" height="15" viewBox="0 0 13 15"><path d="M1 0.500h6l3 3v9.500h-9z" fill="#fff" stroke="#666" stroke-width="0.900"/></svg></div>
<div style="left:236px;top:952px;width:1680px;height:1px;background:#555;"></div>
<div style="left:1899px;top:708px;width:17px;height:244px;background:#f0f0f0;"></div>
<div style="left:1900px;top:774px;width:15px;height:58px;background:#cdcdcd;"></div>
<svg style="left:1899px;top:708px" width="17" height="244"><path d="M5.0 9l3.500-3.500 3.500 3.500M5.0 235l3.500 3.500 3.500-3.500" stroke="#444" stroke-width="1.300" fill="none"/></svg>
<div style="left:238px;top:953px;width:38px;height:20px;background:#ffffff;border:1px solid #333;border-top:none;border-bottom:2px solid #333;border-radius:0 0 2px 2px;"></div>
<div style="left:246px;top:955px;font-size:10.5px;color:#111;white-space:nowrap;line-height:14px;height:14px;">交易</div>
<div style="left:286px;top:955px;font-size:10.5px;color:#8a8a8a;white-space:nowrap;line-height:14px;height:14px;">展示</div>
<div style="left:324px;top:955px;font-size:10.5px;color:#8a8a8a;white-space:nowrap;line-height:14px;height:14px;">账户历史</div>
<div style="left:384px;top:955px;font-size:10.5px;color:#8a8a8a;white-space:nowrap;line-height:14px;height:14px;">新闻</div>
<div style="left:423px;top:955px;font-size:10.5px;color:#8a8a8a;white-space:nowrap;line-height:14px;height:14px;">警报</div>
<div style="left:462px;top:955px;font-size:10.5px;color:#8a8a8a;white-space:nowrap;line-height:14px;height:14px;">邮箱</div>
<div style="left:501px;top:955px;font-size:10.5px;color:#8a8a8a;white-space:nowrap;line-height:14px;height:14px;">市场</div>
<div style="left:557px;top:955px;font-size:10.5px;color:#8a8a8a;white-space:nowrap;line-height:14px;height:14px;">信号</div>
<div style="left:596px;top:955px;font-size:10.5px;color:#8a8a8a;white-space:nowrap;line-height:14px;height:14px;">文章</div>
<div style="left:635px;top:955px;font-size:10.5px;color:#8a8a8a;white-space:nowrap;line-height:14px;height:14px;">代码库</div>
<div style="left:685px;top:955px;font-size:10.5px;color:#8a8a8a;white-space:nowrap;line-height:14px;height:14px;">EA</div>
<div style="left:716px;top:955px;font-size:10.5px;color:#8a8a8a;white-space:nowrap;line-height:14px;height:14px;">日志</div>
<div style="left:524px;top:959px;font-size:8.5px;color:#e02a2a;white-space:nowrap;line-height:10px;height:10px;font-weight:bold;">119</div>
<div style="left:315px;top:957px;width:1px;height:13px;background:#999;"></div>
<div style="left:376px;top:957px;width:1px;height:13px;background:#999;"></div>
<div style="left:415px;top:957px;width:1px;height:13px;background:#999;"></div>
<div style="left:454px;top:957px;width:1px;height:13px;background:#999;"></div>
<div style="left:492px;top:957px;width:1px;height:13px;background:#999;"></div>
<div style="left:549px;top:957px;width:1px;height:13px;background:#999;"></div>
<div style="left:588px;top:957px;width:1px;height:13px;background:#999;"></div>
<div style="left:627px;top:957px;width:1px;height:13px;background:#999;"></div>
<div style="left:676px;top:957px;width:1px;height:13px;background:#999;"></div>
<div style="left:707px;top:957px;width:1px;height:13px;background:#999;"></div>
<div style="left:746px;top:957px;width:1px;height:13px;background:#999;"></div>
<div style="left:222px;top:977px;width:1696px;height:1px;background:#d0d0d0;"></div>
<div style="left:222px;top:978px;width:1696px;height:21px;background:#f0f0f0;"></div>
<div style="left:224px;top:982px;font-size:10.5px;color:#111;white-space:nowrap;line-height:14px;height:14px;">寻求帮助,请按F1键</div>
<div style="left:1220px;top:982px;font-size:10.5px;color:#111;white-space:nowrap;line-height:14px;height:14px;">Default</div>
<div style="left:1215px;top:980px;width:1px;height:17px;background:#c8c8c8;"></div>
<div style="left:1334px;top:980px;width:1px;height:17px;background:#c8c8c8;"></div>
<div style="left:1437px;top:980px;width:1px;height:17px;background:#c8c8c8;"></div>
<div style="left:1510px;top:980px;width:1px;height:17px;background:#c8c8c8;"></div>
<div style="left:1581px;top:980px;width:1px;height:17px;background:#c8c8c8;"></div>
<div style="left:1650px;top:980px;width:1px;height:17px;background:#c8c8c8;"></div>
<div style="left:1721px;top:980px;width:1px;height:17px;background:#c8c8c8;"></div>
<div style="left:1789px;top:980px;width:1px;height:17px;background:#c8c8c8;"></div>
<svg style="left:1794px;top:983px" width="24" height="12"><g stroke-width="1.500"><path d="M1 11v-10M3.500 11v-10M6 11v-10M8.500 11v-10" stroke="#2c8c2c"/><path d="M11 11v-10M13.500 11v-10" stroke="#2c8c2c"/><path d="M16 11v-10M18.500 11v-10M21 11v-10" stroke="#3a6ec0"/></g></svg>
<div style="left:1819px;top:982px;font-size:10.5px;color:#111;white-space:nowrap;line-height:14px;height:14px;">979053/1078 kb</div>
<div style="left:222px;top:999px;width:1696px;height:37px;background:#000000;"></div>
<svg style="left:235px;top:1010px" width="15" height="15" viewBox="0 0 15 15"><path d="M0 2.10L6.80 1.05V6.80H0z M8.20 0.75L15 0V6.80H8.20z M0 8.20H6.80V13.95L0 12.90z M8.20 8.20H15V15L8.20 14.25z" fill="#fff"/></svg>
<svg style="left:277px;top:1009px" width="17" height="17" viewBox="0 0 16 16"><circle cx="10" cy="6" r="4.700" fill="none" stroke="#fff" stroke-width="1.300"/><path d="M6.500 9.500L1 15" stroke="#fff" stroke-width="1.500"/></svg>
<svg style="left:318px;top:1009px" width="20" height="16"><rect x="4.500" y="1.500" width="11" height="13" fill="none" stroke="#fff" stroke-width="1.200"/><path d="M2.500 3.500h-2v9h2M17.500 3.500h2v9h-2" stroke="#fff" stroke-width="1.200" fill="none"/></svg>
<svg style="left:363px;top:1007px" width="20" height="20" viewBox="0 0 20 20"><path d="M1 3h7l1.500 2H19v12H1z" fill="#f7c948"/><path d="M1 7h18v10H1z" fill="#fbd968"/><path d="M5 11h10v6H5z" fill="#3c9be8"/><path d="M7.500 14h5v3h-5z" fill="#fbd968"/></svg>
<svg style="left:406px;top:1007px" width="20" height="20" viewBox="0 0 20 20"><ellipse cx="10" cy="14" rx="9.500" ry="5" fill="#e8c23a"/><circle cx="6" cy="12" r="4" fill="#3a7fd0"/><circle cx="14" cy="12" r="4" fill="#3a7fd0"/><circle cx="10" cy="6" r="4.500" fill="#3fae3f"/><circle cx="10" cy="10.500" r="3" fill="#f0d8b0"/></svg>
<svg style="left:449px;top:1007px" width="21" height="19"><rect width="21" height="19" rx="2" fill="#1c1c1c"/><text x="10.500" y="13.500" font-size="10" font-weight="bold" font-style="italic" text-anchor="middle" fill="#fff" font-family="Liberation Sans">XM</text><path d="M2 13l3-8" stroke="#e02020" stroke-width="1.600"/></svg>
<svg style="left:492px;top:1007px" width="21" height="21" viewBox="0 0 21 21"><circle cx="10.500" cy="10.500" r="10" fill="#e33b2e"/><path d="M10.500 10.500L1.800 5.500A10 10 0 0 0 6 19.400z" fill="#2da94f"/><path d="M10.500 10.500L6 19.400A10 10 0 0 0 20.500 10.500z" fill="#fcc31e"/><path d="M10.500 10.500H20.500A10 10 0 0 0 19 5.500z" fill="#fcc31e"/><circle cx="10.500" cy="10.500" r="4.600" fill="#fff"/><circle cx="10.500" cy="10.500" r="3.600" fill="#4688f1"/></svg>
<div style="left:355px;top:1034px;width:36px;height:2px;background:#76b9ed;"></div>
<div style="left:398px;top:1034px;width:36px;height:2px;background:#76b9ed;"></div>
<div style="left:442px;top:1034px;width:36px;height:2px;background:#76b9ed;"></div>
<div style="left:485px;top:1034px;width:36px;height:2px;background:#76b9ed;"></div>
<svg style="left:1704px;top:1008px" width="120" height="20"><g stroke="#fff" fill="none" stroke-width="1.200"><path d="M3 12l5-5 5 5"/><path d="M27.500 7.500h5v9h-5zM28.500 7.500v-4h3v4M33 16l2 2 3-4"/><path d="M45 8v5h2.500l3.500 3V5l-3.500 3zM53 8c1 1.500 1 3.500 0 5M55.500 6c2 2.500 2 6.500 0 9"/><path d="M69.500 4.500h11v8h-11zM75 12.500v3M71 16h8M66 5v9M64 5h4"/></g></svg>
<div style="left:1791px;top:1010px;font-size:13px;color:#fff;white-space:nowrap;line-height:16px;height:16px;">中</div>
<div style="left:1818px;top:1002px;font-size:10.5px;color:#fff;white-space:nowrap;line-height:14px;height:14px;width:40px;text-align:center;">8:51</div>
<div style="left:1806px;top:1019px;font-size:10.5px;color:#fff;white-space:nowrap;line-height:14px;height:14px;width:64px;text-align:center;">2021/10/3</div>
<svg style="left:1881px;top:1010px" width="16" height="16"><path d="M1.500 1.500h13v10h-4.500l-2 2.500-2-2.500h-4.500z" fill="none" stroke="#fff" stroke-width="1.200"/></svg>
<div style="left:1913px;top:999px;width:1px;height:37px;background:#555;"></div>
<div style="left:0px;top:1036px;width:1918px;height:40px;background:linear-gradient(90deg,#233840 0%,#27404a 30%,#223a4c 60%,#1d3450 100%);"></div>
<svg style="left:13px;top:1047px" width="17" height="17" viewBox="0 0 17 17"><path d="M0 2.38L7.80 1.19V7.80H0z M9.20 0.85L17 0V7.80H9.20z M0 9.20H7.80V15.81L0 14.62z M9.20 9.20H17V17L9.20 16.15z" fill="#fff"/></svg>
<svg style="left:60px;top:1046px" width="19" height="19" viewBox="0 0 16 16"><circle cx="10" cy="6" r="4.700" fill="none" stroke="#fff" stroke-width="1.300"/><path d="M6.500 9.500L1 15" stroke="#fff" stroke-width="1.500"/></svg>
<svg style="left:108px;top:1044px" width="24" height="24" viewBox="0 0 24 24"><g fill="#fff"><path d="M12 12C7 12 4 10 4 6.500S7 2 9.500 2 14 5 12 12z"/><path d="M12 12C12 7 14 4 17.500 4S22 7 22 9.500 19 14 12 12z"/><path d="M12 12C17 12 20 14 20 17.500S17 22 14.500 22 10 19 12 12z"/><path d="M12 12C12 17 10 20 6.500 20S2 17 2 14.500 5 10 12 12z"/></g></svg>
<svg style="left:163px;top:1044px" width="23" height="23" viewBox="0 0 20 20"><path d="M1 3h7l1.500 2H19v12H1z" fill="#f7c948"/><path d="M1 7h18v10H1z" fill="#fbd968"/><path d="M5 11h10v6H5z" fill="#3c9be8"/><path d="M7.500 14h5v3h-5z" fill="#fbd968"/></svg>
<div style="left:522px;top:1036px;width:160px;height:40px;background:#485a64;"></div>
<svg style="left:210px;top:1044px" width="24" height="24" viewBox="0 0 24 24"><circle cx="12" cy="12" r="11" fill="#4cc24a" stroke="#2b8a2c" stroke-width="0.800"/><circle cx="12" cy="12" r="6.500" fill="none" stroke="#fff" stroke-width="2.400"/><path d="M6 12.500h12" stroke="#fff" stroke-width="2.200"/><path d="M14 16l6 3" stroke="#4cc24a" stroke-width="4"/><ellipse cx="12" cy="12" rx="12" ry="4" fill="none" stroke="#9be08a" stroke-width="1" transform="rotate(-20 12 12)"/></svg>
<div style="left:238px;top:1047px;font-size:12px;color:#fff;white-space:nowrap;line-height:17px;height:17px;">【新提醒】发表主...</div>
<svg style="left:370px;top:1044px" width="24" height="24" viewBox="0 0 24 24"><circle cx="7" cy="6" r="5" fill="#d0d6e0"/><rect x="7" y="5" width="14" height="11" rx="3" fill="#58a0ea"/><rect x="9" y="7" width="10" height="6.500" fill="#9cd0fa"/><rect x="5" y="14" width="12" height="7" rx="3" fill="#b8c0d0"/><circle cx="19" cy="18.500" r="3" fill="#d8dce6"/></svg>
<div style="left:399px;top:1047px;font-size:12px;color:#fff;white-space:nowrap;line-height:17px;height:17px;">3【跟单】03XM/...</div>
<svg style="left:531px;top:1043px" width="26" height="26" viewBox="0 0 26 26"><circle cx="13" cy="13" r="12.500" fill="#0a2f86"/><circle cx="13" cy="12" r="8" fill="#1b57c4"/><path d="M6 16l5-9 3 5 3-7 3 11" stroke="#8fd0ff" stroke-width="1.600" fill="none"/><path d="M5 19h16" stroke="#bfe0ff" stroke-width="1"/></svg>
<div style="left:559px;top:1047px;font-size:12px;color:#fff;white-space:nowrap;line-height:17px;height:17px;">老徐操盘助手EA交...</div>
<div style="left:204px;top:1074px;width:152px;height:2px;background:#76b9ed;"></div>
<div style="left:365px;top:1074px;width:152px;height:2px;background:#76b9ed;"></div>
<div style="left:522px;top:1074px;width:160px;height:2px;background:#76b9ed;"></div>
<div style="left:1604px;top:1048px;font-size:11px;color:#fff;white-space:nowrap;line-height:14px;height:14px;font-family:'Liberation Mono',monospace;">CH</div>
<svg style="left:1625px;top:1045px" width="18" height="18"><rect x="1" y="1" width="16" height="16" rx="4" fill="#f0541c" transform="rotate(-8 9 9)"/><text x="9" y="14" font-size="14" font-weight="bold" font-style="italic" text-anchor="middle" fill="#fff" font-family="Liberation Sans">S</text></svg>
<svg style="left:1668px;top:1046px" width="120" height="22"><g stroke="#fff" fill="none" stroke-width="1.300"><path d="M2 11l6-6 6 6"/><path d="M72 7v6h3l4 3.500V3.500l-4 3.500zM82 7c1.300 1.800 1.300 4.200 0 6M85 4.500c2.400 3 2.400 8 0 11"/><path d="M50 16a8 8 0 0 1 10-10" /><path d="M53 16a5 5 0 0 1 7-6.500"/><path d="M47 15.500a11 11 0 0 1 13-13"/></g><circle cx="59" cy="15" r="1.500" fill="#fff"/><ellipse cx="31" cy="9" rx="5" ry="6" fill="#111"/><ellipse cx="31" cy="13" rx="4" ry="4.500" fill="#fff"/><circle cx="29" cy="6" r="1.300" fill="#fff"/><circle cx="33" cy="6" r="1.300" fill="#fff"/><path d="M26 12l-2 3M36 12l2 3" stroke="#e03020" stroke-width="2"/><rect x="33" y="9" width="8" height="7" rx="1" fill="#f2b01e" stroke="none"/></svg>
<svg style="left:1764px;top:1044px" width="24" height="24"><circle cx="12" cy="12" r="10" fill="#1f4a40" stroke="#3fd07a" stroke-width="2.400"/><path d="M3.500 15a9 9 0 0 0 17 0z" fill="#2fc46c"/><text x="12" y="16.500" font-size="12" text-anchor="middle" fill="#fff" font-family="Liberation Sans">33</text></svg>
<div style="left:1803px;top:1039px;font-size:12px;color:#fff;white-space:nowrap;line-height:16px;height:16px;">8:52 周日</div>
<div style="left:1799px;top:1056px;font-size:12px;color:#fff;white-space:nowrap;line-height:16px;height:16px;">2021/10/</div>
<svg style="left:1855px;top:1037px" width="10" height="10"><circle cx="5" cy="5" r="3" fill="#f02020"/></svg>
<svg style="left:1846px;top:1048px" width="66" height="26"><rect x="1" y="2" width="20" height="20" rx="5" fill="#e8614a" opacity="0.9"/><circle cx="11" cy="12" r="5" fill="none" stroke="#fff" stroke-width="1.300"/><text x="26" y="19" font-size="13" font-weight="bold" fill="#d8523c" font-family="Liberation Serif">EX</text><text x="44" y="19" font-size="13" font-weight="bold" fill="#d8523c" font-family="Liberation Serif">ub</text></svg>
<svg style="left:1878px;top:1044px" width="22" height="26"><rect x="2" y="2" width="16" height="13" fill="#fff"/><path d="M5 6h10M5 9h10M5 12h7" stroke="#1d3450" stroke-width="1"/><circle cx="11" cy="19" r="5.500" fill="none" stroke="#ddd" stroke-width="1"/><path d="M11 16v5" stroke="#fff" stroke-width="1.300"/></svg>
<div style="left:1913px;top:1036px;width:1px;height:40px;background:#66757d;"></div>
<svg style="left:0;top:43px" width="219" height="240"><g stroke="#a0a0a0" stroke-width="1" stroke-dasharray="1,1" fill="none"><path d="M9.5 14v148"/><path d="M14 9.5h8M14 73.5h8M14 153.5h8"/><path d="M28.5 17v40M28.5 81v56M28.5 161v56"/><path d="M29 25.5h10M29 41.5h10M29 57.5h10M29 89.5h10M29 105.5h10M29 121.5h10M29 137.5h10M29 169.5h10M29 185.5h10M29 201.5h10M29 217.5h10"/></g><g fill="#fff" stroke="#909090"><rect x="5.5" y="5.5" width="8" height="8"/><rect x="5.5" y="69.5" width="8" height="8"/><rect x="5.5" y="149.5" width="8" height="8"/></g><path d="M7.5 9.5h4M7.5 73.5h4M7.5 153.5h4" stroke="#333"/></svg>
<svg style="left:18.5px;top:43px" width="20" height="18" viewBox="0 0 18 16"><circle cx="5" cy="4" r="3.2" fill="#c4ccd8"/><rect x="5" y="3" width="10" height="8" rx="2" fill="#58a0ea"/><rect x="6.5" y="4.5" width="7" height="4.5" fill="#9cd0fa"/><rect x="4" y="10" width="8" height="4.5" rx="2" fill="#b4bccc"/><circle cx="14" cy="12.5" r="2.2" fill="#d4d8e2"/></svg>
<div style="left:40px;top:45px;font-size:12px;color:#000;white-space:nowrap;line-height:16px;height:16px;">【服务器】</div>
<svg style="left:39px;top:60px" width="16" height="16" viewBox="0 0 16 16"><rect x="2" y="0.5" width="12" height="10" rx="1" fill="#d8d8d8" stroke="#555" stroke-width="1"/><rect x="4" y="2" width="8" height="6" fill="#1010d0"/><rect x="0.5" y="11" width="15" height="4" rx="1" fill="#c8c8c8" stroke="#444" stroke-width="1"/></svg>
<div style="left:60px;top:61px;font-size:12px;color:#000;white-space:nowrap;line-height:16px;height:16px;font-family:'Liberation Mono',monospace;"><span style="letter-spacing:-1.250px">1</span>【信号】</div>
<svg style="left:39px;top:76px" width="16" height="16" viewBox="0 0 16 16"><rect x="2" y="0.5" width="12" height="10" rx="1" fill="#d8d8d8" stroke="#555" stroke-width="1"/><rect x="4" y="2" width="8" height="6" fill="#1010d0"/><rect x="0.5" y="11" width="15" height="4" rx="1" fill="#c8c8c8" stroke="#444" stroke-width="1"/><path d="M2.500 7l3.800 4L14 1.500" stroke="#0a5a12" stroke-width="3.600" fill="none"/><path d="M2.500 7l3.800 4L14 1.500" stroke="#3cd848" stroke-width="2.200" fill="none"/></svg>
<div style="left:57px;top:76px;width:118px;height:16px;background:#f2f2f2;"></div>
<div style="left:60px;top:77px;font-size:12px;color:#000;white-space:nowrap;line-height:16px;height:16px;font-family:'Liberation Mono',monospace;"><span style="letter-spacing:-1.250px">3</span>【跟单】<span style="letter-spacing:-1.250px">03XM/</span>文佳<span style="letter-spacing:-1.250px">1</span></div>
<svg style="left:39.5px;top:93px" width="14" height="14" viewBox="0 0 15 15"><path d="M4.5 0.8h6l3.700 3.700v6l-3.700 3.700h-6l-3.700-3.700v-6z" fill="#cc1626" stroke="#0a0000" stroke-width="1.600"/><path d="M4.3 4.3l6.4 6.4M10.7 4.3l-6.4 6.4" stroke="#fff" stroke-width="2.4" stroke-linecap="round"/></svg>
<div style="left:60px;top:93px;font-size:12px;color:#000;white-space:nowrap;line-height:16px;height:16px;font-family:'Liberation Mono',monospace;"><span style="letter-spacing:-1.250px">26</span>【跟单】小马</div>
<svg style="left:18.5px;top:107px" width="20" height="18" viewBox="0 0 18 16"><circle cx="5" cy="4" r="3.2" fill="#c4ccd8"/><rect x="5" y="3" width="10" height="8" rx="2" fill="#58a0ea"/><rect x="6.5" y="4.5" width="7" height="4.5" fill="#9cd0fa"/><rect x="4" y="10" width="8" height="4.5" rx="2" fill="#b4bccc"/><circle cx="14" cy="12.5" r="2.2" fill="#d4d8e2"/></svg>
<div style="left:40px;top:109px;font-size:12px;color:#000;white-space:nowrap;line-height:16px;height:16px;">其他</div>
<svg style="left:39.5px;top:125px" width="14" height="14" viewBox="0 0 15 15"><path d="M4.5 0.8h6l3.700 3.700v6l-3.700 3.700h-6l-3.700-3.700v-6z" fill="#cc1626" stroke="#0a0000" stroke-width="1.600"/><path d="M4.3 4.3l6.4 6.4M10.7 4.3l-6.4 6.4" stroke="#fff" stroke-width="2.4" stroke-linecap="round"/></svg>
<div style="left:60px;top:125px;font-size:12px;color:#000;white-space:nowrap;line-height:16px;height:16px;font-family:'Liberation Mono',monospace;"><span style="letter-spacing:-1.250px">106.75.85.5</span></div>
<svg style="left:39.5px;top:141px" width="14" height="14" viewBox="0 0 15 15"><path d="M4.5 0.8h6l3.700 3.700v6l-3.700 3.700h-6l-3.700-3.700v-6z" fill="#cc1626" stroke="#0a0000" stroke-width="1.600"/><path d="M4.3 4.3l6.4 6.4M10.7 4.3l-6.4 6.4" stroke="#fff" stroke-width="2.4" stroke-linecap="round"/></svg>
<div style="left:60px;top:141px;font-size:12px;color:#000;white-space:nowrap;line-height:16px;height:16px;font-family:'Liberation Mono',monospace;"><span style="letter-spacing:-1.250px">152.32.174.121</span></div>
<svg style="left:39.5px;top:157px" width="14" height="14" viewBox="0 0 15 15"><path d="M4.5 0.8h6l3.700 3.700v6l-3.700 3.700h-6l-3.700-3.700v-6z" fill="#cc1626" stroke="#0a0000" stroke-width="1.600"/><path d="M4.3 4.3l6.4 6.4M10.7 4.3l-6.4 6.4" stroke="#fff" stroke-width="2.4" stroke-linecap="round"/></svg>
<div style="left:60px;top:157px;font-size:12px;color:#000;white-space:nowrap;line-height:16px;height:16px;font-family:'Liberation Mono',monospace;"><span style="letter-spacing:-1.250px">ex</span>风控</div>
<svg style="left:39.5px;top:173px" width="14" height="14" viewBox="0 0 15 15"><path d="M4.5 0.8h6l3.700 3.700v6l-3.700 3.700h-6l-3.700-3.700v-6z" fill="#cc1626" stroke="#0a0000" stroke-width="1.600"/><path d="M4.3 4.3l6.4 6.4M10.7 4.3l-6.4 6.4" stroke="#fff" stroke-width="2.4" stroke-linecap="round"/></svg>
<div style="left:60px;top:173px;font-size:12px;color:#000;white-space:nowrap;line-height:16px;height:16px;font-family:'Liberation Mono',monospace;">百鸟</div>
<svg style="left:18.5px;top:187px" width="20" height="18" viewBox="0 0 18 16"><circle cx="5" cy="4" r="3.2" fill="#c4ccd8"/><rect x="5" y="3" width="10" height="8" rx="2" fill="#58a0ea"/><rect x="6.5" y="4.5" width="7" height="4.5" fill="#9cd0fa"/><rect x="4" y="10" width="8" height="4.5" rx="2" fill="#b4bccc"/><circle cx="14" cy="12.5" r="2.2" fill="#d4d8e2"/></svg>
<div style="left:40px;top:189px;font-size:12px;color:#000;white-space:nowrap;line-height:16px;height:16px;">测试用</div>
<svg style="left:39.5px;top:205px" width="14" height="14" viewBox="0 0 15 15"><path d="M4.5 0.8h6l3.700 3.700v6l-3.700 3.700h-6l-3.700-3.700v-6z" fill="#cc1626" stroke="#0a0000" stroke-width="1.600"/><path d="M4.3 4.3l6.4 6.4M10.7 4.3l-6.4 6.4" stroke="#fff" stroke-width="2.4" stroke-linecap="round"/></svg>
<div style="left:60px;top:205px;font-size:12px;color:#000;white-space:nowrap;line-height:16px;height:16px;font-family:'Liberation Mono',monospace;"><span style="letter-spacing:-1.250px">2 1688</span></div>
<svg style="left:39.5px;top:221px" width="14" height="14" viewBox="0 0 15 15"><path d="M4.5 0.8h6l3.700 3.700v6l-3.700 3.700h-6l-3.700-3.700v-6z" fill="#cc1626" stroke="#0a0000" stroke-width="1.600"/><path d="M4.3 4.3l6.4 6.4M10.7 4.3l-6.4 6.4" stroke="#fff" stroke-width="2.4" stroke-linecap="round"/></svg>
<div style="left:60px;top:221px;font-size:12px;color:#000;white-space:nowrap;line-height:16px;height:16px;font-family:'Liberation Mono',monospace;"><span style="letter-spacing:-1.250px">7</span>【跟单】<span style="letter-spacing:-1.250px">7XM/</span>大彬</div>
<svg style="left:39.5px;top:237px" width="14" height="14" viewBox="0 0 15 15"><path d="M4.5 0.8h6l3.700 3.700v6l-3.700 3.700h-6l-3.700-3.700v-6z" fill="#cc1626" stroke="#0a0000" stroke-width="1.600"/><path d="M4.3 4.3l6.4 6.4M10.7 4.3l-6.4 6.4" stroke="#fff" stroke-width="2.4" stroke-linecap="round"/></svg>
<div style="left:60px;top:237px;font-size:12px;color:#000;white-space:nowrap;line-height:16px;height:16px;font-family:'Liberation Mono',monospace;"><span style="letter-spacing:-1.250px">16TX</span></div>
<svg style="left:39.5px;top:253px" width="14" height="14" viewBox="0 0 15 15"><path d="M4.5 0.8h6l3.700 3.700v6l-3.700 3.700h-6l-3.700-3.700v-6z" fill="#cc1626" stroke="#0a0000" stroke-width="1.600"/><path d="M4.3 4.3l6.4 6.4M10.7 4.3l-6.4 6.4" stroke="#fff" stroke-width="2.4" stroke-linecap="round"/></svg>
<div style="left:60px;top:253px;font-size:12px;color:#000;white-space:nowrap;line-height:16px;height:16px;font-family:'Liberation Mono',monospace;"><span style="letter-spacing:-1.250px">18AL/ex</span></div>
<svg style="left:0;top:0" width="260" height="110"><path d="M158.3 38 L143.2 44.7 L125.5 52.7 L116.6 59.3 L113.5 57.5 L109 69.2 L121.5 68.4 L120.6 64.6 L125.5 60.2 L143.2 49.1 Z" fill="#f03a32"/><path d="M247.8 21.3 L236.7 26.9 L214.3 39.5 L192 52.2 L177.2 60.4 L162.3 69.3 L159.3 67 L147.4 86.4 L173.5 78.5 L172.5 77 L177.2 74.5 L192 64.1 L214.3 47.7 L236.7 31 Z" fill="#f03a32"/></svg>
</body></html>
